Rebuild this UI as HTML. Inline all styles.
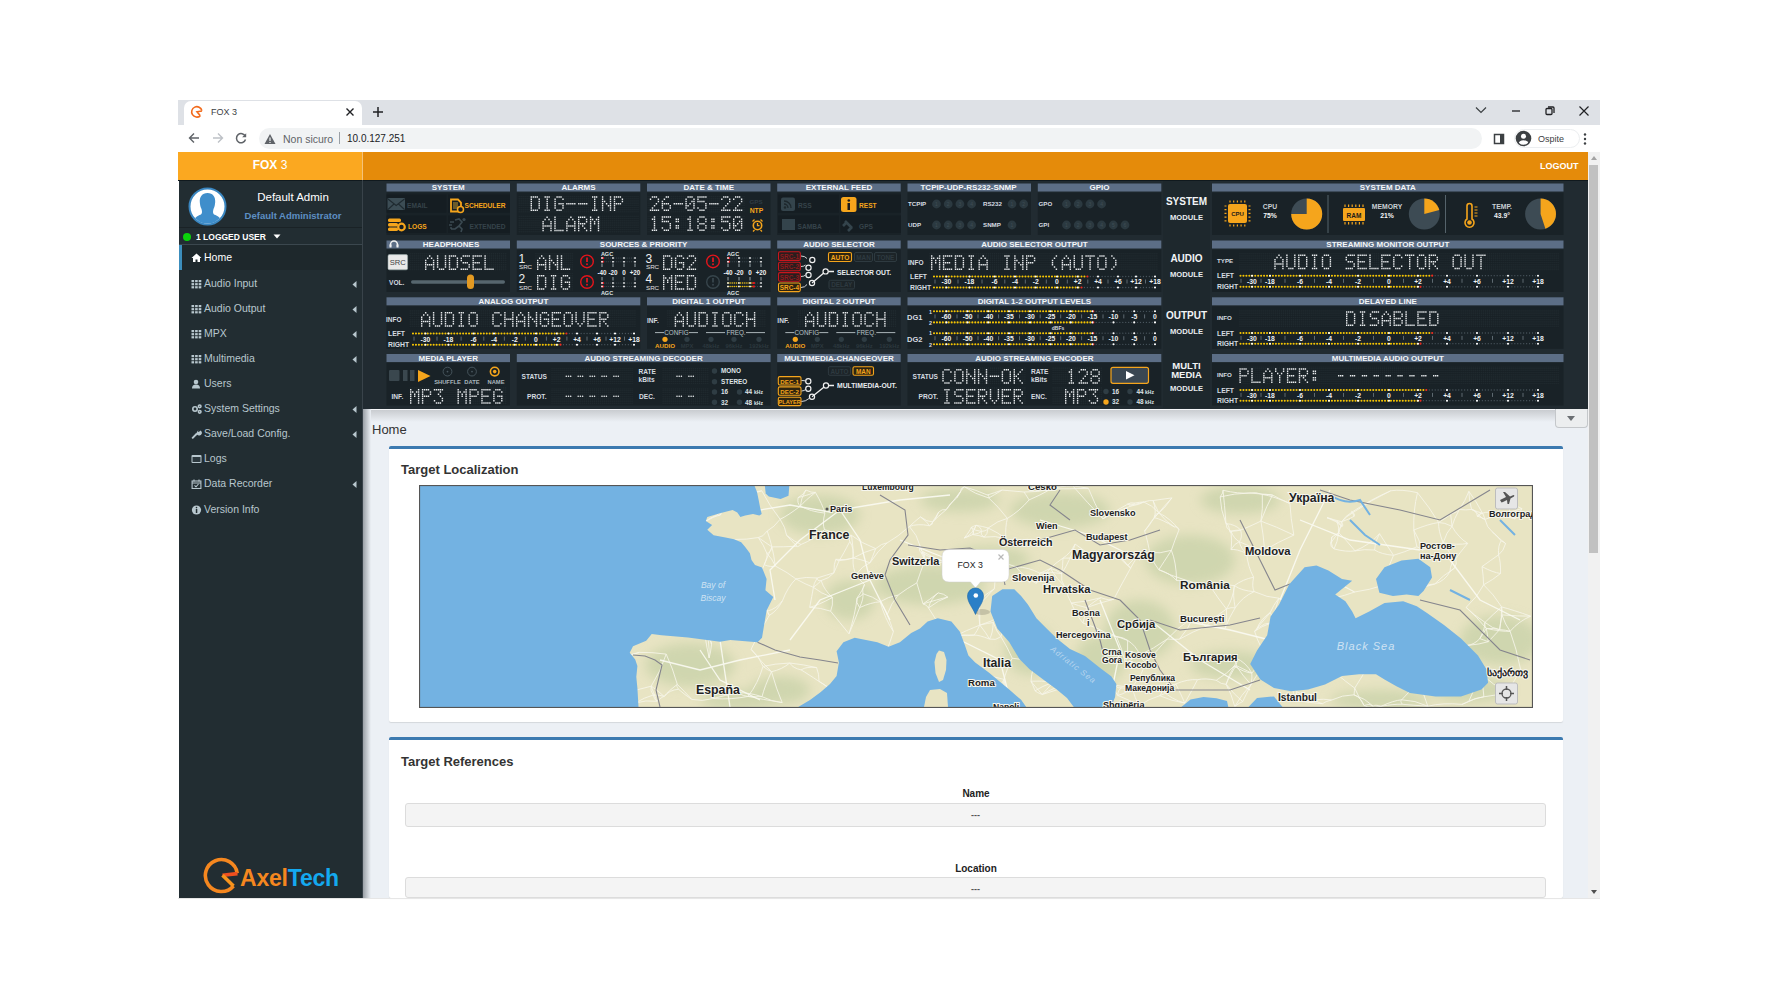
<!DOCTYPE html>
<html><head><meta charset="utf-8">
<style>
*{box-sizing:border-box;margin:0;padding:0}
html,body{width:1777px;height:1000px;overflow:hidden;background:#fff;font-family:"Liberation Sans",sans-serif}
.a{position:absolute}
#tabstrip{left:178px;top:100px;width:1422px;height:25px;background:#dee1e6}
#tab{left:184px;top:101px;width:178px;height:24px;background:#fff;border-radius:7px 7px 0 0}
#toolbar{left:178px;top:125px;width:1422px;height:27px;background:#fff}
#omni{left:259px;top:128px;width:1223px;height:21px;background:#f1f3f4;border-radius:11px}
.chrome-t{font-size:10.5px;color:#5f6368;white-space:nowrap}
#hdrL{left:178px;top:152px;width:184px;height:28px;background:#fba820}
#hdrR{left:362px;top:152px;width:1226px;height:28px;background:#e58b0a}
#side{left:179px;top:180px;width:184px;height:718px;background:#222d32}
#dash{left:363px;top:181px;width:1225px;height:228px;background:#212b31}
#content{left:363px;top:409px;width:1225px;height:489px;background:#ecf0f5}
#scroll{left:1588px;top:152px;width:12px;height:746px;background:#f1f1f1}
.card{background:#fff;border-top:3px solid #3c7ab0;border-radius:2px;box-shadow:0 1px 1px rgba(0,0,0,0.1)}
</style></head><body>
<div id="tabstrip" class="a"></div>
<div id="tab" class="a"></div>
<div id="toolbar" class="a"></div>
<div id="omni" class="a"></div>

<!-- tab strip details -->
<svg class="a" style="left:178px;top:100px" width="1422" height="26">
 <path d="M0,0 H6 V25 H0Z" fill="#dee1e6"/>
</svg>
<svg class="a" style="left:190px;top:105px" width="14" height="14" viewBox="0 0 14 14">
 <path d="M11.9,5.6 A5.2,5.2 0 1 0 10.3,10.8" fill="none" stroke="#f26a1b" stroke-width="1.6"/>
 <path d="M12,6 L7,6.8 L10.3,10.8" fill="none" stroke="#f26a1b" stroke-width="1.6"/>
</svg>
<div class="a chrome-t" style="left:211px;top:107px;font-size:9px;color:#3c4043">FOX 3</div>
<svg class="a" style="left:345px;top:107px" width="10" height="10" viewBox="0 0 10 10"><path d="M1.5,1.5 L8.5,8.5 M8.5,1.5 L1.5,8.5" stroke="#202124" stroke-width="1.4"/></svg>
<svg class="a" style="left:372px;top:106px" width="12" height="12" viewBox="0 0 12 12"><path d="M6,1 V11 M1,6 H11" stroke="#202124" stroke-width="1.5"/></svg>
<svg class="a" style="left:1475px;top:106px" width="12" height="8" viewBox="0 0 12 8"><path d="M1,1.5 L6,6.5 L11,1.5" fill="none" stroke="#3c4043" stroke-width="1.2"/></svg>
<svg class="a" style="left:1510px;top:106px" width="12" height="10" viewBox="0 0 12 10"><path d="M2,5 H10" stroke="#202124" stroke-width="1.3"/></svg>
<svg class="a" style="left:1544px;top:105px" width="12" height="12" viewBox="0 0 12 12"><rect x="2" y="3.5" width="6" height="6" rx="1" fill="none" stroke="#202124" stroke-width="1.3"/><path d="M4,2 H9 Q10,2 10,3 V8" fill="none" stroke="#202124" stroke-width="1.3"/></svg>
<svg class="a" style="left:1577px;top:104px" width="14" height="14" viewBox="0 0 14 14"><path d="M2.5,2.5 L11.5,11.5 M11.5,2.5 L2.5,11.5" stroke="#202124" stroke-width="1.2"/></svg>
<!-- toolbar -->
<svg class="a" style="left:187px;top:131px" width="14" height="14" viewBox="0 0 14 14"><path d="M12,7 H2.5 M7,2.5 L2.5,7 L7,11.5" fill="none" stroke="#5f6368" stroke-width="1.4"/></svg>
<svg class="a" style="left:211px;top:131px" width="14" height="14" viewBox="0 0 14 14"><path d="M2,7 H11.5 M7,2.5 L11.5,7 L7,11.5" fill="none" stroke="#bdc1c6" stroke-width="1.4"/></svg>
<svg class="a" style="left:234px;top:131px" width="14" height="14" viewBox="0 0 14 14"><path d="M11.3,5.3 A4.6,4.6 0 1 0 11.5,8.5" fill="none" stroke="#5f6368" stroke-width="1.5"/><path d="M12.2,2.2 V6.3 H8.1Z" fill="#5f6368"/></svg>
<svg class="a" style="left:264px;top:133px" width="12" height="12" viewBox="0 0 12 12"><path d="M6,1 L11.5,11 H0.5Z" fill="#5f6368"/><path d="M6,4.5 V8 M6,9 V10" stroke="#f1f3f4" stroke-width="1.2"/></svg>
<div class="a chrome-t" style="left:283px;top:133px;font-size:10.5px;color:#5f6368">Non sicuro</div>
<div class="a" style="left:339px;top:132px;width:1px;height:12px;background:#9aa0a6"></div>
<div class="a chrome-t" style="left:347px;top:133px;font-size:10px;color:#202124">10.0.127.251</div>
<svg class="a" style="left:1492px;top:132px" width="14" height="14" viewBox="0 0 14 14"><rect x="2.5" y="2.5" width="9" height="9" fill="none" stroke="#3c4043" stroke-width="1.5"/><rect x="8" y="2.5" width="3.5" height="9" fill="#3c4043"/></svg>
<div class="a" style="left:1514px;top:129px;width:66px;height:19px;border:1px solid #eceef0;border-radius:10px"></div>
<svg class="a" style="left:1515px;top:130px" width="17" height="17" viewBox="0 0 17 17"><defs><clipPath id="pc"><circle cx="8.5" cy="8.5" r="6.3"/></clipPath></defs><circle cx="8.5" cy="8.5" r="7.8" fill="#3c4043"/><g clip-path="url(#pc)" fill="#fff"><circle cx="8.5" cy="6.3" r="2.5"/><ellipse cx="8.5" cy="13.8" rx="5" ry="3.6"/></g></svg>
<div class="a chrome-t" style="left:1538px;top:133.5px;font-size:9px;color:#3c4043">Ospite</div>
<svg class="a" style="left:1581px;top:132px" width="8" height="14" viewBox="0 0 8 14"><circle cx="4" cy="2.5" r="1.2" fill="#3c4043"/><circle cx="4" cy="7" r="1.2" fill="#3c4043"/><circle cx="4" cy="11.5" r="1.2" fill="#3c4043"/></svg>
<div id="hdrL" class="a"></div>
<div id="hdrR" class="a"></div>
<div id="side" class="a"></div>

<div class="a" style="left:362px;top:152px;width:1px;height:28px;background:#f5c27a"></div>
<div class="a" style="left:178px;top:151px;width:184px;height:28px;line-height:28px;text-align:center;color:#fff;font-size:12px"><b>FOX</b> 3</div>
<div class="a" style="left:1540px;top:161px;font-size:9px;font-weight:bold;color:#fff">LOGOUT</div>
<div class="a" style="left:178px;top:180px;width:1410px;height:1px;background:#10191e"></div>
<!-- sidebar -->
<div class="a" style="left:362px;top:180px;width:1px;height:718px;background:#39434a"></div>
<svg class="a" style="left:188px;top:187px" width="39" height="39" viewBox="0 0 39 39">
 <defs><clipPath id="avc"><circle cx="19.5" cy="19.5" r="17"/></clipPath></defs>
 <circle cx="19.5" cy="19.5" r="18" fill="#fff" stroke="#3a86c0" stroke-width="2"/>
 <g clip-path="url(#avc)" fill="#3f8ecb">
  <path d="M19.5,6 C14,6 11.5,10 11.8,15 C12,18 12.5,20 13.5,22 C14,24 14.5,26 13,27.5 C9,29 6,31 4,36 L35,36 C33,31 30,29 26,27.5 C24.5,26 25,24 25.5,22 C26.5,20 27,18 27.2,15 C27.5,10 25,6 19.5,6Z"/>
  <rect x="0" y="34" width="39" height="6"/>
 </g>
</svg>
<div class="a" style="left:229px;top:191px;width:128px;text-align:center;color:#fff;font-size:11.5px">Default Admin</div>
<div class="a" style="left:229px;top:210px;width:128px;text-align:center;color:#5d8fc4;font-size:9.5px;font-weight:bold">Default Administrator</div>
<div class="a" style="left:179px;top:227px;width:183px;height:1px;background:#1a2226"></div>
<div class="a" style="left:179px;top:244px;width:183px;height:1px;background:#3b474e"></div>
<div class="a" style="left:183px;top:233px;width:8px;height:8px;border-radius:50%;background:#0bd30b"></div>
<div class="a" style="left:196px;top:231.5px;color:#fff;font-size:8.5px;font-weight:bold">1 LOGGED USER</div>
<svg class="a" style="left:273px;top:234px" width="8" height="5" viewBox="0 0 8 5"><path d="M0.5,0.5 H7.5 L4,4.5Z" fill="#fff"/></svg>
<div class="a" style="left:179px;top:245px;width:183px;height:25px;background:#1e282c"></div>
<div class="a" style="left:179px;top:245px;width:3px;height:25px;background:#3c8dbc"></div>
<svg class="a" style="left:191px;top:253px" width="11" height="10" viewBox="0 0 10 10"><path d="M5,0.5 L0,5 H1.5 V9 H4 V6.5 H6 V9 H8.5 V5 H10Z" fill="#fff"/></svg>
<div class="a" style="left:204px;top:251px;color:#fff;font-size:10.5px;white-space:nowrap">Home</div>
<svg class="a" style="left:191px;top:279px" width="11" height="10" viewBox="0 0 10 10"><g fill="#b8c7ce"><rect x="0" y="1" width="2.6" height="2.2"/><rect x="3.6" y="1" width="2.6" height="2.2"/><rect x="7.2" y="1" width="2.6" height="2.2"/><rect x="0" y="4.1" width="2.6" height="2.2"/><rect x="3.6" y="4.1" width="2.6" height="2.2"/><rect x="7.2" y="4.1" width="2.6" height="2.2"/><rect x="0" y="7.2" width="2.6" height="2.2"/><rect x="3.6" y="7.2" width="2.6" height="2.2"/><rect x="7.2" y="7.2" width="2.6" height="2.2"/></g></svg>
<div class="a" style="left:204px;top:277px;color:#b8c7ce;font-size:10.5px;white-space:nowrap">Audio Input</div>
<svg class="a" style="left:352px;top:281px" width="5" height="7" viewBox="0 0 5 7"><path d="M4.5,0 V7 L0.5,3.5Z" fill="#b8c7ce"/></svg>
<svg class="a" style="left:191px;top:304px" width="11" height="10" viewBox="0 0 10 10"><g fill="#b8c7ce"><rect x="0" y="1" width="2.6" height="2.2"/><rect x="3.6" y="1" width="2.6" height="2.2"/><rect x="7.2" y="1" width="2.6" height="2.2"/><rect x="0" y="4.1" width="2.6" height="2.2"/><rect x="3.6" y="4.1" width="2.6" height="2.2"/><rect x="7.2" y="4.1" width="2.6" height="2.2"/><rect x="0" y="7.2" width="2.6" height="2.2"/><rect x="3.6" y="7.2" width="2.6" height="2.2"/><rect x="7.2" y="7.2" width="2.6" height="2.2"/></g></svg>
<div class="a" style="left:204px;top:302px;color:#b8c7ce;font-size:10.5px;white-space:nowrap">Audio Output</div>
<svg class="a" style="left:352px;top:306px" width="5" height="7" viewBox="0 0 5 7"><path d="M4.5,0 V7 L0.5,3.5Z" fill="#b8c7ce"/></svg>
<svg class="a" style="left:191px;top:329px" width="11" height="10" viewBox="0 0 10 10"><g fill="#b8c7ce"><rect x="0" y="1" width="2.6" height="2.2"/><rect x="3.6" y="1" width="2.6" height="2.2"/><rect x="7.2" y="1" width="2.6" height="2.2"/><rect x="0" y="4.1" width="2.6" height="2.2"/><rect x="3.6" y="4.1" width="2.6" height="2.2"/><rect x="7.2" y="4.1" width="2.6" height="2.2"/><rect x="0" y="7.2" width="2.6" height="2.2"/><rect x="3.6" y="7.2" width="2.6" height="2.2"/><rect x="7.2" y="7.2" width="2.6" height="2.2"/></g></svg>
<div class="a" style="left:204px;top:327px;color:#b8c7ce;font-size:10.5px;white-space:nowrap">MPX</div>
<svg class="a" style="left:352px;top:331px" width="5" height="7" viewBox="0 0 5 7"><path d="M4.5,0 V7 L0.5,3.5Z" fill="#b8c7ce"/></svg>
<svg class="a" style="left:191px;top:354px" width="11" height="10" viewBox="0 0 10 10"><g fill="#b8c7ce"><rect x="0" y="1" width="2.6" height="2.2"/><rect x="3.6" y="1" width="2.6" height="2.2"/><rect x="7.2" y="1" width="2.6" height="2.2"/><rect x="0" y="4.1" width="2.6" height="2.2"/><rect x="3.6" y="4.1" width="2.6" height="2.2"/><rect x="7.2" y="4.1" width="2.6" height="2.2"/><rect x="0" y="7.2" width="2.6" height="2.2"/><rect x="3.6" y="7.2" width="2.6" height="2.2"/><rect x="7.2" y="7.2" width="2.6" height="2.2"/></g></svg>
<div class="a" style="left:204px;top:352px;color:#b8c7ce;font-size:10.5px;white-space:nowrap">Multimedia</div>
<svg class="a" style="left:352px;top:356px" width="5" height="7" viewBox="0 0 5 7"><path d="M4.5,0 V7 L0.5,3.5Z" fill="#b8c7ce"/></svg>
<svg class="a" style="left:191px;top:379px" width="11" height="10" viewBox="0 0 10 10"><g fill="#b8c7ce"><circle cx="4.5" cy="3" r="2.3"/><path d="M0.5,9.5 Q0.5,5.5 4.5,5.5 Q8.5,5.5 8.5,9.5Z"/></g></svg>
<div class="a" style="left:204px;top:377px;color:#b8c7ce;font-size:10.5px;white-space:nowrap">Users</div>
<svg class="a" style="left:191px;top:404px" width="11" height="10" viewBox="0 0 10 10"><g fill="none" stroke="#b8c7ce" stroke-width="1.6"><circle cx="3.5" cy="5" r="2.2"/><circle cx="8.2" cy="2.3" r="1.3"/><circle cx="8.2" cy="7.8" r="1.3"/></g></svg>
<div class="a" style="left:204px;top:402px;color:#b8c7ce;font-size:10.5px;white-space:nowrap">System Settings</div>
<svg class="a" style="left:352px;top:406px" width="5" height="7" viewBox="0 0 5 7"><path d="M4.5,0 V7 L0.5,3.5Z" fill="#b8c7ce"/></svg>
<svg class="a" style="left:191px;top:429px" width="11" height="10" viewBox="0 0 10 10"><path d="M1.2,8.8 L5,5" stroke="#b8c7ce" stroke-width="1.9" stroke-linecap="round"/><path d="M5.2,3.6 A2.6,2.6 0 1 0 8.9,1.6 L7.4,3 L6.4,2.6 L6.9,1.1Z" fill="#b8c7ce"/></svg>
<div class="a" style="left:204px;top:427px;color:#b8c7ce;font-size:10.5px;white-space:nowrap">Save/Load Config.</div>
<svg class="a" style="left:352px;top:431px" width="5" height="7" viewBox="0 0 5 7"><path d="M4.5,0 V7 L0.5,3.5Z" fill="#b8c7ce"/></svg>
<svg class="a" style="left:191px;top:454px" width="11" height="10" viewBox="0 0 10 10"><g><rect x="0" y="1" width="10" height="8" rx="1" fill="#b8c7ce"/><rect x="1" y="3" width="8" height="5" fill="#2c383e"/></g></svg>
<div class="a" style="left:204px;top:452px;color:#b8c7ce;font-size:10.5px;white-space:nowrap">Logs</div>
<svg class="a" style="left:191px;top:479px" width="11" height="10" viewBox="0 0 10 10"><g fill="none" stroke="#b8c7ce" stroke-width="1.1"><rect x="0.6" y="2" width="8.8" height="7.5"/><path d="M0.6,4 H9.4 M2.5,0.5 V2.5 M7.5,0.5 V2.5 M3,6.3 L4.5,7.8 L7,5"/></g></svg>
<div class="a" style="left:204px;top:477px;color:#b8c7ce;font-size:10.5px;white-space:nowrap">Data Recorder</div>
<svg class="a" style="left:352px;top:481px" width="5" height="7" viewBox="0 0 5 7"><path d="M4.5,0 V7 L0.5,3.5Z" fill="#b8c7ce"/></svg>
<svg class="a" style="left:191px;top:505px" width="11" height="10" viewBox="0 0 10 10"><g><circle cx="5" cy="5" r="4.6" fill="#b8c7ce"/><rect x="4.3" y="4" width="1.5" height="4" fill="#222d32"/><circle cx="5" cy="2.6" r="0.8" fill="#222d32"/></g></svg>
<div class="a" style="left:204px;top:503px;color:#b8c7ce;font-size:10.5px;white-space:nowrap">Version Info</div>

<svg class="a" style="left:200px;top:856px" width="42" height="40" viewBox="200 856 42 40">
 <path d="M237.2,873.2 A16,16 0 1 0 233.5,886" fill="none" stroke="#f5871f" stroke-width="3.6"/>
 <path d="M237.5,873.6 L222.5,875.3" stroke="#ef4f1f" stroke-width="3.6"/>
 <path d="M222.5,875.3 L233.5,886" stroke="#f7941d" stroke-width="3.6"/>
</svg>
<div class="a" style="left:240px;top:864.5px;font-size:23px;font-weight:bold;white-space:nowrap;letter-spacing:-0.2px"><span style="color:#f5871f">Axel</span><span style="color:#14a9ef">Tech</span></div>
<div id="dash" class="a"></div>
<svg class="a" style="left:0;top:0" width="1777" height="1000" font-family="Liberation Sans, sans-serif">
<defs><path id="g65" d="M4 0h1.4v1.5h-1.4zM2 2.2h1.4v1.5h-1.4zM5.9 2.2h1.4v1.5h-1.4zM0 4.4h1.4v1.5h-1.4zM7.9 4.4h1.4v1.5h-1.4zM0 6.6h1.4v1.5h-1.4zM7.9 6.6h1.4v1.5h-1.4zM0 8.8h1.4v1.5h-1.4zM2 8.8h1.4v1.5h-1.4zM4 8.8h1.4v1.5h-1.4zM5.9 8.8h1.4v1.5h-1.4zM7.9 8.8h1.4v1.5h-1.4zM0 11h1.4v1.5h-1.4zM7.9 11h1.4v1.5h-1.4zM0 13.2h1.4v1.5h-1.4zM7.9 13.2h1.4v1.5h-1.4z"/><path id="g66" d="M0 0h1.4v1.5h-1.4zM2 0h1.4v1.5h-1.4zM4 0h1.4v1.5h-1.4zM5.9 0h1.4v1.5h-1.4zM0 2.2h1.4v1.5h-1.4zM7.9 2.2h1.4v1.5h-1.4zM0 4.4h1.4v1.5h-1.4zM7.9 4.4h1.4v1.5h-1.4zM0 6.6h1.4v1.5h-1.4zM2 6.6h1.4v1.5h-1.4zM4 6.6h1.4v1.5h-1.4zM5.9 6.6h1.4v1.5h-1.4zM0 8.8h1.4v1.5h-1.4zM7.9 8.8h1.4v1.5h-1.4zM0 11h1.4v1.5h-1.4zM7.9 11h1.4v1.5h-1.4zM0 13.2h1.4v1.5h-1.4zM2 13.2h1.4v1.5h-1.4zM4 13.2h1.4v1.5h-1.4zM5.9 13.2h1.4v1.5h-1.4z"/><path id="g67" d="M2 0h1.4v1.5h-1.4zM4 0h1.4v1.5h-1.4zM5.9 0h1.4v1.5h-1.4zM0 2.2h1.4v1.5h-1.4zM7.9 2.2h1.4v1.5h-1.4zM0 4.4h1.4v1.5h-1.4zM0 6.6h1.4v1.5h-1.4zM0 8.8h1.4v1.5h-1.4zM0 11h1.4v1.5h-1.4zM7.9 11h1.4v1.5h-1.4zM2 13.2h1.4v1.5h-1.4zM4 13.2h1.4v1.5h-1.4zM5.9 13.2h1.4v1.5h-1.4z"/><path id="g68" d="M0 0h1.4v1.5h-1.4zM2 0h1.4v1.5h-1.4zM4 0h1.4v1.5h-1.4zM5.9 0h1.4v1.5h-1.4zM0 2.2h1.4v1.5h-1.4zM7.9 2.2h1.4v1.5h-1.4zM0 4.4h1.4v1.5h-1.4zM7.9 4.4h1.4v1.5h-1.4zM0 6.6h1.4v1.5h-1.4zM7.9 6.6h1.4v1.5h-1.4zM0 8.8h1.4v1.5h-1.4zM7.9 8.8h1.4v1.5h-1.4zM0 11h1.4v1.5h-1.4zM7.9 11h1.4v1.5h-1.4zM0 13.2h1.4v1.5h-1.4zM2 13.2h1.4v1.5h-1.4zM4 13.2h1.4v1.5h-1.4zM5.9 13.2h1.4v1.5h-1.4z"/><path id="g69" d="M0 0h1.4v1.5h-1.4zM2 0h1.4v1.5h-1.4zM4 0h1.4v1.5h-1.4zM5.9 0h1.4v1.5h-1.4zM7.9 0h1.4v1.5h-1.4zM0 2.2h1.4v1.5h-1.4zM0 4.4h1.4v1.5h-1.4zM0 6.6h1.4v1.5h-1.4zM2 6.6h1.4v1.5h-1.4zM4 6.6h1.4v1.5h-1.4zM5.9 6.6h1.4v1.5h-1.4zM0 8.8h1.4v1.5h-1.4zM0 11h1.4v1.5h-1.4zM0 13.2h1.4v1.5h-1.4zM2 13.2h1.4v1.5h-1.4zM4 13.2h1.4v1.5h-1.4zM5.9 13.2h1.4v1.5h-1.4zM7.9 13.2h1.4v1.5h-1.4z"/><path id="g70" d="M0 0h1.4v1.5h-1.4zM2 0h1.4v1.5h-1.4zM4 0h1.4v1.5h-1.4zM5.9 0h1.4v1.5h-1.4zM7.9 0h1.4v1.5h-1.4zM0 2.2h1.4v1.5h-1.4zM0 4.4h1.4v1.5h-1.4zM0 6.6h1.4v1.5h-1.4zM2 6.6h1.4v1.5h-1.4zM4 6.6h1.4v1.5h-1.4zM5.9 6.6h1.4v1.5h-1.4zM0 8.8h1.4v1.5h-1.4zM0 11h1.4v1.5h-1.4zM0 13.2h1.4v1.5h-1.4z"/><path id="g71" d="M2 0h1.4v1.5h-1.4zM4 0h1.4v1.5h-1.4zM5.9 0h1.4v1.5h-1.4zM0 2.2h1.4v1.5h-1.4zM7.9 2.2h1.4v1.5h-1.4zM0 4.4h1.4v1.5h-1.4zM0 6.6h1.4v1.5h-1.4zM4 6.6h1.4v1.5h-1.4zM5.9 6.6h1.4v1.5h-1.4zM7.9 6.6h1.4v1.5h-1.4zM0 8.8h1.4v1.5h-1.4zM7.9 8.8h1.4v1.5h-1.4zM0 11h1.4v1.5h-1.4zM7.9 11h1.4v1.5h-1.4zM2 13.2h1.4v1.5h-1.4zM4 13.2h1.4v1.5h-1.4zM5.9 13.2h1.4v1.5h-1.4z"/><path id="g72" d="M0 0h1.4v1.5h-1.4zM7.9 0h1.4v1.5h-1.4zM0 2.2h1.4v1.5h-1.4zM7.9 2.2h1.4v1.5h-1.4zM0 4.4h1.4v1.5h-1.4zM7.9 4.4h1.4v1.5h-1.4zM0 6.6h1.4v1.5h-1.4zM2 6.6h1.4v1.5h-1.4zM4 6.6h1.4v1.5h-1.4zM5.9 6.6h1.4v1.5h-1.4zM7.9 6.6h1.4v1.5h-1.4zM0 8.8h1.4v1.5h-1.4zM7.9 8.8h1.4v1.5h-1.4zM0 11h1.4v1.5h-1.4zM7.9 11h1.4v1.5h-1.4zM0 13.2h1.4v1.5h-1.4zM7.9 13.2h1.4v1.5h-1.4z"/><path id="g73" d="M2 0h1.4v1.5h-1.4zM4 0h1.4v1.5h-1.4zM5.9 0h1.4v1.5h-1.4zM4 2.2h1.4v1.5h-1.4zM4 4.4h1.4v1.5h-1.4zM4 6.6h1.4v1.5h-1.4zM4 8.8h1.4v1.5h-1.4zM4 11h1.4v1.5h-1.4zM2 13.2h1.4v1.5h-1.4zM4 13.2h1.4v1.5h-1.4zM5.9 13.2h1.4v1.5h-1.4z"/><path id="g75" d="M0 0h1.4v1.5h-1.4zM7.9 0h1.4v1.5h-1.4zM0 2.2h1.4v1.5h-1.4zM5.9 2.2h1.4v1.5h-1.4zM0 4.4h1.4v1.5h-1.4zM4 4.4h1.4v1.5h-1.4zM0 6.6h1.4v1.5h-1.4zM2 6.6h1.4v1.5h-1.4zM0 8.8h1.4v1.5h-1.4zM4 8.8h1.4v1.5h-1.4zM0 11h1.4v1.5h-1.4zM5.9 11h1.4v1.5h-1.4zM0 13.2h1.4v1.5h-1.4zM7.9 13.2h1.4v1.5h-1.4z"/><path id="g76" d="M0 0h1.4v1.5h-1.4zM0 2.2h1.4v1.5h-1.4zM0 4.4h1.4v1.5h-1.4zM0 6.6h1.4v1.5h-1.4zM0 8.8h1.4v1.5h-1.4zM0 11h1.4v1.5h-1.4zM0 13.2h1.4v1.5h-1.4zM2 13.2h1.4v1.5h-1.4zM4 13.2h1.4v1.5h-1.4zM5.9 13.2h1.4v1.5h-1.4zM7.9 13.2h1.4v1.5h-1.4z"/><path id="g77" d="M0 0h1.4v1.5h-1.4zM7.9 0h1.4v1.5h-1.4zM0 2.2h1.4v1.5h-1.4zM2 2.2h1.4v1.5h-1.4zM5.9 2.2h1.4v1.5h-1.4zM7.9 2.2h1.4v1.5h-1.4zM0 4.4h1.4v1.5h-1.4zM4 4.4h1.4v1.5h-1.4zM7.9 4.4h1.4v1.5h-1.4zM0 6.6h1.4v1.5h-1.4zM4 6.6h1.4v1.5h-1.4zM7.9 6.6h1.4v1.5h-1.4zM0 8.8h1.4v1.5h-1.4zM7.9 8.8h1.4v1.5h-1.4zM0 11h1.4v1.5h-1.4zM7.9 11h1.4v1.5h-1.4zM0 13.2h1.4v1.5h-1.4zM7.9 13.2h1.4v1.5h-1.4z"/><path id="g78" d="M0 0h1.4v1.5h-1.4zM7.9 0h1.4v1.5h-1.4zM0 2.2h1.4v1.5h-1.4zM7.9 2.2h1.4v1.5h-1.4zM0 4.4h1.4v1.5h-1.4zM2 4.4h1.4v1.5h-1.4zM7.9 4.4h1.4v1.5h-1.4zM0 6.6h1.4v1.5h-1.4zM4 6.6h1.4v1.5h-1.4zM7.9 6.6h1.4v1.5h-1.4zM0 8.8h1.4v1.5h-1.4zM5.9 8.8h1.4v1.5h-1.4zM7.9 8.8h1.4v1.5h-1.4zM0 11h1.4v1.5h-1.4zM7.9 11h1.4v1.5h-1.4zM0 13.2h1.4v1.5h-1.4zM7.9 13.2h1.4v1.5h-1.4z"/><path id="g79" d="M2 0h1.4v1.5h-1.4zM4 0h1.4v1.5h-1.4zM5.9 0h1.4v1.5h-1.4zM0 2.2h1.4v1.5h-1.4zM7.9 2.2h1.4v1.5h-1.4zM0 4.4h1.4v1.5h-1.4zM7.9 4.4h1.4v1.5h-1.4zM0 6.6h1.4v1.5h-1.4zM7.9 6.6h1.4v1.5h-1.4zM0 8.8h1.4v1.5h-1.4zM7.9 8.8h1.4v1.5h-1.4zM0 11h1.4v1.5h-1.4zM7.9 11h1.4v1.5h-1.4zM2 13.2h1.4v1.5h-1.4zM4 13.2h1.4v1.5h-1.4zM5.9 13.2h1.4v1.5h-1.4z"/><path id="g80" d="M0 0h1.4v1.5h-1.4zM2 0h1.4v1.5h-1.4zM4 0h1.4v1.5h-1.4zM5.9 0h1.4v1.5h-1.4zM0 2.2h1.4v1.5h-1.4zM7.9 2.2h1.4v1.5h-1.4zM0 4.4h1.4v1.5h-1.4zM7.9 4.4h1.4v1.5h-1.4zM0 6.6h1.4v1.5h-1.4zM2 6.6h1.4v1.5h-1.4zM4 6.6h1.4v1.5h-1.4zM5.9 6.6h1.4v1.5h-1.4zM0 8.8h1.4v1.5h-1.4zM0 11h1.4v1.5h-1.4zM0 13.2h1.4v1.5h-1.4z"/><path id="g82" d="M0 0h1.4v1.5h-1.4zM2 0h1.4v1.5h-1.4zM4 0h1.4v1.5h-1.4zM5.9 0h1.4v1.5h-1.4zM0 2.2h1.4v1.5h-1.4zM7.9 2.2h1.4v1.5h-1.4zM0 4.4h1.4v1.5h-1.4zM7.9 4.4h1.4v1.5h-1.4zM0 6.6h1.4v1.5h-1.4zM2 6.6h1.4v1.5h-1.4zM4 6.6h1.4v1.5h-1.4zM5.9 6.6h1.4v1.5h-1.4zM0 8.8h1.4v1.5h-1.4zM4 8.8h1.4v1.5h-1.4zM0 11h1.4v1.5h-1.4zM5.9 11h1.4v1.5h-1.4zM0 13.2h1.4v1.5h-1.4zM7.9 13.2h1.4v1.5h-1.4z"/><path id="g83" d="M2 0h1.4v1.5h-1.4zM4 0h1.4v1.5h-1.4zM5.9 0h1.4v1.5h-1.4zM7.9 0h1.4v1.5h-1.4zM0 2.2h1.4v1.5h-1.4zM0 4.4h1.4v1.5h-1.4zM2 6.6h1.4v1.5h-1.4zM4 6.6h1.4v1.5h-1.4zM5.9 6.6h1.4v1.5h-1.4zM7.9 8.8h1.4v1.5h-1.4zM7.9 11h1.4v1.5h-1.4zM0 13.2h1.4v1.5h-1.4zM2 13.2h1.4v1.5h-1.4zM4 13.2h1.4v1.5h-1.4zM5.9 13.2h1.4v1.5h-1.4z"/><path id="g84" d="M0 0h1.4v1.5h-1.4zM2 0h1.4v1.5h-1.4zM4 0h1.4v1.5h-1.4zM5.9 0h1.4v1.5h-1.4zM7.9 0h1.4v1.5h-1.4zM4 2.2h1.4v1.5h-1.4zM4 4.4h1.4v1.5h-1.4zM4 6.6h1.4v1.5h-1.4zM4 8.8h1.4v1.5h-1.4zM4 11h1.4v1.5h-1.4zM4 13.2h1.4v1.5h-1.4z"/><path id="g85" d="M0 0h1.4v1.5h-1.4zM7.9 0h1.4v1.5h-1.4zM0 2.2h1.4v1.5h-1.4zM7.9 2.2h1.4v1.5h-1.4zM0 4.4h1.4v1.5h-1.4zM7.9 4.4h1.4v1.5h-1.4zM0 6.6h1.4v1.5h-1.4zM7.9 6.6h1.4v1.5h-1.4zM0 8.8h1.4v1.5h-1.4zM7.9 8.8h1.4v1.5h-1.4zM0 11h1.4v1.5h-1.4zM7.9 11h1.4v1.5h-1.4zM2 13.2h1.4v1.5h-1.4zM4 13.2h1.4v1.5h-1.4zM5.9 13.2h1.4v1.5h-1.4z"/><path id="g86" d="M0 0h1.4v1.5h-1.4zM7.9 0h1.4v1.5h-1.4zM0 2.2h1.4v1.5h-1.4zM7.9 2.2h1.4v1.5h-1.4zM0 4.4h1.4v1.5h-1.4zM7.9 4.4h1.4v1.5h-1.4zM0 6.6h1.4v1.5h-1.4zM7.9 6.6h1.4v1.5h-1.4zM0 8.8h1.4v1.5h-1.4zM7.9 8.8h1.4v1.5h-1.4zM2 11h1.4v1.5h-1.4zM5.9 11h1.4v1.5h-1.4zM4 13.2h1.4v1.5h-1.4z"/><path id="g89" d="M0 0h1.4v1.5h-1.4zM7.9 0h1.4v1.5h-1.4zM0 2.2h1.4v1.5h-1.4zM7.9 2.2h1.4v1.5h-1.4zM2 4.4h1.4v1.5h-1.4zM5.9 4.4h1.4v1.5h-1.4zM4 6.6h1.4v1.5h-1.4zM4 8.8h1.4v1.5h-1.4zM4 11h1.4v1.5h-1.4zM4 13.2h1.4v1.5h-1.4z"/><path id="g48" d="M2 0h1.4v1.5h-1.4zM4 0h1.4v1.5h-1.4zM5.9 0h1.4v1.5h-1.4zM0 2.2h1.4v1.5h-1.4zM7.9 2.2h1.4v1.5h-1.4zM0 4.4h1.4v1.5h-1.4zM5.9 4.4h1.4v1.5h-1.4zM7.9 4.4h1.4v1.5h-1.4zM0 6.6h1.4v1.5h-1.4zM4 6.6h1.4v1.5h-1.4zM7.9 6.6h1.4v1.5h-1.4zM0 8.8h1.4v1.5h-1.4zM2 8.8h1.4v1.5h-1.4zM7.9 8.8h1.4v1.5h-1.4zM0 11h1.4v1.5h-1.4zM7.9 11h1.4v1.5h-1.4zM2 13.2h1.4v1.5h-1.4zM4 13.2h1.4v1.5h-1.4zM5.9 13.2h1.4v1.5h-1.4z"/><path id="g49" d="M4 0h1.4v1.5h-1.4zM2 2.2h1.4v1.5h-1.4zM4 2.2h1.4v1.5h-1.4zM4 4.4h1.4v1.5h-1.4zM4 6.6h1.4v1.5h-1.4zM4 8.8h1.4v1.5h-1.4zM4 11h1.4v1.5h-1.4zM2 13.2h1.4v1.5h-1.4zM4 13.2h1.4v1.5h-1.4zM5.9 13.2h1.4v1.5h-1.4z"/><path id="g50" d="M2 0h1.4v1.5h-1.4zM4 0h1.4v1.5h-1.4zM5.9 0h1.4v1.5h-1.4zM0 2.2h1.4v1.5h-1.4zM7.9 2.2h1.4v1.5h-1.4zM7.9 4.4h1.4v1.5h-1.4zM5.9 6.6h1.4v1.5h-1.4zM4 8.8h1.4v1.5h-1.4zM2 11h1.4v1.5h-1.4zM0 13.2h1.4v1.5h-1.4zM2 13.2h1.4v1.5h-1.4zM4 13.2h1.4v1.5h-1.4zM5.9 13.2h1.4v1.5h-1.4zM7.9 13.2h1.4v1.5h-1.4z"/><path id="g51" d="M0 0h1.4v1.5h-1.4zM2 0h1.4v1.5h-1.4zM4 0h1.4v1.5h-1.4zM5.9 0h1.4v1.5h-1.4zM7.9 0h1.4v1.5h-1.4zM5.9 2.2h1.4v1.5h-1.4zM4 4.4h1.4v1.5h-1.4zM5.9 6.6h1.4v1.5h-1.4zM7.9 8.8h1.4v1.5h-1.4zM0 11h1.4v1.5h-1.4zM7.9 11h1.4v1.5h-1.4zM2 13.2h1.4v1.5h-1.4zM4 13.2h1.4v1.5h-1.4zM5.9 13.2h1.4v1.5h-1.4z"/><path id="g53" d="M0 0h1.4v1.5h-1.4zM2 0h1.4v1.5h-1.4zM4 0h1.4v1.5h-1.4zM5.9 0h1.4v1.5h-1.4zM7.9 0h1.4v1.5h-1.4zM0 2.2h1.4v1.5h-1.4zM0 4.4h1.4v1.5h-1.4zM2 4.4h1.4v1.5h-1.4zM4 4.4h1.4v1.5h-1.4zM5.9 4.4h1.4v1.5h-1.4zM7.9 6.6h1.4v1.5h-1.4zM7.9 8.8h1.4v1.5h-1.4zM0 11h1.4v1.5h-1.4zM7.9 11h1.4v1.5h-1.4zM2 13.2h1.4v1.5h-1.4zM4 13.2h1.4v1.5h-1.4zM5.9 13.2h1.4v1.5h-1.4z"/><path id="g54" d="M4 0h1.4v1.5h-1.4zM5.9 0h1.4v1.5h-1.4zM2 2.2h1.4v1.5h-1.4zM0 4.4h1.4v1.5h-1.4zM0 6.6h1.4v1.5h-1.4zM2 6.6h1.4v1.5h-1.4zM4 6.6h1.4v1.5h-1.4zM5.9 6.6h1.4v1.5h-1.4zM0 8.8h1.4v1.5h-1.4zM7.9 8.8h1.4v1.5h-1.4zM0 11h1.4v1.5h-1.4zM7.9 11h1.4v1.5h-1.4zM2 13.2h1.4v1.5h-1.4zM4 13.2h1.4v1.5h-1.4zM5.9 13.2h1.4v1.5h-1.4z"/><path id="g56" d="M2 0h1.4v1.5h-1.4zM4 0h1.4v1.5h-1.4zM5.9 0h1.4v1.5h-1.4zM0 2.2h1.4v1.5h-1.4zM7.9 2.2h1.4v1.5h-1.4zM0 4.4h1.4v1.5h-1.4zM7.9 4.4h1.4v1.5h-1.4zM2 6.6h1.4v1.5h-1.4zM4 6.6h1.4v1.5h-1.4zM5.9 6.6h1.4v1.5h-1.4zM0 8.8h1.4v1.5h-1.4zM7.9 8.8h1.4v1.5h-1.4zM0 11h1.4v1.5h-1.4zM7.9 11h1.4v1.5h-1.4zM2 13.2h1.4v1.5h-1.4zM4 13.2h1.4v1.5h-1.4zM5.9 13.2h1.4v1.5h-1.4z"/><path id="g45" d="M0 6.6h1.4v1.5h-1.4zM2 6.6h1.4v1.5h-1.4zM4 6.6h1.4v1.5h-1.4zM5.9 6.6h1.4v1.5h-1.4zM7.9 6.6h1.4v1.5h-1.4z"/><path id="g95" d="M2 6.6h1.4v1.5h-1.4zM4 6.6h1.4v1.5h-1.4zM5.9 6.6h1.4v1.5h-1.4z"/><path id="g58" d="M2 2.2h1.4v1.5h-1.4zM4 2.2h1.4v1.5h-1.4zM2 4.4h1.4v1.5h-1.4zM4 4.4h1.4v1.5h-1.4zM2 8.8h1.4v1.5h-1.4zM4 8.8h1.4v1.5h-1.4zM2 11h1.4v1.5h-1.4zM4 11h1.4v1.5h-1.4z"/><path id="g40" d="M5.9 0h1.4v1.5h-1.4zM4 2.2h1.4v1.5h-1.4zM2 4.4h1.4v1.5h-1.4zM2 6.6h1.4v1.5h-1.4zM2 8.8h1.4v1.5h-1.4zM4 11h1.4v1.5h-1.4zM5.9 13.2h1.4v1.5h-1.4z"/><path id="g41" d="M2 0h1.4v1.5h-1.4zM4 2.2h1.4v1.5h-1.4zM5.9 4.4h1.4v1.5h-1.4zM5.9 6.6h1.4v1.5h-1.4zM5.9 8.8h1.4v1.5h-1.4zM4 11h1.4v1.5h-1.4zM2 13.2h1.4v1.5h-1.4z"/><path id="g32" d="M0 0"/><pattern id="ledgrid" width="1.98" height="2.2" patternUnits="userSpaceOnUse"><rect width="1.98" height="2.2" fill="#172025"/><rect width="1.3" height="1.5" fill="#1f292e"/></pattern></defs>
<rect x="386.5" y="192.5" width="123.5" height="42.5" fill="#192227"/>
<rect x="516.8" y="192.5" width="123.5" height="42.5" fill="#192227"/>
<rect x="647" y="192.5" width="123.5" height="42.5" fill="#192227"/>
<rect x="777.2" y="192.5" width="123.5" height="42.5" fill="#192227"/>
<rect x="907.5" y="192.5" width="123.5" height="42.5" fill="#192227"/>
<rect x="1037.8" y="192.5" width="123.5" height="42.5" fill="#192227"/>
<rect x="1212" y="192.5" width="351.5" height="42.5" fill="#192227"/>
<rect x="386.5" y="249.5" width="123.5" height="42.5" fill="#192227"/>
<rect x="516.8" y="249.5" width="253.8" height="42.5" fill="#192227"/>
<rect x="777.2" y="249.5" width="123.5" height="42.5" fill="#192227"/>
<rect x="907.5" y="249.5" width="253.8" height="42.5" fill="#192227"/>
<rect x="1212" y="249.5" width="351.5" height="42.5" fill="#192227"/>
<rect x="386.5" y="306.3" width="253.8" height="42.5" fill="#192227"/>
<rect x="647" y="306.3" width="123.5" height="42.5" fill="#192227"/>
<rect x="777.2" y="306.3" width="123.5" height="42.5" fill="#192227"/>
<rect x="907.5" y="306.3" width="253.8" height="42.5" fill="#192227"/>
<rect x="1212" y="306.3" width="351.5" height="42.5" fill="#192227"/>
<rect x="386.5" y="363" width="123.5" height="42.5" fill="#192227"/>
<rect x="516.8" y="363" width="253.8" height="42.5" fill="#192227"/>
<rect x="777.2" y="363" width="123.5" height="42.5" fill="#192227"/>
<rect x="907.5" y="363" width="253.8" height="42.5" fill="#192227"/>
<rect x="1212" y="363" width="351.5" height="42.5" fill="#192227"/>
<rect x="1163" y="181" width="47" height="227" fill="#1e282d"/>
<rect x="386.5" y="183.5" width="123.5" height="8" fill="#5c6e86"/>
<text x="448.2" y="190.4" font-size="8" fill="#f4f6f8" text-anchor="middle" font-weight="bold">SYSTEM</text>
<rect x="516.8" y="183.5" width="123.5" height="8" fill="#5c6e86"/>
<text x="578.5" y="190.4" font-size="8" fill="#f4f6f8" text-anchor="middle" font-weight="bold">ALARMS</text>
<rect x="647" y="183.5" width="123.5" height="8" fill="#5c6e86"/>
<text x="708.8" y="190.4" font-size="8" fill="#f4f6f8" text-anchor="middle" font-weight="bold">DATE &amp; TIME</text>
<rect x="777.2" y="183.5" width="123.5" height="8" fill="#5c6e86"/>
<text x="839" y="190.4" font-size="8" fill="#f4f6f8" text-anchor="middle" font-weight="bold">EXTERNAL FEED</text>
<rect x="907.5" y="183.5" width="123.5" height="8" fill="#5c6e86"/>
<text x="968.5" y="190.4" font-size="8" fill="#f4f6f8" text-anchor="middle" font-weight="bold">TCPIP-UDP-RS232-SNMP</text>
<rect x="1037.8" y="183.5" width="123.5" height="8" fill="#5c6e86"/>
<text x="1099.5" y="190.4" font-size="8" fill="#f4f6f8" text-anchor="middle" font-weight="bold">GPIO</text>
<rect x="1212" y="183.5" width="351.5" height="8" fill="#5c6e86"/>
<text x="1387.8" y="190.4" font-size="8" fill="#f4f6f8" text-anchor="middle" font-weight="bold">SYSTEM DATA</text>
<rect x="386.5" y="240.5" width="123.5" height="8" fill="#5c6e86"/>
<text x="451" y="247.4" font-size="8" fill="#f4f6f8" text-anchor="middle" font-weight="bold">HEADPHONES</text>
<rect x="516.8" y="240.5" width="253.8" height="8" fill="#5c6e86"/>
<text x="643.6" y="247.4" font-size="8" fill="#f4f6f8" text-anchor="middle" font-weight="bold">SOURCES &amp; PRIORITY</text>
<rect x="777.2" y="240.5" width="123.5" height="8" fill="#5c6e86"/>
<text x="839" y="247.4" font-size="8" fill="#f4f6f8" text-anchor="middle" font-weight="bold">AUDIO SELECTOR</text>
<rect x="907.5" y="240.5" width="253.8" height="8" fill="#5c6e86"/>
<text x="1034.4" y="247.4" font-size="8" fill="#f4f6f8" text-anchor="middle" font-weight="bold">AUDIO SELECTOR OUTPUT</text>
<rect x="1212" y="240.5" width="351.5" height="8" fill="#5c6e86"/>
<text x="1387.8" y="247.4" font-size="8" fill="#f4f6f8" text-anchor="middle" font-weight="bold">STREAMING MONITOR OUTPUT</text>
<rect x="386.5" y="297.3" width="253.8" height="8" fill="#5c6e86"/>
<text x="513.4" y="304.2" font-size="8" fill="#f4f6f8" text-anchor="middle" font-weight="bold">ANALOG OUTPUT</text>
<rect x="647" y="297.3" width="123.5" height="8" fill="#5c6e86"/>
<text x="708.8" y="304.2" font-size="8" fill="#f4f6f8" text-anchor="middle" font-weight="bold">DIGITAL 1 OUTPUT</text>
<rect x="777.2" y="297.3" width="123.5" height="8" fill="#5c6e86"/>
<text x="839" y="304.2" font-size="8" fill="#f4f6f8" text-anchor="middle" font-weight="bold">DIGITAL 2 OUTPUT</text>
<rect x="907.5" y="297.3" width="253.8" height="8" fill="#5c6e86"/>
<text x="1034.4" y="304.2" font-size="8" fill="#f4f6f8" text-anchor="middle" font-weight="bold">DIGITAL 1-2 OUTPUT LEVELS</text>
<rect x="1212" y="297.3" width="351.5" height="8" fill="#5c6e86"/>
<text x="1387.8" y="304.2" font-size="8" fill="#f4f6f8" text-anchor="middle" font-weight="bold">DELAYED LINE</text>
<rect x="386.5" y="354" width="123.5" height="8" fill="#5c6e86"/>
<text x="448.2" y="360.9" font-size="8" fill="#f4f6f8" text-anchor="middle" font-weight="bold">MEDIA PLAYER</text>
<rect x="516.8" y="354" width="253.8" height="8" fill="#5c6e86"/>
<text x="643.6" y="360.9" font-size="8" fill="#f4f6f8" text-anchor="middle" font-weight="bold">AUDIO STREAMING DECODER</text>
<rect x="777.2" y="354" width="123.5" height="8" fill="#5c6e86"/>
<text x="839" y="360.9" font-size="8" fill="#f4f6f8" text-anchor="middle" font-weight="bold">MULTIMEDIA-CHANGEOVER</text>
<rect x="907.5" y="354" width="253.8" height="8" fill="#5c6e86"/>
<text x="1034.4" y="360.9" font-size="8" fill="#f4f6f8" text-anchor="middle" font-weight="bold">AUDIO STREAMING ENCODER</text>
<rect x="1212" y="354" width="351.5" height="8" fill="#5c6e86"/>
<text x="1387.8" y="360.9" font-size="8" fill="#f4f6f8" text-anchor="middle" font-weight="bold">MULTIMEDIA AUDIO OUTPUT</text>
<text x="1186.5" y="204.5" font-size="10" fill="#f2f4f6" text-anchor="middle" font-weight="bold">SYSTEM</text>
<text x="1186.5" y="220" font-size="7.6" fill="#e8ecef" text-anchor="middle" font-weight="bold">MODULE</text>
<text x="1186.5" y="261.5" font-size="10" fill="#f2f4f6" text-anchor="middle" font-weight="bold">AUDIO</text>
<text x="1186.5" y="277" font-size="7.6" fill="#e8ecef" text-anchor="middle" font-weight="bold">MODULE</text>
<text x="1186.5" y="318.5" font-size="10" fill="#f2f4f6" text-anchor="middle" font-weight="bold">OUTPUT</text>
<text x="1186.5" y="334" font-size="7.6" fill="#e8ecef" text-anchor="middle" font-weight="bold">MODULE</text>
<text x="1186.5" y="369" font-size="9.5" fill="#f2f4f6" text-anchor="middle" font-weight="bold">MULTI</text>
<text x="1186.5" y="378" font-size="9.5" fill="#f2f4f6" text-anchor="middle" font-weight="bold">MEDIA</text>
<text x="1186.5" y="391" font-size="7.6" fill="#e8ecef" text-anchor="middle" font-weight="bold">MODULE</text>
<rect x="518" y="195" width="121" height="17.5" fill="url(#ledgrid)"/>
<g fill="#e9ecee"><use href="#g68" x="530.6" y="196.3"/><use href="#g73" x="542.5" y="196.3"/><use href="#g71" x="554.4" y="196.3"/><use href="#g45" x="566.2" y="196.3"/><use href="#g45" x="578.1" y="196.3"/><use href="#g73" x="590" y="196.3"/><use href="#g78" x="601.9" y="196.3"/><use href="#g80" x="613.8" y="196.3"/></g>
<rect x="518" y="215" width="121" height="18" fill="url(#ledgrid)"/>
<g fill="#e9ecee"><use href="#g65" x="542.4" y="216.5"/><use href="#g76" x="554.3" y="216.5"/><use href="#g65" x="566.2" y="216.5"/><use href="#g82" x="578" y="216.5"/><use href="#g77" x="589.9" y="216.5"/></g>
<rect x="647.5" y="195" width="97.5" height="17.5" fill="url(#ledgrid)"/>
<g fill="#e9ecee"><use href="#g50" x="649.8" y="196.3"/><use href="#g54" x="661.7" y="196.3"/><use href="#g45" x="673.6" y="196.3"/><use href="#g48" x="685.4" y="196.3"/><use href="#g53" x="697.3" y="196.3"/><use href="#g45" x="709.2" y="196.3"/><use href="#g50" x="721.1" y="196.3"/><use href="#g50" x="733" y="196.3"/></g>
<rect x="647.5" y="215" width="97.5" height="18" fill="url(#ledgrid)"/>
<g fill="#e9ecee"><use href="#g49" x="649.8" y="216.3"/><use href="#g53" x="661.7" y="216.3"/><use href="#g58" x="673.6" y="216.3"/><use href="#g49" x="685.4" y="216.3"/><use href="#g56" x="697.3" y="216.3"/><use href="#g58" x="709.2" y="216.3"/><use href="#g53" x="721.1" y="216.3"/><use href="#g48" x="733" y="216.3"/></g>
<rect x="410" y="253" width="97" height="18" fill="url(#ledgrid)"/>
<g fill="#e9ecee"><use href="#g65" x="425" y="255.3"/><use href="#g85" x="436.9" y="255.3"/><use href="#g68" x="448.8" y="255.3"/><use href="#g83" x="460.6" y="255.3"/><use href="#g69" x="472.5" y="255.3"/><use href="#g76" x="484.4" y="255.3"/></g>
<rect x="535" y="253" width="38" height="18" fill="url(#ledgrid)"/>
<g fill="#e9ecee"><use href="#g65" x="537" y="255.3"/><use href="#g78" x="548.9" y="255.3"/><use href="#g76" x="560.8" y="255.3"/></g>
<rect x="535" y="273" width="38" height="18" fill="url(#ledgrid)"/>
<g fill="#e9ecee"><use href="#g68" x="537" y="275"/><use href="#g73" x="548.9" y="275"/><use href="#g71" x="560.8" y="275"/></g>
<rect x="661" y="253" width="38" height="18" fill="url(#ledgrid)"/>
<g fill="#e9ecee"><use href="#g68" x="663" y="255.3"/><use href="#g71" x="674.9" y="255.3"/><use href="#g50" x="686.8" y="255.3"/></g>
<rect x="661" y="273" width="38" height="18" fill="url(#ledgrid)"/>
<g fill="#e9ecee"><use href="#g77" x="663" y="275"/><use href="#g69" x="674.9" y="275"/><use href="#g68" x="686.8" y="275"/></g>
<rect x="929" y="253" width="229" height="18" fill="url(#ledgrid)"/>
<g fill="#e9ecee"><use href="#g77" x="931" y="255.3"/><use href="#g69" x="942.9" y="255.3"/><use href="#g68" x="954.8" y="255.3"/><use href="#g73" x="966.6" y="255.3"/><use href="#g65" x="978.5" y="255.3"/><use href="#g73" x="1002.3" y="255.3"/><use href="#g78" x="1014.2" y="255.3"/><use href="#g80" x="1026" y="255.3"/><use href="#g40" x="1049.8" y="255.3"/><use href="#g65" x="1061.7" y="255.3"/><use href="#g85" x="1073.6" y="255.3"/><use href="#g84" x="1085.4" y="255.3"/><use href="#g79" x="1097.3" y="255.3"/><use href="#g41" x="1109.2" y="255.3"/></g>
<rect x="1239" y="252.5" width="320" height="18.5" fill="url(#ledgrid)"/>
<g fill="#e9ecee"><use href="#g65" x="1274.3" y="254.5"/><use href="#g85" x="1286.2" y="254.5"/><use href="#g68" x="1298.1" y="254.5"/><use href="#g73" x="1309.9" y="254.5"/><use href="#g79" x="1321.8" y="254.5"/><use href="#g83" x="1345.6" y="254.5"/><use href="#g69" x="1357.5" y="254.5"/><use href="#g76" x="1369.3" y="254.5"/><use href="#g69" x="1381.2" y="254.5"/><use href="#g67" x="1393.1" y="254.5"/><use href="#g84" x="1405" y="254.5"/><use href="#g79" x="1416.9" y="254.5"/><use href="#g82" x="1428.7" y="254.5"/><use href="#g79" x="1452.5" y="254.5"/><use href="#g85" x="1464.4" y="254.5"/><use href="#g84" x="1476.3" y="254.5"/></g>
<rect x="409" y="310" width="227" height="18" fill="url(#ledgrid)"/>
<g fill="#e9ecee"><use href="#g65" x="421" y="312"/><use href="#g85" x="432.9" y="312"/><use href="#g68" x="444.8" y="312"/><use href="#g73" x="456.6" y="312"/><use href="#g79" x="468.5" y="312"/><use href="#g67" x="492.3" y="312"/><use href="#g72" x="504.2" y="312"/><use href="#g65" x="516" y="312"/><use href="#g78" x="527.9" y="312"/><use href="#g71" x="539.8" y="312"/><use href="#g69" x="551.7" y="312"/><use href="#g79" x="563.6" y="312"/><use href="#g86" x="575.4" y="312"/><use href="#g69" x="587.3" y="312"/><use href="#g82" x="599.2" y="312"/></g>
<rect x="667" y="310" width="99" height="18" fill="url(#ledgrid)"/>
<g fill="#e9ecee"><use href="#g65" x="674.7" y="312"/><use href="#g85" x="686.6" y="312"/><use href="#g68" x="698.5" y="312"/><use href="#g73" x="710.3" y="312"/><use href="#g79" x="722.2" y="312"/><use href="#g67" x="734.1" y="312"/><use href="#g72" x="746" y="312"/></g>
<rect x="797" y="310" width="99" height="18" fill="url(#ledgrid)"/>
<g fill="#e9ecee"><use href="#g65" x="805" y="312"/><use href="#g85" x="816.9" y="312"/><use href="#g68" x="828.8" y="312"/><use href="#g73" x="840.6" y="312"/><use href="#g79" x="852.5" y="312"/><use href="#g67" x="864.4" y="312"/><use href="#g72" x="876.3" y="312"/></g>
<rect x="1239" y="309.5" width="320" height="18.5" fill="url(#ledgrid)"/>
<g fill="#e9ecee"><use href="#g68" x="1346" y="311.2"/><use href="#g73" x="1357.9" y="311.2"/><use href="#g83" x="1369.8" y="311.2"/><use href="#g65" x="1381.6" y="311.2"/><use href="#g66" x="1393.5" y="311.2"/><use href="#g76" x="1405.4" y="311.2"/><use href="#g69" x="1417.3" y="311.2"/><use href="#g68" x="1429.2" y="311.2"/></g>
<rect x="409" y="387" width="98" height="18" fill="url(#ledgrid)"/>
<g fill="#e9ecee"><use href="#g77" x="410" y="389"/><use href="#g80" x="421.9" y="389"/><use href="#g51" x="433.8" y="389"/><use href="#g77" x="457.5" y="389"/><use href="#g80" x="469.4" y="389"/><use href="#g69" x="481.3" y="389"/><use href="#g71" x="493.2" y="389"/></g>
<rect x="551" y="368" width="82" height="16" fill="url(#ledgrid)"/>
<rect x="551" y="388" width="82" height="16" fill="url(#ledgrid)"/>
<rect x="662" y="368" width="47" height="16" fill="url(#ledgrid)"/>
<rect x="662" y="388" width="47" height="17" fill="url(#ledgrid)"/>
<path d="M566.3 376.2h4.41" stroke="#e9ecee" stroke-width="1.6" stroke-linecap="round" stroke-dasharray="0 2.2"/>
<path d="M578.2 376.2h4.41" stroke="#e9ecee" stroke-width="1.6" stroke-linecap="round" stroke-dasharray="0 2.2"/>
<path d="M590.1 376.2h4.41" stroke="#e9ecee" stroke-width="1.6" stroke-linecap="round" stroke-dasharray="0 2.2"/>
<path d="M602 376.2h4.41" stroke="#e9ecee" stroke-width="1.6" stroke-linecap="round" stroke-dasharray="0 2.2"/>
<path d="M613.9 376.2h4.41" stroke="#e9ecee" stroke-width="1.6" stroke-linecap="round" stroke-dasharray="0 2.2"/>
<path d="M677 376.2h4.41" stroke="#e9ecee" stroke-width="1.6" stroke-linecap="round" stroke-dasharray="0 2.2"/>
<path d="M688.9 376.2h4.41" stroke="#e9ecee" stroke-width="1.6" stroke-linecap="round" stroke-dasharray="0 2.2"/>
<path d="M566.3 396.2h4.41" stroke="#e9ecee" stroke-width="1.6" stroke-linecap="round" stroke-dasharray="0 2.2"/>
<path d="M578.2 396.2h4.41" stroke="#e9ecee" stroke-width="1.6" stroke-linecap="round" stroke-dasharray="0 2.2"/>
<path d="M590.1 396.2h4.41" stroke="#e9ecee" stroke-width="1.6" stroke-linecap="round" stroke-dasharray="0 2.2"/>
<path d="M602 396.2h4.41" stroke="#e9ecee" stroke-width="1.6" stroke-linecap="round" stroke-dasharray="0 2.2"/>
<path d="M613.9 396.2h4.41" stroke="#e9ecee" stroke-width="1.6" stroke-linecap="round" stroke-dasharray="0 2.2"/>
<path d="M677 396.2h4.41" stroke="#e9ecee" stroke-width="1.6" stroke-linecap="round" stroke-dasharray="0 2.2"/>
<path d="M688.9 396.2h4.41" stroke="#e9ecee" stroke-width="1.6" stroke-linecap="round" stroke-dasharray="0 2.2"/>
<rect x="940" y="367" width="86" height="18" fill="url(#ledgrid)"/>
<g fill="#e9ecee"><use href="#g67" x="942.3" y="369"/><use href="#g79" x="954.2" y="369"/><use href="#g78" x="966.1" y="369"/><use href="#g78" x="977.9" y="369"/><use href="#g45" x="989.8" y="369"/><use href="#g79" x="1001.7" y="369"/><use href="#g75" x="1013.6" y="369"/></g>
<rect x="940" y="387" width="86" height="18" fill="url(#ledgrid)"/>
<g fill="#e9ecee"><use href="#g73" x="942.3" y="389"/><use href="#g83" x="954.2" y="389"/><use href="#g69" x="966.1" y="389"/><use href="#g82" x="977.9" y="389"/><use href="#g86" x="989.8" y="389"/><use href="#g69" x="1001.7" y="389"/><use href="#g82" x="1013.6" y="389"/></g>
<rect x="1052" y="367" width="50" height="18" fill="url(#ledgrid)"/>
<g fill="#e9ecee"><use href="#g49" x="1066.7" y="369"/><use href="#g50" x="1078.6" y="369"/><use href="#g56" x="1090.5" y="369"/></g>
<rect x="1052" y="387" width="50" height="18" fill="url(#ledgrid)"/>
<g fill="#e9ecee"><use href="#g77" x="1065" y="389"/><use href="#g80" x="1076.9" y="389"/><use href="#g51" x="1088.8" y="389"/></g>
<rect x="1239" y="366.5" width="320" height="18.5" fill="url(#ledgrid)"/>
<g fill="#e9ecee"><use href="#g80" x="1239.4" y="368.3"/><use href="#g76" x="1251.3" y="368.3"/><use href="#g65" x="1263.2" y="368.3"/><use href="#g89" x="1275" y="368.3"/><use href="#g69" x="1286.9" y="368.3"/><use href="#g82" x="1298.8" y="368.3"/><use href="#g58" x="1310.7" y="368.3"/></g>
<g fill="#e9ecee"><use href="#g95" x="1336" y="368.3"/><use href="#g95" x="1347.9" y="368.3"/><use href="#g95" x="1359.8" y="368.3"/><use href="#g95" x="1371.6" y="368.3"/><use href="#g95" x="1383.5" y="368.3"/><use href="#g95" x="1395.4" y="368.3"/><use href="#g95" x="1407.3" y="368.3"/><use href="#g95" x="1419.2" y="368.3"/><use href="#g95" x="1431" y="368.3"/></g>
<text x="908" y="265" font-size="6.5" fill="#d5dbe0" text-anchor="start" font-weight="bold">INFO</text>
<text x="910" y="279" font-size="6.8" fill="#d5dbe0" text-anchor="start" font-weight="bold">LEFT</text>
<text x="910" y="290" font-size="6.8" fill="#d5dbe0" text-anchor="start" font-weight="bold">RIGHT</text>
<path d="M934 276.5h221.26" stroke="#4a565e" stroke-width="1.3" stroke-linecap="round" stroke-dasharray="0 2.95"/>
<path d="M934 276.5h150.46" stroke="#f5c400" stroke-width="2.1" stroke-linecap="round" stroke-dasharray="0 2.95"/>
<circle cx="1087.4" cy="276.5" r="1.1" fill="#ee2b1f"/>
<path d="M946.5 276.5h0.01M969.5 276.5h0.01M994.6 276.5h0.01M1015 276.5h0.01M1035.7 276.5h0.01M1057 276.5h0.01M1077.7 276.5h0.01M1098 276.5h0.01M1118 276.5h0.01M1136 276.5h0.01M1155 276.5h0.01" stroke="#ffffff" stroke-width="2.1" stroke-linecap="round"/>
<path d="M934 287.5h221.26" stroke="#4a565e" stroke-width="1.3" stroke-linecap="round" stroke-dasharray="0 2.95"/>
<path d="M934 287.5h144.56" stroke="#f5c400" stroke-width="2.1" stroke-linecap="round" stroke-dasharray="0 2.95"/>
<circle cx="1081.5" cy="287.5" r="1.1" fill="#ee2b1f"/>
<path d="M946.5 287.5h0.01M969.5 287.5h0.01M994.6 287.5h0.01M1015 287.5h0.01M1035.7 287.5h0.01M1057 287.5h0.01M1077.7 287.5h0.01M1098 287.5h0.01M1118 287.5h0.01M1136 287.5h0.01M1155 287.5h0.01" stroke="#ffffff" stroke-width="2.1" stroke-linecap="round"/>
<text x="946.5" y="284.4" font-size="6.8" fill="#eef1f3" text-anchor="middle" font-weight="bold">-30</text>
<text x="969.5" y="284.4" font-size="6.8" fill="#eef1f3" text-anchor="middle" font-weight="bold">-18</text>
<text x="994.6" y="284.4" font-size="6.8" fill="#eef1f3" text-anchor="middle" font-weight="bold">-6</text>
<text x="1015" y="284.4" font-size="6.8" fill="#eef1f3" text-anchor="middle" font-weight="bold">-4</text>
<text x="1035.7" y="284.4" font-size="6.8" fill="#eef1f3" text-anchor="middle" font-weight="bold">-2</text>
<text x="1057" y="284.4" font-size="6.8" fill="#eef1f3" text-anchor="middle" font-weight="bold">0</text>
<text x="1077.7" y="284.4" font-size="6.8" fill="#eef1f3" text-anchor="middle" font-weight="bold">+2</text>
<text x="1098" y="284.4" font-size="6.8" fill="#eef1f3" text-anchor="middle" font-weight="bold">+4</text>
<text x="1118" y="284.4" font-size="6.8" fill="#eef1f3" text-anchor="middle" font-weight="bold">+6</text>
<text x="1136" y="284.4" font-size="6.8" fill="#eef1f3" text-anchor="middle" font-weight="bold">+12</text>
<text x="1155" y="284.4" font-size="6.8" fill="#eef1f3" text-anchor="middle" font-weight="bold">+18</text>
<path stroke="#6f7b83" stroke-width="0.8" d="M935 279.5v4M958 279.5v4M982 279.5v4M1004.8 279.5v4M1025.3 279.5v4M1046.3 279.5v4M1067.3 279.5v4M1087.8 279.5v4M1108 279.5v4M1127 279.5v4M1145.5 279.5v4"/>
<text x="386" y="322" font-size="6.5" fill="#d5dbe0" text-anchor="start" font-weight="bold">INFO</text>
<text x="388" y="336" font-size="6.8" fill="#d5dbe0" text-anchor="start" font-weight="bold">LEFT</text>
<text x="388" y="347.2" font-size="6.8" fill="#d5dbe0" text-anchor="start" font-weight="bold">RIGHT</text>
<path d="M413 333.5h221.26" stroke="#4a565e" stroke-width="1.3" stroke-linecap="round" stroke-dasharray="0 2.95"/>
<path d="M413 333.5h150.46" stroke="#f5c400" stroke-width="2.1" stroke-linecap="round" stroke-dasharray="0 2.95"/>
<circle cx="566.4" cy="333.5" r="1.1" fill="#ee2b1f"/>
<path d="M425.5 333.5h0.01M448.5 333.5h0.01M473.6 333.5h0.01M494 333.5h0.01M514.7 333.5h0.01M536 333.5h0.01M556.7 333.5h0.01M577 333.5h0.01M597 333.5h0.01M615 333.5h0.01M634 333.5h0.01" stroke="#ffffff" stroke-width="2.1" stroke-linecap="round"/>
<path d="M413 344.7h221.26" stroke="#4a565e" stroke-width="1.3" stroke-linecap="round" stroke-dasharray="0 2.95"/>
<path d="M413 344.7h144.56" stroke="#f5c400" stroke-width="2.1" stroke-linecap="round" stroke-dasharray="0 2.95"/>
<circle cx="560.5" cy="344.7" r="1.1" fill="#ee2b1f"/>
<path d="M425.5 344.7h0.01M448.5 344.7h0.01M473.6 344.7h0.01M494 344.7h0.01M514.7 344.7h0.01M536 344.7h0.01M556.7 344.7h0.01M577 344.7h0.01M597 344.7h0.01M615 344.7h0.01M634 344.7h0.01" stroke="#ffffff" stroke-width="2.1" stroke-linecap="round"/>
<text x="425.5" y="341.5" font-size="6.8" fill="#eef1f3" text-anchor="middle" font-weight="bold">-30</text>
<text x="448.5" y="341.5" font-size="6.8" fill="#eef1f3" text-anchor="middle" font-weight="bold">-18</text>
<text x="473.6" y="341.5" font-size="6.8" fill="#eef1f3" text-anchor="middle" font-weight="bold">-6</text>
<text x="494" y="341.5" font-size="6.8" fill="#eef1f3" text-anchor="middle" font-weight="bold">-4</text>
<text x="514.7" y="341.5" font-size="6.8" fill="#eef1f3" text-anchor="middle" font-weight="bold">-2</text>
<text x="536" y="341.5" font-size="6.8" fill="#eef1f3" text-anchor="middle" font-weight="bold">0</text>
<text x="556.7" y="341.5" font-size="6.8" fill="#eef1f3" text-anchor="middle" font-weight="bold">+2</text>
<text x="577" y="341.5" font-size="6.8" fill="#eef1f3" text-anchor="middle" font-weight="bold">+4</text>
<text x="597" y="341.5" font-size="6.8" fill="#eef1f3" text-anchor="middle" font-weight="bold">+6</text>
<text x="615" y="341.5" font-size="6.8" fill="#eef1f3" text-anchor="middle" font-weight="bold">+12</text>
<text x="634" y="341.5" font-size="6.8" fill="#eef1f3" text-anchor="middle" font-weight="bold">+18</text>
<path stroke="#6f7b83" stroke-width="0.8" d="M414 336.6v4M437 336.6v4M461.1 336.6v4M483.8 336.6v4M504.4 336.6v4M525.4 336.6v4M546.4 336.6v4M566.9 336.6v4M587 336.6v4M606 336.6v4M624.5 336.6v4"/>
<text x="1217" y="263" font-size="6.2" fill="#d5dbe0" text-anchor="start" font-weight="bold">TYPE</text>
<text x="1217" y="278.2" font-size="6.8" fill="#d5dbe0" text-anchor="start" font-weight="bold">LEFT</text>
<text x="1217" y="289.3" font-size="6.8" fill="#d5dbe0" text-anchor="start" font-weight="bold">RIGHT</text>
<path d="M1240.5 275.7h295.01" stroke="#4a565e" stroke-width="1.3" stroke-linecap="round" stroke-dasharray="0 2.95"/>
<path d="M1240.5 275.7h188.81" stroke="#f5c400" stroke-width="2.1" stroke-linecap="round" stroke-dasharray="0 2.95"/>
<circle cx="1432.2" cy="275.7" r="1.1" fill="#ee2b1f"/>
<path d="M1252 275.7h0.01M1270 275.7h0.01M1300 275.7h0.01M1329 275.7h0.01M1358 275.7h0.01M1389 275.7h0.01M1418 275.7h0.01M1447 275.7h0.01M1477 275.7h0.01M1508 275.7h0.01M1538 275.7h0.01" stroke="#ffffff" stroke-width="2.1" stroke-linecap="round"/>
<path d="M1240.5 286.8h295.01" stroke="#4a565e" stroke-width="1.3" stroke-linecap="round" stroke-dasharray="0 2.95"/>
<path d="M1240.5 286.8h177.01" stroke="#f5c400" stroke-width="2.1" stroke-linecap="round" stroke-dasharray="0 2.95"/>
<circle cx="1420.5" cy="286.8" r="1.1" fill="#ee2b1f"/>
<path d="M1252 286.8h0.01M1270 286.8h0.01M1300 286.8h0.01M1329 286.8h0.01M1358 286.8h0.01M1389 286.8h0.01M1418 286.8h0.01M1447 286.8h0.01M1477 286.8h0.01M1508 286.8h0.01M1538 286.8h0.01" stroke="#ffffff" stroke-width="2.1" stroke-linecap="round"/>
<text x="1252" y="283.6" font-size="6.8" fill="#eef1f3" text-anchor="middle" font-weight="bold">-30</text>
<text x="1270" y="283.6" font-size="6.8" fill="#eef1f3" text-anchor="middle" font-weight="bold">-18</text>
<text x="1300" y="283.6" font-size="6.8" fill="#eef1f3" text-anchor="middle" font-weight="bold">-6</text>
<text x="1329" y="283.6" font-size="6.8" fill="#eef1f3" text-anchor="middle" font-weight="bold">-4</text>
<text x="1358" y="283.6" font-size="6.8" fill="#eef1f3" text-anchor="middle" font-weight="bold">-2</text>
<text x="1389" y="283.6" font-size="6.8" fill="#eef1f3" text-anchor="middle" font-weight="bold">0</text>
<text x="1418" y="283.6" font-size="6.8" fill="#eef1f3" text-anchor="middle" font-weight="bold">+2</text>
<text x="1447" y="283.6" font-size="6.8" fill="#eef1f3" text-anchor="middle" font-weight="bold">+4</text>
<text x="1477" y="283.6" font-size="6.8" fill="#eef1f3" text-anchor="middle" font-weight="bold">+6</text>
<text x="1508" y="283.6" font-size="6.8" fill="#eef1f3" text-anchor="middle" font-weight="bold">+12</text>
<text x="1538" y="283.6" font-size="6.8" fill="#eef1f3" text-anchor="middle" font-weight="bold">+18</text>
<path stroke="#6f7b83" stroke-width="0.8" d="M1241 278.8v4M1261 278.8v4M1285 278.8v4M1314.5 278.8v4M1343.5 278.8v4M1373.5 278.8v4M1403.5 278.8v4M1432.5 278.8v4M1462 278.8v4M1492.5 278.8v4M1523 278.8v4"/>
<text x="1217" y="320" font-size="6.2" fill="#d5dbe0" text-anchor="start" font-weight="bold">INFO</text>
<text x="1217" y="335.5" font-size="6.8" fill="#d5dbe0" text-anchor="start" font-weight="bold">LEFT</text>
<text x="1217" y="346.2" font-size="6.8" fill="#d5dbe0" text-anchor="start" font-weight="bold">RIGHT</text>
<path d="M1240.5 333h295.01" stroke="#4a565e" stroke-width="1.3" stroke-linecap="round" stroke-dasharray="0 2.95"/>
<path d="M1240.5 333h188.81" stroke="#f5c400" stroke-width="2.1" stroke-linecap="round" stroke-dasharray="0 2.95"/>
<circle cx="1432.2" cy="333" r="1.1" fill="#ee2b1f"/>
<path d="M1252 333h0.01M1270 333h0.01M1300 333h0.01M1329 333h0.01M1358 333h0.01M1389 333h0.01M1418 333h0.01M1447 333h0.01M1477 333h0.01M1508 333h0.01M1538 333h0.01" stroke="#ffffff" stroke-width="2.1" stroke-linecap="round"/>
<path d="M1240.5 343.7h295.01" stroke="#4a565e" stroke-width="1.3" stroke-linecap="round" stroke-dasharray="0 2.95"/>
<path d="M1240.5 343.7h177.01" stroke="#f5c400" stroke-width="2.1" stroke-linecap="round" stroke-dasharray="0 2.95"/>
<circle cx="1420.5" cy="343.7" r="1.1" fill="#ee2b1f"/>
<path d="M1252 343.7h0.01M1270 343.7h0.01M1300 343.7h0.01M1329 343.7h0.01M1358 343.7h0.01M1389 343.7h0.01M1418 343.7h0.01M1447 343.7h0.01M1477 343.7h0.01M1508 343.7h0.01M1538 343.7h0.01" stroke="#ffffff" stroke-width="2.1" stroke-linecap="round"/>
<text x="1252" y="340.8" font-size="6.8" fill="#eef1f3" text-anchor="middle" font-weight="bold">-30</text>
<text x="1270" y="340.8" font-size="6.8" fill="#eef1f3" text-anchor="middle" font-weight="bold">-18</text>
<text x="1300" y="340.8" font-size="6.8" fill="#eef1f3" text-anchor="middle" font-weight="bold">-6</text>
<text x="1329" y="340.8" font-size="6.8" fill="#eef1f3" text-anchor="middle" font-weight="bold">-4</text>
<text x="1358" y="340.8" font-size="6.8" fill="#eef1f3" text-anchor="middle" font-weight="bold">-2</text>
<text x="1389" y="340.8" font-size="6.8" fill="#eef1f3" text-anchor="middle" font-weight="bold">0</text>
<text x="1418" y="340.8" font-size="6.8" fill="#eef1f3" text-anchor="middle" font-weight="bold">+2</text>
<text x="1447" y="340.8" font-size="6.8" fill="#eef1f3" text-anchor="middle" font-weight="bold">+4</text>
<text x="1477" y="340.8" font-size="6.8" fill="#eef1f3" text-anchor="middle" font-weight="bold">+6</text>
<text x="1508" y="340.8" font-size="6.8" fill="#eef1f3" text-anchor="middle" font-weight="bold">+12</text>
<text x="1538" y="340.8" font-size="6.8" fill="#eef1f3" text-anchor="middle" font-weight="bold">+18</text>
<path stroke="#6f7b83" stroke-width="0.8" d="M1241 335.9v4M1261 335.9v4M1285 335.9v4M1314.5 335.9v4M1343.5 335.9v4M1373.5 335.9v4M1403.5 335.9v4M1432.5 335.9v4M1462 335.9v4M1492.5 335.9v4M1523 335.9v4"/>
<text x="1217" y="377" font-size="6.2" fill="#d5dbe0" text-anchor="start" font-weight="bold">INFO</text>
<text x="1217" y="392.5" font-size="6.8" fill="#d5dbe0" text-anchor="start" font-weight="bold">LEFT</text>
<text x="1217" y="403.2" font-size="6.8" fill="#d5dbe0" text-anchor="start" font-weight="bold">RIGHT</text>
<path d="M1240.5 390h295.01" stroke="#4a565e" stroke-width="1.3" stroke-linecap="round" stroke-dasharray="0 2.95"/>
<path d="M1240.5 390h182.91" stroke="#f5c400" stroke-width="2.1" stroke-linecap="round" stroke-dasharray="0 2.95"/>
<circle cx="1426.3" cy="390" r="1.1" fill="#ee2b1f"/>
<path d="M1252 390h0.01M1270 390h0.01M1300 390h0.01M1329 390h0.01M1358 390h0.01M1389 390h0.01M1418 390h0.01M1447 390h0.01M1477 390h0.01M1508 390h0.01M1538 390h0.01" stroke="#ffffff" stroke-width="2.1" stroke-linecap="round"/>
<path d="M1240.5 400.7h295.01" stroke="#4a565e" stroke-width="1.3" stroke-linecap="round" stroke-dasharray="0 2.95"/>
<path d="M1240.5 400.7h177.01" stroke="#f5c400" stroke-width="2.1" stroke-linecap="round" stroke-dasharray="0 2.95"/>
<circle cx="1420.5" cy="400.7" r="1.1" fill="#ee2b1f"/>
<path d="M1252 400.7h0.01M1270 400.7h0.01M1300 400.7h0.01M1329 400.7h0.01M1358 400.7h0.01M1389 400.7h0.01M1418 400.7h0.01M1447 400.7h0.01M1477 400.7h0.01M1508 400.7h0.01M1538 400.7h0.01" stroke="#ffffff" stroke-width="2.1" stroke-linecap="round"/>
<text x="1252" y="397.8" font-size="6.8" fill="#eef1f3" text-anchor="middle" font-weight="bold">-30</text>
<text x="1270" y="397.8" font-size="6.8" fill="#eef1f3" text-anchor="middle" font-weight="bold">-18</text>
<text x="1300" y="397.8" font-size="6.8" fill="#eef1f3" text-anchor="middle" font-weight="bold">-6</text>
<text x="1329" y="397.8" font-size="6.8" fill="#eef1f3" text-anchor="middle" font-weight="bold">-4</text>
<text x="1358" y="397.8" font-size="6.8" fill="#eef1f3" text-anchor="middle" font-weight="bold">-2</text>
<text x="1389" y="397.8" font-size="6.8" fill="#eef1f3" text-anchor="middle" font-weight="bold">0</text>
<text x="1418" y="397.8" font-size="6.8" fill="#eef1f3" text-anchor="middle" font-weight="bold">+2</text>
<text x="1447" y="397.8" font-size="6.8" fill="#eef1f3" text-anchor="middle" font-weight="bold">+4</text>
<text x="1477" y="397.8" font-size="6.8" fill="#eef1f3" text-anchor="middle" font-weight="bold">+6</text>
<text x="1508" y="397.8" font-size="6.8" fill="#eef1f3" text-anchor="middle" font-weight="bold">+12</text>
<text x="1538" y="397.8" font-size="6.8" fill="#eef1f3" text-anchor="middle" font-weight="bold">+18</text>
<path stroke="#6f7b83" stroke-width="0.8" d="M1241 392.9v4M1261 392.9v4M1285 392.9v4M1314.5 392.9v4M1343.5 392.9v4M1373.5 392.9v4M1403.5 392.9v4M1432.5 392.9v4M1462 392.9v4M1492.5 392.9v4M1523 392.9v4"/>
<path d="M934 311.3h221.26" stroke="#4a565e" stroke-width="1.3" stroke-linecap="round" stroke-dasharray="0 2.95"/>
<path d="M934 311.3h156.36" stroke="#f5c400" stroke-width="2.1" stroke-linecap="round" stroke-dasharray="0 2.95"/>
<circle cx="1093.3" cy="311.3" r="1.1" fill="#ee2b1f"/>
<path d="M946.5 311.3h0.01M967.6 311.3h0.01M988.3 311.3h0.01M1009 311.3h0.01M1030 311.3h0.01M1050.5 311.3h0.01M1070.8 311.3h0.01M1092.4 311.3h0.01M1113.5 311.3h0.01M1134.2 311.3h0.01M1155 311.3h0.01" stroke="#ffffff" stroke-width="2.1" stroke-linecap="round"/>
<path d="M934 322.4h221.26" stroke="#4a565e" stroke-width="1.3" stroke-linecap="round" stroke-dasharray="0 2.95"/>
<path d="M934 322.4h156.36" stroke="#f5c400" stroke-width="2.1" stroke-linecap="round" stroke-dasharray="0 2.95"/>
<circle cx="1093.3" cy="322.4" r="1.1" fill="#ee2b1f"/>
<path d="M946.5 322.4h0.01M967.6 322.4h0.01M988.3 322.4h0.01M1009 322.4h0.01M1030 322.4h0.01M1050.5 322.4h0.01M1070.8 322.4h0.01M1092.4 322.4h0.01M1113.5 322.4h0.01M1134.2 322.4h0.01M1155 322.4h0.01" stroke="#ffffff" stroke-width="2.1" stroke-linecap="round"/>
<text x="946.5" y="319.2" font-size="6.8" fill="#eef1f3" text-anchor="middle" font-weight="bold">-60</text>
<text x="967.6" y="319.2" font-size="6.8" fill="#eef1f3" text-anchor="middle" font-weight="bold">-50</text>
<text x="988.3" y="319.2" font-size="6.8" fill="#eef1f3" text-anchor="middle" font-weight="bold">-40</text>
<text x="1009" y="319.2" font-size="6.8" fill="#eef1f3" text-anchor="middle" font-weight="bold">-35</text>
<text x="1030" y="319.2" font-size="6.8" fill="#eef1f3" text-anchor="middle" font-weight="bold">-30</text>
<text x="1050.5" y="319.2" font-size="6.8" fill="#eef1f3" text-anchor="middle" font-weight="bold">-25</text>
<text x="1070.8" y="319.2" font-size="6.8" fill="#eef1f3" text-anchor="middle" font-weight="bold">-20</text>
<text x="1092.4" y="319.2" font-size="6.8" fill="#eef1f3" text-anchor="middle" font-weight="bold">-15</text>
<text x="1113.5" y="319.2" font-size="6.8" fill="#eef1f3" text-anchor="middle" font-weight="bold">-10</text>
<text x="1134.2" y="319.2" font-size="6.8" fill="#eef1f3" text-anchor="middle" font-weight="bold">-5</text>
<text x="1155" y="319.2" font-size="6.8" fill="#eef1f3" text-anchor="middle" font-weight="bold">0</text>
<path stroke="#6f7b83" stroke-width="0.8" d="M935 314.4v4M957 314.4v4M978 314.4v4M998.6 314.4v4M1019.5 314.4v4M1040.2 314.4v4M1060.7 314.4v4M1081.6 314.4v4M1103 314.4v4M1123.8 314.4v4M1144.6 314.4v4"/>
<text x="907" y="319.7" font-size="7.5" fill="#d5dbe0" text-anchor="start" font-weight="bold">DG1</text>
<text x="929" y="313.5" font-size="5.5" fill="#d5dbe0" text-anchor="start" font-weight="bold">1</text>
<text x="929" y="324.6" font-size="5.5" fill="#d5dbe0" text-anchor="start" font-weight="bold">2</text>
<path d="M934 333.2h221.26" stroke="#4a565e" stroke-width="1.3" stroke-linecap="round" stroke-dasharray="0 2.95"/>
<path d="M934 333.2h156.36" stroke="#f5c400" stroke-width="2.1" stroke-linecap="round" stroke-dasharray="0 2.95"/>
<circle cx="1093.3" cy="333.2" r="1.1" fill="#ee2b1f"/>
<path d="M946.5 333.2h0.01M967.6 333.2h0.01M988.3 333.2h0.01M1009 333.2h0.01M1030 333.2h0.01M1050.5 333.2h0.01M1070.8 333.2h0.01M1092.4 333.2h0.01M1113.5 333.2h0.01M1134.2 333.2h0.01M1155 333.2h0.01" stroke="#ffffff" stroke-width="2.1" stroke-linecap="round"/>
<path d="M934 344.3h221.26" stroke="#4a565e" stroke-width="1.3" stroke-linecap="round" stroke-dasharray="0 2.95"/>
<path d="M934 344.3h156.36" stroke="#f5c400" stroke-width="2.1" stroke-linecap="round" stroke-dasharray="0 2.95"/>
<circle cx="1093.3" cy="344.3" r="1.1" fill="#ee2b1f"/>
<path d="M946.5 344.3h0.01M967.6 344.3h0.01M988.3 344.3h0.01M1009 344.3h0.01M1030 344.3h0.01M1050.5 344.3h0.01M1070.8 344.3h0.01M1092.4 344.3h0.01M1113.5 344.3h0.01M1134.2 344.3h0.01M1155 344.3h0.01" stroke="#ffffff" stroke-width="2.1" stroke-linecap="round"/>
<text x="946.5" y="341.1" font-size="6.8" fill="#eef1f3" text-anchor="middle" font-weight="bold">-60</text>
<text x="967.6" y="341.1" font-size="6.8" fill="#eef1f3" text-anchor="middle" font-weight="bold">-50</text>
<text x="988.3" y="341.1" font-size="6.8" fill="#eef1f3" text-anchor="middle" font-weight="bold">-40</text>
<text x="1009" y="341.1" font-size="6.8" fill="#eef1f3" text-anchor="middle" font-weight="bold">-35</text>
<text x="1030" y="341.1" font-size="6.8" fill="#eef1f3" text-anchor="middle" font-weight="bold">-30</text>
<text x="1050.5" y="341.1" font-size="6.8" fill="#eef1f3" text-anchor="middle" font-weight="bold">-25</text>
<text x="1070.8" y="341.1" font-size="6.8" fill="#eef1f3" text-anchor="middle" font-weight="bold">-20</text>
<text x="1092.4" y="341.1" font-size="6.8" fill="#eef1f3" text-anchor="middle" font-weight="bold">-15</text>
<text x="1113.5" y="341.1" font-size="6.8" fill="#eef1f3" text-anchor="middle" font-weight="bold">-10</text>
<text x="1134.2" y="341.1" font-size="6.8" fill="#eef1f3" text-anchor="middle" font-weight="bold">-5</text>
<text x="1155" y="341.1" font-size="6.8" fill="#eef1f3" text-anchor="middle" font-weight="bold">0</text>
<path stroke="#6f7b83" stroke-width="0.8" d="M935 336.2v4M957 336.2v4M978 336.2v4M998.6 336.2v4M1019.5 336.2v4M1040.2 336.2v4M1060.7 336.2v4M1081.6 336.2v4M1103 336.2v4M1123.8 336.2v4M1144.6 336.2v4"/>
<text x="907" y="341.6" font-size="7.5" fill="#d5dbe0" text-anchor="start" font-weight="bold">DG2</text>
<text x="929" y="335.4" font-size="5.5" fill="#d5dbe0" text-anchor="start" font-weight="bold">1</text>
<text x="929" y="346.5" font-size="5.5" fill="#d5dbe0" text-anchor="start" font-weight="bold">2</text>
<text x="1058" y="330" font-size="5" fill="#d5dbe0" text-anchor="middle" font-weight="bold">dBFs</text>
<rect x="386.5" y="194.6" width="59.9" height="18" rx="0" fill="#151d22"/>
<rect x="386.5" y="215.5" width="59.9" height="17.5" rx="0" fill="#151d22"/>
<rect x="448" y="194.6" width="62" height="18" rx="0" fill="#151d22"/>
<rect x="448" y="215.5" width="62" height="17.5" rx="0" fill="#151d22"/>
<rect x="387.5" y="198" width="17.5" height="12" rx="1" fill="#3c4d55"/>
<path d="M388,199 L396.2,205.5 L404.5,199 M388,209.5 L394,204 M404.5,209.5 L398.5,204" stroke="#1f2a30" stroke-width="1.1" fill="none"/>
<text x="407" y="207.5" font-size="6.6" fill="#36434a" text-anchor="start" font-weight="bold">EMAIL</text>
<path d="M451,199.5 h7 l3,3 v9 h-10z" fill="none" stroke="#f5a51c" stroke-width="1.8"/>
<rect x="453" y="202" width="5" height="7" rx="0" fill="#6b5a2a"/>
<circle cx="460.5" cy="209.5" r="3" fill="#151d22" stroke="#f5a51c" stroke-width="1.5"/>
<text x="464.5" y="207.8" font-size="6.6" fill="#f5a51c" text-anchor="start" font-weight="bold">SCHEDULER</text>
<rect x="388" y="218.5" width="13" height="3.5" rx="1.5" fill="#f5a51c"/>
<rect x="388" y="223" width="10" height="3.5" rx="1.5" fill="#f5a51c"/>
<rect x="388" y="227.5" width="10" height="3.5" rx="1.5" fill="#f5a51c"/>
<circle cx="401.5" cy="227" r="3.3" fill="#151d22" stroke="#f5a51c" stroke-width="2.2"/>
<text x="408" y="228.5" font-size="6.6" fill="#f5a51c" text-anchor="start" font-weight="bold">LOGS</text>
<path d="M455,220 l4,-1 l3,3 l-3,4 l3,3 l-1,3 M459,226 l-4,3 l-4,0 M450,222 h4 M449,225 h3 M450,228 h2" stroke="#3b4a52" stroke-width="1.6" fill="none"/>
<circle cx="464" cy="219.5" r="1.6" fill="#3b4a52"/>
<text x="469.5" y="228.5" font-size="6.6" fill="#36434a" text-anchor="start" font-weight="bold">EXTENDED</text>
<text x="756" y="203.5" font-size="6.2" fill="#2f3c43" text-anchor="middle" font-weight="bold">GPS</text>
<text x="756.5" y="213" font-size="6.8" fill="#f5a51c" text-anchor="middle" font-weight="bold">NTP</text>
<circle cx="757.5" cy="225.5" r="4.2" fill="none" stroke="#f5a51c" stroke-width="1.6"/>
<path d="M757.5,223 v2.7 h2 M752.5,221.5 l2,-2 M762.5,221.5 l-2,-2 M754.5,230 l-1.5,1.5 M760.5,230 l1.5,1.5" stroke="#f5a51c" stroke-width="1.3" fill="none"/>
<rect x="778" y="194.6" width="61" height="18" rx="0" fill="#151d22"/>
<rect x="778" y="215.5" width="61" height="17.5" rx="0" fill="#151d22"/>
<rect x="840.5" y="194.6" width="60.5" height="18" rx="0" fill="#151d22"/>
<rect x="840.5" y="215.5" width="60.5" height="17.5" rx="0" fill="#151d22"/>
<rect x="781" y="197.5" width="14" height="13.5" rx="2" fill="#34444c"/>
<path d="M784,201 a7,7 0 0 1 7,7 M784,204 a4,4 0 0 1 4,4" stroke="#1d272c" stroke-width="1.3" fill="none"/>
<circle cx="785" cy="207.5" r="1.2" fill="#1d272c"/>
<text x="798" y="207.5" font-size="6.6" fill="#36434a" text-anchor="start" font-weight="bold">RSS</text>
<rect x="841" y="197" width="15.5" height="15" rx="2.5" fill="#f5a51c"/>
<rect x="847.5" y="203" width="2.5" height="7" rx="0" fill="#1b1b1b"/>
<circle cx="848.8" cy="200.5" r="1.3" fill="#1b1b1b"/>
<text x="859" y="207.8" font-size="6.6" fill="#f5a51c" text-anchor="start" font-weight="bold">REST</text>
<rect x="782" y="219" width="13" height="11" rx="0" fill="#34444c"/>
<text x="797.5" y="228.5" font-size="6.6" fill="#36434a" text-anchor="start" font-weight="bold">SAMBA</text>
<path d="M845,221 l7,7 M843,226 l4,-4 M848,231 l4,-4" stroke="#34444c" stroke-width="2.6" fill="none"/>
<text x="859" y="228.5" font-size="6.6" fill="#36434a" text-anchor="start" font-weight="bold">GPS</text>
<text x="908" y="206.3" font-size="6.2" fill="#d5dbe0" text-anchor="start" font-weight="bold">TCPIP</text>
<text x="908" y="227.3" font-size="6.2" fill="#d5dbe0" text-anchor="start" font-weight="bold">UDP</text>
<text x="983" y="206.3" font-size="6.2" fill="#d5dbe0" text-anchor="start" font-weight="bold">RS232</text>
<text x="983" y="227.3" font-size="6.2" fill="#d5dbe0" text-anchor="start" font-weight="bold">SNMP</text>
<text x="1038.5" y="206.3" font-size="6.2" fill="#d5dbe0" text-anchor="start" font-weight="bold">GPO</text>
<text x="1038.5" y="227.3" font-size="6.2" fill="#d5dbe0" text-anchor="start" font-weight="bold">GPI</text>
<circle cx="936.5" cy="204" r="4.4" fill="#2b3940"/>
<text x="936.5" y="206" font-size="5" fill="#3e4d55" text-anchor="middle" font-weight="normal">1</text>
<circle cx="948.2" cy="204" r="4.4" fill="#2b3940"/>
<text x="948.2" y="206" font-size="5" fill="#3e4d55" text-anchor="middle" font-weight="normal">2</text>
<circle cx="959.9" cy="204" r="4.4" fill="#2b3940"/>
<text x="959.9" y="206" font-size="5" fill="#3e4d55" text-anchor="middle" font-weight="normal">3</text>
<circle cx="971.6" cy="204" r="4.4" fill="#2b3940"/>
<text x="971.6" y="206" font-size="5" fill="#3e4d55" text-anchor="middle" font-weight="normal">4</text>
<circle cx="936.5" cy="225" r="4.4" fill="#2b3940"/>
<text x="936.5" y="227" font-size="5" fill="#3e4d55" text-anchor="middle" font-weight="normal">1</text>
<circle cx="948.2" cy="225" r="4.4" fill="#2b3940"/>
<text x="948.2" y="227" font-size="5" fill="#3e4d55" text-anchor="middle" font-weight="normal">2</text>
<circle cx="959.9" cy="225" r="4.4" fill="#2b3940"/>
<text x="959.9" y="227" font-size="5" fill="#3e4d55" text-anchor="middle" font-weight="normal">3</text>
<circle cx="971.6" cy="225" r="4.4" fill="#2b3940"/>
<text x="971.6" y="227" font-size="5" fill="#3e4d55" text-anchor="middle" font-weight="normal">4</text>
<circle cx="1012" cy="204" r="4.4" fill="#2b3940"/>
<text x="1012" y="206" font-size="5" fill="#3e4d55" text-anchor="middle" font-weight="normal">1</text>
<circle cx="1023.7" cy="204" r="4.4" fill="#2b3940"/>
<text x="1023.7" y="206" font-size="5" fill="#3e4d55" text-anchor="middle" font-weight="normal">2</text>
<circle cx="1012" cy="225" r="4.4" fill="#2b3940"/>
<text x="1012" y="227" font-size="5" fill="#3e4d55" text-anchor="middle" font-weight="normal">1</text>
<circle cx="1066.5" cy="204" r="4.4" fill="#2b3940"/>
<text x="1066.5" y="206" font-size="5" fill="#3e4d55" text-anchor="middle" font-weight="normal">1</text>
<circle cx="1078.2" cy="204" r="4.4" fill="#2b3940"/>
<text x="1078.2" y="206" font-size="5" fill="#3e4d55" text-anchor="middle" font-weight="normal">2</text>
<circle cx="1089.9" cy="204" r="4.4" fill="#2b3940"/>
<text x="1089.9" y="206" font-size="5" fill="#3e4d55" text-anchor="middle" font-weight="normal">3</text>
<circle cx="1101.6" cy="204" r="4.4" fill="#2b3940"/>
<text x="1101.6" y="206" font-size="5" fill="#3e4d55" text-anchor="middle" font-weight="normal">4</text>
<circle cx="1066.5" cy="225" r="4.4" fill="#2b3940"/>
<text x="1066.5" y="227" font-size="5" fill="#3e4d55" text-anchor="middle" font-weight="normal">1</text>
<circle cx="1078.2" cy="225" r="4.4" fill="#2b3940"/>
<text x="1078.2" y="227" font-size="5" fill="#3e4d55" text-anchor="middle" font-weight="normal">2</text>
<circle cx="1089.9" cy="225" r="4.4" fill="#2b3940"/>
<text x="1089.9" y="227" font-size="5" fill="#3e4d55" text-anchor="middle" font-weight="normal">3</text>
<circle cx="1101.6" cy="225" r="4.4" fill="#2b3940"/>
<text x="1101.6" y="227" font-size="5" fill="#3e4d55" text-anchor="middle" font-weight="normal">4</text>
<circle cx="1113.3" cy="225" r="4.4" fill="#2b3940"/>
<text x="1113.3" y="227" font-size="5" fill="#3e4d55" text-anchor="middle" font-weight="normal">5</text>
<circle cx="1125" cy="225" r="4.4" fill="#2b3940"/>
<text x="1125" y="227" font-size="5" fill="#3e4d55" text-anchor="middle" font-weight="normal">6</text>
<path d="M1328,195 V233 M1445.5,195 V233" stroke="#55636b" stroke-width="1"/>
<rect x="1228" y="204" width="19" height="19" rx="2" fill="#f5a51c"/>
<path d="M1230,200.5 v2 M1230,224.5 v2 M1224.5,206 h2 M1248.5,206 h2" stroke="#f5a51c" stroke-width="1.2"/>
<path d="M1233.7,200.5 v2 M1233.7,224.5 v2 M1224.5,209.7 h2 M1248.5,209.7 h2" stroke="#f5a51c" stroke-width="1.2"/>
<path d="M1237.4,200.5 v2 M1237.4,224.5 v2 M1224.5,213.4 h2 M1248.5,213.4 h2" stroke="#f5a51c" stroke-width="1.2"/>
<path d="M1241.1,200.5 v2 M1241.1,224.5 v2 M1224.5,217.1 h2 M1248.5,217.1 h2" stroke="#f5a51c" stroke-width="1.2"/>
<path d="M1244.8,200.5 v2 M1244.8,224.5 v2 M1224.5,220.8 h2 M1248.5,220.8 h2" stroke="#f5a51c" stroke-width="1.2"/>
<text x="1237.5" y="215.5" font-size="6" fill="#1a1a1a" text-anchor="middle" font-weight="bold">CPU</text>
<text x="1270" y="208.5" font-size="6.8" fill="#c9d0d4" text-anchor="middle" font-weight="bold">CPU</text>
<text x="1270" y="218" font-size="6.8" fill="#f4f6f8" text-anchor="middle" font-weight="bold">75%</text>
<circle cx="1306.7" cy="214" r="15.5" fill="#3d4b54"/>
<path d="M1306.7,214 L1306.7,198.5 A15.5,15.5 0 1 1 1291.2,214 Z" fill="#f5a51c"/>
<rect x="1343" y="208" width="22" height="13" rx="1" fill="#f5a51c"/>
<path d="M1345,204.5 v2.5 M1345,222 v2.5" stroke="#f5a51c" stroke-width="1.2"/>
<path d="M1348.6,204.5 v2.5 M1348.6,222 v2.5" stroke="#f5a51c" stroke-width="1.2"/>
<path d="M1352.2,204.5 v2.5 M1352.2,222 v2.5" stroke="#f5a51c" stroke-width="1.2"/>
<path d="M1355.8,204.5 v2.5 M1355.8,222 v2.5" stroke="#f5a51c" stroke-width="1.2"/>
<path d="M1359.4,204.5 v2.5 M1359.4,222 v2.5" stroke="#f5a51c" stroke-width="1.2"/>
<path d="M1363,204.5 v2.5 M1363,222 v2.5" stroke="#f5a51c" stroke-width="1.2"/>
<text x="1354" y="217.5" font-size="6.5" fill="#1a1a1a" text-anchor="middle" font-weight="bold">RAM</text>
<text x="1387" y="208.5" font-size="6.8" fill="#c9d0d4" text-anchor="middle" font-weight="bold">MEMORY</text>
<text x="1387" y="218" font-size="6.8" fill="#f4f6f8" text-anchor="middle" font-weight="bold">21%</text>
<circle cx="1424.3" cy="214" r="15.5" fill="#3d4b54"/>
<path d="M1424.3,214 L1424.3,198.5 A15.5,15.5 0 0 1 1439.3,210.1 Z" fill="#f5a51c"/>
<path d="M1467,206 a2.5,2.5 0 0 1 5,0 v13 a4.5,4.5 0 1 1 -5,0z" fill="none" stroke="#f5a51c" stroke-width="1.6"/>
<circle cx="1469.5" cy="222.5" r="2.3" fill="#f5a51c"/>
<path d="M1474.5,207 h3 M1474.5,210 h3 M1474.5,213 h3 M1474.5,216 h3" stroke="#f5a51c" stroke-width="1.1"/>
<text x="1502" y="208.5" font-size="6.8" fill="#c9d0d4" text-anchor="middle" font-weight="bold">TEMP.</text>
<text x="1502" y="217.5" font-size="6.8" fill="#eef0f2" text-anchor="middle" font-weight="bold">43.9°</text>
<circle cx="1540.6" cy="214" r="15.5" fill="#3d4b54"/>
<path d="M1540.6,214 L1540.6,198.5 A15.5,15.5 0 0 1 1545.4,228.7 Z" fill="#f5a51c"/>
<path d="M390.5,246.5 v-2 a3.5,3.5 0 0 1 7,0 v2" stroke="#f0f0f0" stroke-width="1.5" fill="none"/>
<rect x="389.5" y="244.5" width="2" height="3" rx="0" fill="#f0f0f0"/>
<rect x="396.5" y="244.5" width="2" height="3" rx="0" fill="#f0f0f0"/>
<rect x="388" y="254.6" width="19.6" height="15.2" rx="1.5" fill="#e9e9e9" stroke="#9aa" stroke-width="0.6"/>
<text x="397.8" y="265" font-size="7.6" fill="#444" text-anchor="middle" font-weight="normal">SRC</text>
<text x="389" y="284.5" font-size="6.6" fill="#d5dbe0" text-anchor="start" font-weight="bold">VOL.</text>
<rect x="411" y="280.3" width="94" height="3.4" rx="1.7" fill="#56666e"/>
<rect x="467" y="274.5" width="7" height="14.5" rx="3.5" fill="#e39a22"/>
<text x="518.5" y="262.5" font-size="12" fill="#f0f0f0" text-anchor="start" font-weight="normal">1</text>
<text x="519" y="269" font-size="6.2" fill="#e0e0e0" text-anchor="start" font-weight="normal">SRC</text>
<text x="518.5" y="283" font-size="12" fill="#f0f0f0" text-anchor="start" font-weight="normal">2</text>
<text x="519" y="289.5" font-size="6.2" fill="#e0e0e0" text-anchor="start" font-weight="normal">SRC</text>
<text x="645.5" y="262.5" font-size="12" fill="#f0f0f0" text-anchor="start" font-weight="normal">3</text>
<text x="646" y="269" font-size="6.2" fill="#e0e0e0" text-anchor="start" font-weight="normal">SRC</text>
<text x="645.5" y="283" font-size="12" fill="#f0f0f0" text-anchor="start" font-weight="normal">4</text>
<text x="646" y="289.5" font-size="6.2" fill="#e0e0e0" text-anchor="start" font-weight="normal">SRC</text>
<circle cx="587" cy="261.4" r="6.3" fill="none" stroke="#e4151c" stroke-width="1.4"/>
<path d="M587,257.4 v4.5" stroke="#e4151c" stroke-width="1.8"/>
<circle cx="587" cy="264.2" r="1" fill="#e4151c"/>
<circle cx="587" cy="282" r="6.3" fill="none" stroke="#e4151c" stroke-width="1.4"/>
<path d="M587,278 v4.5" stroke="#e4151c" stroke-width="1.8"/>
<circle cx="587" cy="284.8" r="1" fill="#e4151c"/>
<circle cx="713" cy="261.4" r="6.3" fill="none" stroke="#e4151c" stroke-width="1.4"/>
<path d="M713,257.4 v4.5" stroke="#e4151c" stroke-width="1.8"/>
<circle cx="713" cy="264.2" r="1" fill="#e4151c"/>
<circle cx="713" cy="282" r="6.3" fill="none" stroke="#37454c" stroke-width="1.4"/>
<path d="M713,278 v4.5" stroke="#37454c" stroke-width="1.8"/>
<circle cx="713" cy="284.8" r="1" fill="#37454c"/>
<text x="607" y="256" font-size="5.5" fill="#dfe3e6" text-anchor="middle" font-weight="bold">AGC</text>
<text x="607" y="295" font-size="5.5" fill="#dfe3e6" text-anchor="middle" font-weight="bold">AGC</text>
<path d="M602 258h33.61" stroke="#46525a" stroke-width="1.1" stroke-linecap="round" stroke-dasharray="0 2.1"/>
<rect x="601.5" y="257.1" width="2.5" height="1.8" rx="0" fill="#e4151c"/>
<path d="M602 261.7h33.61" stroke="#46525a" stroke-width="1.1" stroke-linecap="round" stroke-dasharray="0 2.1"/>
<rect x="601.5" y="260.8" width="2.5" height="1.8" rx="0" fill="#e4151c"/>
<path d="M602 283h33.61" stroke="#46525a" stroke-width="1.1" stroke-linecap="round" stroke-dasharray="0 2.1"/>
<rect x="601.5" y="282.1" width="2.5" height="1.8" rx="0" fill="#e4151c"/>
<path d="M602 286.5h33.61" stroke="#46525a" stroke-width="1.1" stroke-linecap="round" stroke-dasharray="0 2.1"/>
<rect x="601.5" y="285.6" width="2.5" height="1.8" rx="0" fill="#e4151c"/>
<path d="M602,263.5 v3.5 M602,277 v3.5M613,263.5 v3.5 M613,277 v3.5M624,263.5 v3.5 M624,277 v3.5M635,263.5 v3.5 M635,277 v3.5" stroke="#9aa5ab" stroke-width="1"/>
<path d="M601.2,257.2 h1.6v1.6h-1.6zM601.2,260.9 h1.6v1.6h-1.6zM601.2,282.2 h1.6v1.6h-1.6zM601.2,285.7 h1.6v1.6h-1.6zM612.2,257.2 h1.6v1.6h-1.6zM612.2,260.9 h1.6v1.6h-1.6zM612.2,282.2 h1.6v1.6h-1.6zM612.2,285.7 h1.6v1.6h-1.6zM623.2,257.2 h1.6v1.6h-1.6zM623.2,260.9 h1.6v1.6h-1.6zM623.2,282.2 h1.6v1.6h-1.6zM623.2,285.7 h1.6v1.6h-1.6zM634.2,257.2 h1.6v1.6h-1.6zM634.2,260.9 h1.6v1.6h-1.6zM634.2,282.2 h1.6v1.6h-1.6zM634.2,285.7 h1.6v1.6h-1.6z" fill="#fff"/>
<text x="602" y="274.5" font-size="6.3" fill="#f0f2f4" text-anchor="middle" font-weight="bold">-40</text>
<text x="613" y="274.5" font-size="6.3" fill="#f0f2f4" text-anchor="middle" font-weight="bold">-20</text>
<text x="624" y="274.5" font-size="6.3" fill="#f0f2f4" text-anchor="middle" font-weight="bold">0</text>
<text x="635" y="274.5" font-size="6.3" fill="#f0f2f4" text-anchor="middle" font-weight="bold">+20</text>
<text x="733" y="256" font-size="5.5" fill="#dfe3e6" text-anchor="middle" font-weight="bold">AGC</text>
<text x="733" y="295" font-size="5.5" fill="#dfe3e6" text-anchor="middle" font-weight="bold">AGC</text>
<path d="M728 258h33.61" stroke="#46525a" stroke-width="1.1" stroke-linecap="round" stroke-dasharray="0 2.1"/>
<rect x="727.5" y="257.1" width="2.5" height="1.8" rx="0" fill="#e4151c"/>
<path d="M728 261.7h33.61" stroke="#46525a" stroke-width="1.1" stroke-linecap="round" stroke-dasharray="0 2.1"/>
<rect x="727.5" y="260.8" width="2.5" height="1.8" rx="0" fill="#e4151c"/>
<path d="M728 283h33.61" stroke="#46525a" stroke-width="1.1" stroke-linecap="round" stroke-dasharray="0 2.1"/>
<path d="M728 283h25.21" stroke="#f2c10c" stroke-width="1.5" stroke-linecap="round" stroke-dasharray="0 2.1"/>
<rect x="752.5" y="282.1" width="2.5" height="1.8" rx="0" fill="#e4151c"/>
<path d="M728 286.5h33.61" stroke="#46525a" stroke-width="1.1" stroke-linecap="round" stroke-dasharray="0 2.1"/>
<path d="M728 286.5h25.21" stroke="#f2c10c" stroke-width="1.5" stroke-linecap="round" stroke-dasharray="0 2.1"/>
<rect x="752.5" y="285.6" width="2.5" height="1.8" rx="0" fill="#e4151c"/>
<path d="M728,263.5 v3.5 M728,277 v3.5M739,263.5 v3.5 M739,277 v3.5M750,263.5 v3.5 M750,277 v3.5M761,263.5 v3.5 M761,277 v3.5" stroke="#9aa5ab" stroke-width="1"/>
<path d="M727.2,257.2 h1.6v1.6h-1.6zM727.2,260.9 h1.6v1.6h-1.6zM727.2,282.2 h1.6v1.6h-1.6zM727.2,285.7 h1.6v1.6h-1.6zM738.2,257.2 h1.6v1.6h-1.6zM738.2,260.9 h1.6v1.6h-1.6zM738.2,282.2 h1.6v1.6h-1.6zM738.2,285.7 h1.6v1.6h-1.6zM749.2,257.2 h1.6v1.6h-1.6zM749.2,260.9 h1.6v1.6h-1.6zM749.2,282.2 h1.6v1.6h-1.6zM749.2,285.7 h1.6v1.6h-1.6zM760.2,257.2 h1.6v1.6h-1.6zM760.2,260.9 h1.6v1.6h-1.6zM760.2,282.2 h1.6v1.6h-1.6zM760.2,285.7 h1.6v1.6h-1.6z" fill="#fff"/>
<text x="728" y="274.5" font-size="6.3" fill="#f0f2f4" text-anchor="middle" font-weight="bold">-40</text>
<text x="739" y="274.5" font-size="6.3" fill="#f0f2f4" text-anchor="middle" font-weight="bold">-20</text>
<text x="750" y="274.5" font-size="6.3" fill="#f0f2f4" text-anchor="middle" font-weight="bold">0</text>
<text x="761" y="274.5" font-size="6.3" fill="#f0f2f4" text-anchor="middle" font-weight="bold">+20</text>
<rect x="778.5" y="251.8" width="21.8" height="8.6" rx="1.5" fill="#2a1d1d" stroke="#c8161d" stroke-width="1.1"/>
<text x="789.4" y="258.8" font-size="6.4" fill="#8e1a1d" text-anchor="middle" font-weight="bold">SRC-1</text>
<rect x="778.5" y="262.2" width="21.8" height="8.6" rx="1.5" fill="#2a1d1d" stroke="#c8161d" stroke-width="1.1"/>
<text x="789.4" y="269.2" font-size="6.4" fill="#8e1a1d" text-anchor="middle" font-weight="bold">SRC-2</text>
<rect x="778.5" y="272.6" width="21.8" height="8.6" rx="1.5" fill="#2a1d1d" stroke="#c8161d" stroke-width="1.1"/>
<text x="789.4" y="279.6" font-size="6.4" fill="#8e1a1d" text-anchor="middle" font-weight="bold">SRC-3</text>
<rect x="778.5" y="283" width="21.8" height="8.6" rx="1.5" fill="#2d2410" stroke="#f5a51c" stroke-width="1.1"/>
<text x="789.4" y="290" font-size="6.4" fill="#f5a51c" text-anchor="middle" font-weight="bold">SRC-4</text>
<path d="M801,256 q4,0 6,2.5 M801,266.5 q3,0 4.5,-1.5 M801,276.5 q3,0 4.5,-1.5 M801,287.5 q4,0 6,-3" stroke="#e8e8e8" stroke-width="0.9" fill="none"/>
<circle cx="812.3" cy="260" r="2.6" fill="#151d22" stroke="#f0f0f0" stroke-width="1.2"/>
<circle cx="808.5" cy="267.7" r="2.6" fill="#151d22" stroke="#f0f0f0" stroke-width="1.2"/>
<circle cx="808.5" cy="275" r="2.6" fill="#151d22" stroke="#f0f0f0" stroke-width="1.2"/>
<circle cx="812" cy="283" r="2.6" fill="#151d22" stroke="#f0f0f0" stroke-width="1.2"/>
<path d="M812,283 L825.5,271.5 M828,271.5 H834" stroke="#f0f0f0" stroke-width="1.3"/>
<circle cx="825.6" cy="271.4" r="2.6" fill="#151d22" stroke="#f0f0f0" stroke-width="1.2"/>
<text x="837" y="274.6" font-size="6.8" fill="#e8ecef" text-anchor="start" font-weight="bold">SELECTOR OUT.</text>
<rect x="828.5" y="252.5" width="23" height="9" rx="1.5" fill="#2d2410" stroke="#f5a51c" stroke-width="1.1"/>
<text x="840" y="259.8" font-size="6.6" fill="#f5a51c" text-anchor="middle" font-weight="bold">AUTO</text>
<rect x="854.5" y="252.5" width="18" height="9" rx="1.5" fill="#1c2428" stroke="#2e3a40" stroke-width="1"/>
<text x="863.5" y="259.8" font-size="6.4" fill="#2e3a40" text-anchor="middle" font-weight="bold">MAN</text>
<rect x="874.5" y="252.5" width="22" height="9" rx="1.5" fill="#1c2428" stroke="#2e3a40" stroke-width="1"/>
<text x="885.5" y="259.8" font-size="6.4" fill="#2e3a40" text-anchor="middle" font-weight="bold">TONE</text>
<rect x="829" y="280.3" width="25.5" height="8.7" rx="1.5" fill="#1c2428" stroke="#2e3a40" stroke-width="1"/>
<text x="841.7" y="287.3" font-size="6.4" fill="#2e3a40" text-anchor="middle" font-weight="bold">DELAY</text>
<text x="647" y="322.8" font-size="6.6" fill="#d5dbe0" text-anchor="start" font-weight="bold">INF.</text>
<path d="M655,332.6 h9 M689,332.6 h9 M706,332.6 h19 M746,332.6 h19" stroke="#a9b3b8" stroke-width="1"/>
<text x="676.5" y="335" font-size="6.3" fill="#b9c3c8" text-anchor="middle" font-weight="normal">CONFIG</text>
<text x="736" y="335" font-size="6.3" fill="#b9c3c8" text-anchor="middle" font-weight="normal">FREQ.</text>
<circle cx="665" cy="339.3" r="2.6" fill="#f5a51c"/>
<circle cx="687" cy="339.3" r="2.6" fill="#2f3d44"/>
<circle cx="711" cy="339.3" r="2.6" fill="#2f3d44"/>
<circle cx="734" cy="339.3" r="2.6" fill="#2f3d44"/>
<circle cx="759" cy="339.3" r="2.6" fill="#2f3d44"/>
<text x="665" y="347.5" font-size="6.2" fill="#f5a51c" text-anchor="middle" font-weight="bold">AUDIO</text>
<text x="687" y="347.5" font-size="5.8" fill="#2c383e" text-anchor="middle" font-weight="bold">MPX</text>
<text x="711" y="347.5" font-size="5.8" fill="#2c383e" text-anchor="middle" font-weight="bold">48kHz</text>
<text x="734" y="347.5" font-size="5.8" fill="#2c383e" text-anchor="middle" font-weight="bold">96kHz</text>
<text x="759" y="347.5" font-size="5.8" fill="#2c383e" text-anchor="middle" font-weight="bold">192kHz</text>
<text x="777.3" y="322.8" font-size="6.6" fill="#d5dbe0" text-anchor="start" font-weight="bold">INF.</text>
<path d="M785.3,332.6 h9 M819.3,332.6 h9 M836.3,332.6 h19 M876.3,332.6 h19" stroke="#a9b3b8" stroke-width="1"/>
<text x="806.8" y="335" font-size="6.3" fill="#b9c3c8" text-anchor="middle" font-weight="normal">CONFIG</text>
<text x="866.3" y="335" font-size="6.3" fill="#b9c3c8" text-anchor="middle" font-weight="normal">FREQ.</text>
<circle cx="795.3" cy="339.3" r="2.6" fill="#f5a51c"/>
<circle cx="817.3" cy="339.3" r="2.6" fill="#2f3d44"/>
<circle cx="841.3" cy="339.3" r="2.6" fill="#2f3d44"/>
<circle cx="864.3" cy="339.3" r="2.6" fill="#2f3d44"/>
<circle cx="889.3" cy="339.3" r="2.6" fill="#2f3d44"/>
<text x="795.3" y="347.5" font-size="6.2" fill="#f5a51c" text-anchor="middle" font-weight="bold">AUDIO</text>
<text x="817.3" y="347.5" font-size="5.8" fill="#2c383e" text-anchor="middle" font-weight="bold">MPX</text>
<text x="841.3" y="347.5" font-size="5.8" fill="#2c383e" text-anchor="middle" font-weight="bold">48kHz</text>
<text x="864.3" y="347.5" font-size="5.8" fill="#2c383e" text-anchor="middle" font-weight="bold">96kHz</text>
<text x="889.3" y="347.5" font-size="5.8" fill="#2c383e" text-anchor="middle" font-weight="bold">192kHz</text>
<rect x="389" y="370" width="10.5" height="11" rx="1" fill="#3a474e"/>
<rect x="403" y="370" width="4.5" height="11" rx="0" fill="#3a474e"/>
<rect x="410" y="370" width="4.5" height="11" rx="0" fill="#3a474e"/>
<path d="M418,370 L430.5,376 L418,382z" fill="#f5a51c"/>
<circle cx="447.5" cy="371.6" r="4.4" fill="none" stroke="#4a5860" stroke-width="0.9"/>
<circle cx="447.5" cy="371.6" r="0.9" fill="#4a5860"/>
<circle cx="472" cy="371.6" r="4.4" fill="none" stroke="#4a5860" stroke-width="0.9"/>
<circle cx="472" cy="371.6" r="0.9" fill="#4a5860"/>
<circle cx="494.7" cy="371.6" r="4.3" fill="none" stroke="#f5a51c" stroke-width="1.6"/>
<circle cx="494.7" cy="371.6" r="1.8" fill="#f5a51c"/>
<text x="447.5" y="383.5" font-size="5.8" fill="#a9b6bd" text-anchor="middle" font-weight="bold">SHUFFLE</text>
<text x="472" y="383.5" font-size="5.8" fill="#a9b6bd" text-anchor="middle" font-weight="bold">DATE</text>
<text x="496" y="383.5" font-size="5.8" fill="#a9b6bd" text-anchor="middle" font-weight="bold">NAME</text>
<text x="391.5" y="398.5" font-size="6.6" fill="#d5dbe0" text-anchor="start" font-weight="bold">INF.</text>
<text x="547" y="379" font-size="6.6" fill="#d5dbe0" text-anchor="end" font-weight="bold">STATUS</text>
<text x="546.5" y="399" font-size="6.6" fill="#d5dbe0" text-anchor="end" font-weight="bold">PROT.</text>
<text x="638.5" y="373.5" font-size="6.6" fill="#d5dbe0" text-anchor="start" font-weight="bold">RATE</text>
<text x="638.5" y="381.5" font-size="6.6" fill="#d5dbe0" text-anchor="start" font-weight="bold">kBits</text>
<text x="639" y="399" font-size="6.6" fill="#d5dbe0" text-anchor="start" font-weight="bold">DEC.</text>
<circle cx="714.5" cy="371" r="2.7" fill="#2f3d44"/>
<text x="721" y="373.4" font-size="6.4" fill="#dfe4e7" text-anchor="start" font-weight="bold">MONO</text>
<circle cx="714.5" cy="381.7" r="2.7" fill="#2f3d44"/>
<text x="721" y="384.1" font-size="6.4" fill="#dfe4e7" text-anchor="start" font-weight="bold">STEREO</text>
<circle cx="714.5" cy="392" r="2.7" fill="#2f3d44"/>
<text x="721" y="394.4" font-size="6.4" fill="#dfe4e7" text-anchor="start" font-weight="bold">16</text>
<circle cx="714.5" cy="402.3" r="2.7" fill="#2f3d44"/>
<text x="721" y="404.7" font-size="6.4" fill="#dfe4e7" text-anchor="start" font-weight="bold">32</text>
<circle cx="739.5" cy="392" r="2.7" fill="#2f3d44"/>
<text x="745" y="394.4" font-size="6.4" fill="#dfe4e7" text-anchor="start" font-weight="bold">44</text>
<text x="754" y="394.4" font-size="5" fill="#dfe4e7" text-anchor="start" font-weight="bold">kHz</text>
<circle cx="739.5" cy="402.3" r="2.7" fill="#2f3d44"/>
<text x="745" y="404.7" font-size="6.4" fill="#dfe4e7" text-anchor="start" font-weight="bold">48</text>
<text x="754" y="404.7" font-size="5" fill="#dfe4e7" text-anchor="start" font-weight="bold">kHz</text>
<rect x="828.4" y="366.7" width="22.1" height="8.6" rx="1.5" fill="#1c2428" stroke="#2e3a40" stroke-width="1"/>
<text x="839.5" y="373.6" font-size="6.4" fill="#2e3a40" text-anchor="middle" font-weight="bold">AUTO</text>
<rect x="853" y="366.7" width="20.5" height="8.6" rx="1.5" fill="#2d2410" stroke="#f5a51c" stroke-width="1.1"/>
<text x="863.3" y="373.6" font-size="6.4" fill="#f5a51c" text-anchor="middle" font-weight="bold">MAN</text>
<rect x="778.3" y="376.6" width="22.7" height="8.4" rx="1.5" fill="#2d2410" stroke="#f5a51c" stroke-width="1.1"/>
<text x="789.6" y="383.5" font-size="6.2" fill="#f5a51c" text-anchor="middle" font-weight="bold">DEC-1</text>
<rect x="778.3" y="386.9" width="22.7" height="8.4" rx="1.5" fill="#2d2410" stroke="#f5a51c" stroke-width="1.1"/>
<text x="789.6" y="393.8" font-size="6.2" fill="#f5a51c" text-anchor="middle" font-weight="bold">DEC-2</text>
<rect x="778.3" y="397.2" width="22.7" height="8.4" rx="1.5" fill="#2d2410" stroke="#f5a51c" stroke-width="1.1"/>
<text x="789.6" y="404.1" font-size="5.6" fill="#f5a51c" text-anchor="middle" font-weight="bold">PLAYER</text>
<path d="M801.5,380.5 q3,0 4,0.5 M801.5,391 q3,0 4.5,-2 M801.5,401.5 q4,0 7.5,-3" stroke="#e8e8e8" stroke-width="0.9" fill="none"/>
<circle cx="808.3" cy="381.3" r="2.6" fill="#151d22" stroke="#f0f0f0" stroke-width="1.2"/>
<circle cx="808.3" cy="388.7" r="2.6" fill="#151d22" stroke="#f0f0f0" stroke-width="1.2"/>
<circle cx="812" cy="396.8" r="2.6" fill="#151d22" stroke="#f0f0f0" stroke-width="1.2"/>
<path d="M812,396.8 L826,385.5 M828.5,385.5 H834" stroke="#f0f0f0" stroke-width="1.3"/>
<circle cx="826" cy="385.5" r="2.6" fill="#151d22" stroke="#f0f0f0" stroke-width="1.2"/>
<text x="837" y="388.3" font-size="6.8" fill="#e8ecef" text-anchor="start" font-weight="bold">MULTIMEDIA-OUT.</text>
<text x="938" y="379" font-size="6.6" fill="#d5dbe0" text-anchor="end" font-weight="bold">STATUS</text>
<text x="938" y="399" font-size="6.6" fill="#d5dbe0" text-anchor="end" font-weight="bold">PROT.</text>
<text x="1031" y="373.5" font-size="6.6" fill="#d5dbe0" text-anchor="start" font-weight="bold">RATE</text>
<text x="1031" y="381.5" font-size="6.6" fill="#d5dbe0" text-anchor="start" font-weight="bold">kBits</text>
<text x="1031" y="399" font-size="6.6" fill="#d5dbe0" text-anchor="start" font-weight="bold">ENC.</text>
<rect x="1111" y="367.3" width="37.5" height="16" rx="2" fill="#3a4752" stroke="#f5a51c" stroke-width="1.2"/>
<path d="M1126,371 L1134.5,375.3 L1126,379.6z" fill="#fff"/>
<circle cx="1106" cy="391.5" r="2.7" fill="#2f3d44"/>
<text x="1112" y="393.9" font-size="6.4" fill="#dfe4e7" text-anchor="start" font-weight="bold">16</text>
<circle cx="1106" cy="402" r="2.7" fill="#f5a51c"/>
<text x="1112" y="404.4" font-size="6.4" fill="#dfe4e7" text-anchor="start" font-weight="bold">32</text>
<circle cx="1130" cy="391.5" r="2.7" fill="#2f3d44"/>
<text x="1136.5" y="393.9" font-size="6.4" fill="#dfe4e7" text-anchor="start" font-weight="bold">44</text>
<text x="1145" y="393.9" font-size="5" fill="#dfe4e7" text-anchor="start" font-weight="bold">kHz</text>
<circle cx="1130" cy="402" r="2.7" fill="#2f3d44"/>
<text x="1136.5" y="404.4" font-size="6.4" fill="#dfe4e7" text-anchor="start" font-weight="bold">48</text>
<text x="1145" y="404.4" font-size="5" fill="#dfe4e7" text-anchor="start" font-weight="bold">kHz</text>
<!--DASH2-->
</svg>
<div id="content" class="a"></div>
<div id="scroll" class="a"></div>
<div class="a card" style="left:389px;top:446px;width:1174px;height:276px"></div>
<svg class="a" style="left:419px;top:485px" width="1114" height="223" viewBox="419 485 1114 223" font-family="Liberation Sans, sans-serif">
<defs><clipPath id="mclip"><rect x="420" y="486" width="1112" height="221"/></clipPath><filter id="blur4"><feGaussianBlur stdDeviation="6"/></filter></defs>
<g clip-path="url(#mclip)">
<rect x="419" y="485" width="1114" height="223" fill="#e8e4c3"/>
<g filter="url(#blur4)" fill="#bccb9f" opacity="0.55"><ellipse cx="690" cy="665" rx="45" ry="22"/><ellipse cx="780" cy="690" rx="30" ry="14"/><ellipse cx="930" cy="585" rx="55" ry="20"/><ellipse cx="990" cy="560" rx="40" ry="14"/><ellipse cx="1190" cy="560" rx="45" ry="25"/><ellipse cx="1140" cy="630" rx="35" ry="30"/><ellipse cx="1230" cy="665" rx="40" ry="14"/><ellipse cx="1500" cy="640" rx="40" ry="25"/><ellipse cx="1030" cy="650" rx="25" ry="25"/><ellipse cx="850" cy="600" rx="25" ry="20"/><ellipse cx="1380" cy="700" rx="50" ry="10"/><ellipse cx="820" cy="515" rx="40" ry="20"/><ellipse cx="1060" cy="510" rx="50" ry="18"/><ellipse cx="1240" cy="500" rx="40" ry="14"/><ellipse cx="1100" cy="660" rx="25" ry="25"/><ellipse cx="960" cy="500" rx="40" ry="12"/><ellipse cx="1470" cy="690" rx="40" ry="12"/><ellipse cx="740" cy="700" rx="40" ry="10"/></g>
<g fill="none" stroke="#f7f6ea" stroke-width="1" opacity="0.85"><path d="M780.1,519.3 Q785.6,527.6 786.6,535.3 M780.1,519.3 Q774.1,527.4 767.2,531.0 M780.1,519.3 Q787.8,515.7 800.3,506.1 M1143.8,502.0 Q1140.1,501.9 1134.8,503.1 M1143.8,502.0 Q1150.3,499.9 1153.1,500.6 M1143.8,502.0 Q1140.2,504.5 1130.8,506.1 M1015.9,566.8 Q1005.1,570.4 995.9,570.8 M1015.9,566.8 Q1004.3,561.9 993.4,560.9 M1015.9,566.8 Q1029.3,567.3 1039.7,573.2 M484.5,598.1 Q481.6,592.9 474.8,590.6 M484.5,598.1 Q475.9,607.1 465.7,610.3 M484.5,598.1 Q486.2,586.5 486.9,572.9 M461.7,581.8 Q467.1,583.2 474.8,590.6 M461.7,581.8 Q450.6,582.8 445.1,588.0 M461.7,581.8 Q451.3,584.2 439.5,587.4 M497.7,506.0 Q494.1,509.6 490.4,508.4 M497.7,506.0 Q491.2,501.8 489.2,500.9 M497.7,506.0 Q507.5,504.4 515.5,508.6 M892.1,668.7 Q888.7,667.1 891.2,667.3 M892.1,668.7 Q894.9,672.8 902.4,678.7 M892.1,668.7 Q882.8,667.6 876.8,665.4 M557.7,535.3 Q557.8,536.2 556.8,540.6 M557.7,535.3 Q560.7,538.3 562.3,541.6 M557.7,535.3 Q558.6,540.6 563.8,540.7 M1117.7,695.4 Q1118.1,689.6 1121.6,687.9 M1117.7,695.4 Q1113.4,691.0 1114.0,685.0 M1117.7,695.4 Q1127.3,692.9 1132.4,687.1 M1061.7,573.7 Q1055.5,569.6 1050.4,568.4 M1061.7,573.7 Q1060.4,581.1 1064.8,586.8 M1061.7,573.7 Q1062.8,565.0 1063.0,558.1 M1505.6,496.3 Q1508.6,503.9 1510.0,512.1 M1505.6,496.3 Q1503.5,506.5 1496.1,513.8 M1505.6,496.3 Q1512.3,504.9 1521.9,508.6 M1374.6,550.0 Q1374.3,542.1 1379.5,533.7 M1374.6,550.0 Q1364.3,548.9 1355.0,550.9 M1374.6,550.0 Q1381.4,554.3 1393.5,555.3 M580.4,512.0 Q576.2,505.0 577.8,497.5 M580.4,512.0 Q581.5,519.4 577.2,531.1 M580.4,512.0 Q569.0,516.4 561.3,519.4 M763.0,666.4 Q767.3,669.9 771.5,671.7 M763.0,666.4 Q759.0,655.9 751.1,649.3 M763.0,666.4 Q775.3,663.5 789.8,663.0 M621.0,614.5 Q623.1,605.1 630.7,590.9 M621.0,614.5 Q618.0,603.9 611.6,590.6 M621.0,614.5 Q629.3,608.1 643.5,597.5 M1130.5,568.3 Q1130.5,566.7 1127.6,565.5 M1130.5,568.3 Q1135.6,560.4 1137.8,553.1 M1130.5,568.3 Q1122.2,558.6 1117.3,553.7 M1029.1,499.9 Q1024.9,493.2 1024.0,492.0 M1029.1,499.9 Q1039.2,495.8 1051.4,488.8 M1029.1,499.9 Q1019.4,511.2 1007.4,518.4 M486.3,531.5 Q482.4,529.6 476.0,530.6 M486.3,531.5 Q487.2,538.1 487.5,545.4 M486.3,531.5 Q489.4,539.6 489.0,547.3 M1176.6,580.5 Q1179.5,581.1 1185.3,580.0 M1176.6,580.5 Q1170.5,573.4 1158.8,569.7 M1176.6,580.5 Q1176.3,562.5 1171.4,550.3 M769.3,615.4 Q766.9,611.7 767.3,611.2 M769.3,615.4 Q777.4,610.7 782.5,600.6 M769.3,615.4 Q763.8,600.6 755.3,587.8 M923.9,552.2 Q924.9,551.5 921.2,552.7 M923.9,552.2 Q920.3,551.3 919.8,545.4 M923.9,552.2 Q925.1,557.8 924.6,561.0 M1303.3,640.5 Q1305.8,647.8 1306.3,649.3 M1303.3,640.5 Q1305.0,648.0 1307.0,651.4 M1303.3,640.5 Q1309.1,647.0 1312.5,649.2 M691.4,612.9 Q689.1,615.6 687.5,615.6 M691.4,612.9 Q697.9,614.6 703.5,618.5 M691.4,612.9 Q680.1,607.4 672.1,600.4 M1004.0,679.4 Q999.2,687.4 999.5,690.5 M1004.0,679.4 Q1002.7,683.0 1005.6,692.3 M1004.0,679.4 Q1005.8,671.4 1012.2,658.2 M1231.1,549.6 Q1234.3,543.5 1239.3,541.7 M1231.1,549.6 Q1236.0,548.7 1246.5,553.3 M1231.1,549.6 Q1232.2,541.3 1231.0,531.4 M1510.0,512.1 Q1513.7,517.0 1515.0,519.0 M1510.0,512.1 Q1513.3,510.9 1521.9,508.6 M1510.0,512.1 Q1502.2,514.9 1496.1,513.8 M885.0,653.3 Q882.8,661.7 876.8,665.4 M885.0,653.3 Q885.5,662.5 891.2,667.3 M885.0,653.3 Q891.0,663.7 892.1,668.7 M589.0,594.1 Q589.7,587.5 595.2,584.5 M589.0,594.1 Q581.0,595.1 577.6,601.8 M589.0,594.1 Q584.0,599.8 574.9,601.8 M463.6,633.7 Q460.5,640.2 455.9,642.8 M463.6,633.7 Q455.6,626.9 446.0,622.8 M463.6,633.7 Q462.2,619.6 465.7,610.3 M1270.2,612.6 Q1273.1,615.7 1272.9,622.4 M1270.2,612.6 Q1273.4,605.0 1278.8,598.2 M1270.2,612.6 Q1260.7,619.1 1257.0,628.4 M1393.5,555.3 Q1403.9,552.4 1416.9,546.8 M1393.5,555.3 Q1385.7,543.5 1379.5,533.7 M1193.2,617.4 Q1202.3,622.0 1205.9,626.6 M1193.2,617.4 Q1188.4,629.0 1179.4,639.2 M1193.2,617.4 Q1177.4,627.6 1167.3,639.0 M1064.8,586.8 Q1067.6,596.5 1071.2,603.0 M1064.8,586.8 Q1056.7,578.9 1050.4,568.4 M1354.0,694.8 Q1354.6,689.7 1354.7,688.1 M1354.0,694.8 Q1361.2,697.7 1364.0,705.5 M1354.0,694.8 Q1365.5,698.5 1373.1,706.1 M947.2,632.8 Q946.9,633.1 952.7,637.1 M947.2,632.8 Q962.2,636.8 974.1,635.1 M947.2,632.8 Q934.9,620.3 928.5,607.9 M487.5,641.0 Q493.0,647.2 498.6,649.7 M487.5,641.0 Q484.6,648.4 485.6,655.8 M487.5,641.0 Q493.5,639.5 501.3,634.0 M1139.6,705.5 Q1134.6,698.9 1132.4,687.1 M1139.6,705.5 Q1148.4,698.9 1159.8,695.7 M1139.6,705.5 Q1129.9,700.4 1117.7,695.4 M1334.0,548.9 Q1330.0,546.8 1330.7,543.2 M1334.0,548.9 Q1330.4,544.7 1331.8,537.0 M1334.0,548.9 Q1337.5,542.5 1338.7,532.6 M849.0,633.8 Q855.1,619.8 859.6,607.6 M849.0,633.8 Q839.2,621.8 830.6,611.2 M849.0,633.8 Q855.4,613.4 857.1,598.0 M445.1,588.0 Q444.6,584.9 439.5,587.4 M445.1,588.0 Q439.0,596.5 436.5,607.9 M606.9,511.9 Q608.9,516.8 606.1,521.7 M606.9,511.9 Q606.8,501.6 608.2,486.6 M606.9,511.9 Q592.0,511.7 580.4,512.0 M485.6,655.8 Q492.3,654.3 498.6,649.7 M485.6,655.8 Q476.3,657.8 464.0,658.2 M563.8,540.7 Q562.2,540.1 562.3,541.6 M563.8,540.7 Q558.3,542.7 556.8,540.6 M854.7,678.6 Q856.0,686.2 855.4,690.8 M854.7,678.6 Q860.3,675.4 869.8,673.0 M854.7,678.6 Q864.9,680.3 871.7,681.1 M509.6,585.3 Q513.6,584.2 522.0,583.7 M509.6,585.3 Q517.0,578.2 519.8,574.3 M509.6,585.3 Q516.6,589.5 527.2,596.2 M1031.0,681.2 Q1034.2,688.1 1035.0,690.8 M1031.0,681.2 Q1034.5,685.8 1042.2,694.5 M1031.0,681.2 Q1040.7,680.6 1053.4,682.1 M1331.0,676.9 Q1334.7,674.0 1338.1,675.1 M1331.0,676.9 Q1321.9,670.9 1314.8,668.6 M1331.0,676.9 Q1335.8,668.2 1334.9,656.8 M729.6,577.8 Q728.0,573.5 731.1,563.7 M729.6,577.8 Q735.4,582.0 745.9,587.5 M729.6,577.8 Q721.9,580.0 708.4,578.6 M819.0,681.4 Q819.2,674.1 816.6,667.6 M819.0,681.4 Q824.9,686.1 834.5,689.2 M819.0,681.4 Q807.7,673.9 801.1,669.9 M1485.0,519.4 Q1483.1,513.6 1482.5,513.3 M1485.0,519.4 Q1481.6,519.1 1479.4,515.3 M1485.0,519.4 Q1482.3,517.7 1477.4,516.1 M616.0,537.3 Q611.8,529.3 606.1,521.7 M616.0,537.3 Q625.2,534.8 638.7,531.2 M616.0,537.3 Q610.8,526.0 606.9,511.9 M679.5,593.2 Q682.2,591.7 680.1,591.0 M679.5,593.2 Q676.2,598.3 672.1,600.4 M679.5,593.2 Q679.5,584.0 680.4,578.1 M1075.1,544.1 Q1070.4,553.4 1063.0,558.1 M1075.1,544.1 Q1086.8,552.5 1095.3,558.4 M1075.1,544.1 Q1070.5,559.9 1061.7,573.7 M424.6,578.6 Q423.7,574.2 421.2,570.3 M424.6,578.6 Q423.2,587.4 424.0,594.7 M424.6,578.6 Q429.6,582.5 439.5,587.4 M830.6,611.2 Q833.2,605.6 832.4,597.5 M830.6,611.2 Q820.9,607.7 809.7,607.3 M1479.8,638.6 Q1483.6,639.9 1488.2,641.7 M1479.8,638.6 Q1483.8,633.0 1486.3,628.5 M1479.8,638.6 Q1474.4,644.6 1466.9,645.5 M993.2,622.5 Q996.3,619.6 1003.2,614.8 M993.2,622.5 Q988.2,623.2 979.8,625.1 M993.2,622.5 Q997.0,632.5 1000.9,636.7 M1171.9,497.9 Q1159.8,499.5 1153.1,500.6 M1171.9,497.9 Q1163.4,507.0 1158.8,512.8 M1171.9,497.9 Q1165.7,507.9 1154.2,517.6 M1420.3,658.4 Q1420.8,661.8 1426.2,664.2 M1420.3,658.4 Q1426.2,659.9 1431.7,658.9 M1420.3,658.4 Q1411.9,662.7 1403.3,665.4 M1392.5,662.3 Q1399.9,664.0 1403.3,665.4 M1392.5,662.3 Q1379.8,665.9 1368.1,664.1 M1392.5,662.3 Q1397.6,653.0 1406.2,641.4 M856.3,574.2 Q859.8,580.9 864.5,584.5 M856.3,574.2 Q852.5,569.0 853.1,558.1 M856.3,574.2 Q862.3,565.8 870.0,562.8 M535.1,626.2 Q525.7,624.2 519.0,623.5 M535.1,626.2 Q533.6,617.5 538.0,609.8 M535.1,626.2 Q524.2,630.3 514.3,632.0 M489.2,500.9 Q488.9,503.2 490.4,508.4 M489.2,500.9 Q483.2,509.2 480.5,514.7 M652.1,521.9 Q648.4,518.1 639.4,514.0 M652.1,521.9 Q643.8,528.3 638.7,531.2 M652.1,521.9 Q658.0,527.3 665.2,536.1 M798.1,497.6 Q797.0,503.5 800.3,506.1 M798.1,497.6 Q803.9,494.6 805.9,490.0 M798.1,497.6 Q806.6,495.4 815.4,492.4 M420.3,519.4 Q421.2,534.7 425.5,544.4 M420.3,519.4 Q425.6,539.7 432.7,558.3 M420.3,519.4 Q442.5,524.7 461.0,526.2 M532.8,566.4 Q526.1,569.1 519.8,574.3 M532.8,566.4 Q527.7,572.8 522.0,583.7 M532.8,566.4 Q536.7,554.7 536.5,544.7 M448.4,679.2 Q449.1,686.3 445.7,696.2 M448.4,679.2 Q457.8,673.4 468.7,670.6 M448.4,679.2 Q437.0,680.4 426.5,685.3 M1102.8,518.8 Q1112.3,512.8 1127.7,504.2 M1102.8,518.8 Q1115.5,511.0 1130.8,506.1 M1102.8,518.8 Q1094.4,503.4 1088.4,488.3 M700.5,562.8 Q705.0,565.7 710.4,567.0 M700.5,562.8 Q701.2,555.9 700.0,550.7 M700.5,562.8 Q701.0,557.1 696.3,547.2 M824.9,513.1 Q822.1,523.3 824.5,529.6 M824.9,513.1 Q822.6,504.5 815.4,492.4 M824.9,513.1 Q810.4,511.6 800.3,506.1 M1364.0,705.5 Q1369.3,702.9 1373.1,706.1 M1364.0,705.5 Q1369.6,708.6 1381.0,706.3 M938.2,592.9 Q943.9,593.5 947.8,597.1 M938.2,592.9 Q931.0,598.3 928.5,607.9 M938.2,592.9 Q929.0,600.0 923.0,603.9 M515.5,508.6 Q516.6,501.6 519.5,498.7 M515.5,508.6 Q505.4,510.2 490.4,508.4 M801.0,544.5 Q797.0,547.7 797.0,546.2 M801.0,544.5 Q794.4,541.6 786.6,535.3 M801.0,544.5 Q813.8,539.4 824.5,529.6 M1341.7,521.7 Q1343.6,526.1 1342.1,526.4 M1341.7,521.7 Q1337.5,522.7 1336.9,521.4 M1341.7,521.7 Q1340.4,528.6 1338.7,532.6 M445.7,696.2 Q435.7,693.0 426.5,685.3 M445.7,696.2 Q457.5,682.0 468.7,670.6 M1007.4,518.4 Q1005.1,526.4 1005.9,538.7 M1007.4,518.4 Q997.8,520.5 988.2,528.0 M1007.4,518.4 Q997.9,506.1 988.8,498.0 M1024.0,492.0 Q1013.0,491.0 1002.1,490.1 M1024.0,492.0 Q1037.9,492.5 1051.4,488.8 M1007.3,702.2 Q1003.4,699.3 1005.6,692.3 M1007.3,702.2 Q1003.2,696.8 999.5,690.5 M1007.3,702.2 Q1006.6,692.9 1004.0,679.4 M1380.0,639.9 Q1383.3,636.5 1388.0,634.2 M1380.0,639.9 Q1389.0,648.5 1392.5,662.3 M1380.0,639.9 Q1393.9,641.5 1406.2,641.4 M710.4,567.0 Q706.6,573.5 708.4,578.6 M710.4,567.0 Q706.3,561.5 700.0,550.7 M605.8,656.6 Q605.7,660.9 607.6,659.5 M605.8,656.6 Q612.2,658.4 618.5,660.4 M605.8,656.6 Q606.3,645.3 602.0,639.7 M1012.2,658.2 Q1007.9,648.2 1000.9,636.7 M1012.2,658.2 Q1024.0,660.9 1037.7,659.3 M786.6,535.3 Q791.0,540.6 797.0,546.2 M1322.4,703.7 Q1318.8,703.3 1315.0,699.7 M1322.4,703.7 Q1325.3,701.4 1331.7,700.0 M1322.4,703.7 Q1309.1,702.5 1296.7,700.7 M1368.1,664.1 Q1376.0,650.8 1380.0,639.9 M1368.1,664.1 Q1363.4,675.5 1354.7,688.1 M1330.0,649.5 Q1332.5,651.8 1334.9,656.8 M1330.0,649.5 Q1321.3,652.2 1312.5,649.2 M1330.0,649.5 Q1325.4,641.7 1319.0,630.4 M672.1,600.4 Q675.1,594.6 680.1,591.0 M672.1,600.4 Q678.6,608.5 687.5,615.6 M815.4,492.4 Q811.4,492.9 805.9,490.0 M815.4,492.4 Q805.1,500.6 800.3,506.1 M451.1,547.8 Q460.3,549.6 464.9,550.9 M451.1,547.8 Q442.9,552.3 440.1,559.3 M451.1,547.8 Q438.9,551.2 432.7,558.3 M708.2,639.0 Q712.4,642.4 711.5,644.4 M708.2,639.0 Q709.6,650.2 709.1,657.9 M708.2,639.0 Q708.3,629.4 703.5,618.5 M1483.6,584.8 Q1483.5,576.5 1482.0,566.6 M1483.6,584.8 Q1493.2,579.7 1500.5,573.5 M1483.6,584.8 Q1493.7,594.1 1501.6,606.9 M1462.0,704.4 Q1466.3,702.7 1468.7,701.6 M1462.0,704.4 Q1474.5,698.2 1483.9,696.8 M1462.0,704.4 Q1443.0,702.5 1427.8,706.2 M1482.0,566.6 Q1492.9,572.5 1500.5,573.5 M1482.0,566.6 Q1491.2,560.0 1498.5,554.9 M665.2,536.1 Q660.3,541.8 651.7,544.1 M665.2,536.1 Q673.5,536.9 681.1,540.6 M638.7,531.2 Q637.9,522.1 639.4,514.0 M638.7,531.2 Q644.1,537.2 651.7,544.1 M1114.0,685.0 Q1118.6,689.0 1121.6,687.9 M1114.0,685.0 Q1120.5,686.4 1132.4,687.1 M1354.6,592.0 Q1341.6,584.5 1334.1,581.6 M1354.6,592.0 Q1345.2,595.6 1332.1,598.4 M1354.6,592.0 Q1345.1,586.4 1330.6,581.5 M1146.1,662.7 Q1140.1,658.2 1139.9,655.0 M1146.1,662.7 Q1136.4,665.6 1125.5,663.2 M1146.1,662.7 Q1142.2,674.7 1132.4,687.1 M514.3,632.0 Q516.1,625.4 519.0,623.5 M514.3,632.0 Q508.7,631.2 501.3,634.0 M1431.7,658.9 Q1426.8,658.7 1426.2,664.2 M1431.7,658.9 Q1437.9,652.3 1450.2,643.6 M1254.2,591.6 Q1251.6,587.2 1253.6,577.2 M1254.2,591.6 Q1241.8,590.9 1234.4,585.6 M1254.2,591.6 Q1242.4,596.8 1235.2,607.8 M618.5,660.4 Q614.4,658.4 607.6,659.5 M618.5,660.4 Q630.4,654.5 639.4,652.4 M789.8,663.0 Q792.7,668.1 801.1,669.9 M789.8,663.0 Q781.9,669.5 771.5,671.7 M1500.5,573.5 Q1500.9,561.7 1498.5,554.9 M866.3,695.2 Q864.2,701.5 860.4,705.3 M866.3,695.2 Q860.6,695.6 855.4,690.8 M866.3,695.2 Q867.6,691.0 871.7,681.1 M1226.0,523.6 Q1229.1,524.4 1229.6,531.0 M1226.0,523.6 Q1225.6,528.4 1231.0,531.4 M1226.0,523.6 Q1235.3,524.3 1240.7,530.0 M561.3,519.4 Q555.8,525.0 552.6,527.9 M561.3,519.4 Q557.5,529.5 557.7,535.3 M561.3,519.4 Q551.4,517.9 541.7,521.7 M1426.2,664.2 Q1421.7,673.2 1418.8,681.3 M582.5,668.7 Q586.2,676.1 590.5,681.4 M582.5,668.7 Q582.2,680.7 586.1,689.1 M582.5,668.7 Q573.3,678.8 565.8,687.1 M1510.1,631.3 Q1505.6,629.9 1499.6,629.6 M1510.1,631.3 Q1505.3,624.8 1501.9,614.9 M1510.1,631.3 Q1500.9,631.6 1486.3,628.5 M809.7,607.3 Q811.9,596.0 813.4,587.3 M809.7,607.3 Q818.4,605.2 832.4,597.5 M565.7,489.1 Q572.9,495.3 577.8,497.5 M565.7,489.1 Q554.2,496.0 544.7,501.5 M565.7,489.1 Q575.9,502.6 580.4,512.0 M1499.6,629.6 Q1493.6,627.9 1486.3,628.5 M1499.6,629.6 Q1500.4,624.6 1501.9,614.9 M1005.6,692.3 Q1001.8,692.5 999.5,690.5 M902.4,678.7 Q896.6,685.4 889.5,687.4 M902.4,678.7 Q898.7,671.7 891.2,667.3 M1338.7,532.6 Q1337.4,528.1 1342.1,526.4 M1338.7,532.6 Q1334.8,535.3 1331.8,537.0 M1338.7,532.6 Q1339.7,529.4 1336.9,521.4 M700.0,550.7 Q695.4,551.0 696.3,547.2 M700.0,550.7 Q700.5,549.9 697.2,544.7 M700.0,550.7 Q698.0,544.1 695.1,540.2 M687.5,615.6 Q697.6,618.9 703.5,618.5 M708.4,578.6 Q705.6,573.2 700.5,562.8 M565.8,687.1 Q575.0,685.6 586.1,689.1 M565.8,687.1 Q578.4,686.0 590.5,681.4 M813.4,587.3 Q813.5,584.1 817.2,578.0 M813.4,587.3 Q819.8,582.3 821.1,580.6 M813.4,587.3 Q805.3,584.2 795.9,578.9 M1068.7,685.8 Q1068.9,682.8 1069.5,683.3 M1068.7,685.8 Q1059.6,685.5 1053.4,682.1 M1068.7,685.8 Q1057.2,689.9 1042.2,694.5 M887.7,688.8 Q886.2,690.0 889.5,687.4 M887.7,688.8 Q881.4,683.4 871.7,681.1 M887.7,688.8 Q895.5,686.1 902.4,678.7 M977.8,603.5 Q980.9,604.0 979.3,604.3 M977.8,603.5 Q978.7,614.9 979.8,625.1 M977.8,603.5 Q984.2,594.3 994.4,588.7 M1002.1,490.1 Q993.5,495.3 988.8,498.0 M1002.1,490.1 Q993.9,493.0 987.3,495.0 M909.4,526.5 Q914.3,521.8 920.4,516.9 M909.4,526.5 Q917.4,523.3 929.6,525.7 M909.4,526.5 Q917.6,535.2 919.8,545.4 M424.4,662.6 Q421.9,658.6 424.2,653.0 M424.4,662.6 Q424.9,655.2 421.9,651.9 M424.4,662.6 Q426.0,673.0 426.5,685.3 M611.6,590.6 Q605.7,583.1 599.6,581.4 M611.6,590.6 Q600.6,590.5 595.2,584.5 M611.6,590.6 Q623.4,590.7 630.7,590.9 M1226.4,609.0 Q1231.2,607.0 1235.2,607.8 M1226.4,609.0 Q1227.5,618.1 1225.3,628.2 M1226.4,609.0 Q1233.1,598.9 1234.4,585.6 M782.5,600.6 Q776.8,608.7 767.3,611.2 M782.5,600.6 Q787.7,587.0 795.9,578.9 M1037.7,659.3 Q1039.4,654.7 1044.6,654.0 M1037.7,659.3 Q1031.8,667.6 1031.0,681.2 M1037.7,659.3 Q1046.4,652.3 1054.5,640.8 M538.0,609.8 Q542.7,609.2 548.0,603.3 M538.0,609.8 Q541.9,599.5 541.0,594.4 M696.3,547.2 Q697.4,545.3 697.2,544.7 M696.3,547.2 Q693.5,546.5 695.1,540.2 M1278.8,598.2 Q1274.4,610.7 1272.9,622.4 M1278.8,598.2 Q1267.3,597.7 1254.2,591.6 M1044.6,654.0 Q1050.6,646.7 1054.5,640.8 M1044.6,654.0 Q1042.6,637.3 1041.1,624.7 M1434.7,584.0 Q1445.1,580.8 1449.9,571.7 M1434.7,584.0 Q1423.7,584.5 1416.0,590.6 M1434.7,584.0 Q1443.1,575.2 1454.4,568.3 M1101.1,597.7 Q1109.9,600.9 1113.8,599.2 M1101.1,597.7 Q1095.9,599.9 1086.7,607.6 M1101.1,597.7 Q1087.9,601.6 1071.2,603.0 M989.5,639.1 Q996.1,640.8 1000.9,636.7 M989.5,639.1 Q979.2,634.9 974.1,635.1 M989.5,639.1 Q992.9,633.4 993.2,622.5 M923.0,603.9 Q926.8,604.7 928.5,607.9 M923.0,603.9 Q920.5,594.9 916.8,582.9 M951.6,694.1 Q956.9,694.7 967.0,697.4 M951.6,694.1 Q948.3,678.3 947.9,667.0 M951.6,694.1 Q964.9,689.7 978.5,689.3 M1197.5,679.7 Q1205.3,677.9 1216.2,680.3 M1197.5,679.7 Q1187.7,678.9 1175.8,683.9 M1197.5,679.7 Q1192.5,689.6 1184.8,703.1 M1467.7,543.4 Q1459.0,553.6 1455.9,558.8 M1467.7,543.4 Q1458.2,537.5 1452.0,526.4 M1467.7,543.4 Q1457.6,545.4 1443.1,542.8 M1042.2,694.5 Q1036.4,692.3 1035.0,690.8 M1042.2,694.5 Q1045.4,690.8 1053.4,682.1 M1354.1,516.3 Q1355.6,515.2 1353.1,512.5 M1354.1,516.3 Q1352.8,513.2 1352.1,512.0 M1354.1,516.3 Q1349.8,518.9 1341.7,521.7 M555.2,583.7 Q559.8,580.3 562.8,581.2 M555.2,583.7 Q546.4,586.4 541.0,594.4 M555.2,583.7 Q552.9,593.8 548.0,603.3 M500.7,539.2 Q499.6,544.2 502.8,544.7 M500.7,539.2 Q493.4,542.7 489.0,547.3 M500.7,539.2 Q492.0,540.9 487.5,545.4 M501.3,634.0 Q502.0,640.9 498.6,649.7 M1291.7,684.2 Q1292.2,687.9 1296.7,691.7 M1291.7,684.2 Q1293.1,694.9 1296.7,700.7 M1291.7,684.2 Q1301.0,679.3 1314.8,668.6 M591.7,644.3 Q594.2,644.3 602.0,639.7 M591.7,644.3 Q599.8,648.7 605.8,656.6 M591.7,644.3 Q599.6,650.6 607.6,659.5 M1154.2,517.6 Q1155.1,513.4 1158.8,512.8 M1154.2,517.6 Q1148.6,527.2 1144.6,531.0 M1154.2,517.6 Q1156.7,511.6 1153.1,500.6 M1401.7,699.8 Q1399.7,700.8 1402.4,704.3 M1401.7,699.8 Q1393.8,700.4 1381.0,706.3 M1401.7,699.8 Q1411.6,689.3 1418.8,681.3 M664.2,696.5 Q663.4,696.0 656.8,701.3 M664.2,696.5 Q660.6,694.8 653.3,695.0 M664.2,696.5 Q669.2,689.9 678.6,689.3 M862.9,593.7 Q862.0,596.0 857.1,598.0 M862.9,593.7 Q861.8,588.7 864.5,584.5 M862.9,593.7 Q863.7,598.9 859.6,607.6 M1520.7,670.0 Q1514.6,679.3 1507.7,692.9 M1520.7,670.0 Q1498.8,673.4 1480.8,673.6 M1520.7,670.0 Q1516.7,648.8 1510.1,631.3 M599.6,581.4 Q594.8,580.5 595.2,584.5 M599.6,581.4 Q594.9,587.7 589.0,594.1 M993.4,560.9 Q993.3,564.1 995.9,570.8 M993.4,560.9 Q988.7,560.0 982.7,556.5 M993.4,560.9 Q988.7,565.7 980.4,569.5 M637.7,556.4 Q634.4,558.8 634.6,566.5 M637.7,556.4 Q646.1,549.7 651.7,544.1 M637.7,556.4 Q639.5,541.1 638.7,531.2 M1223.0,490.3 Q1223.5,492.6 1220.2,496.9 M1223.0,490.3 Q1238.5,493.9 1249.9,493.0 M1223.0,490.3 Q1224.5,504.0 1226.0,523.6 M1036.1,583.3 Q1040.4,578.1 1039.7,573.2 M1036.1,583.3 Q1045.5,574.5 1050.4,568.4 M1036.1,583.3 Q1024.1,577.1 1015.9,566.8 M440.1,559.3 Q435.6,556.8 432.7,558.3 M440.1,559.3 Q432.0,552.4 425.5,544.4 M1113.8,599.2 Q1097.3,603.5 1086.7,607.6 M1113.8,599.2 Q1121.8,583.8 1130.5,568.3 M491.5,703.7 Q493.7,699.8 500.5,693.4 M491.5,703.7 Q494.7,692.4 494.1,676.7 M491.5,703.7 Q501.2,690.7 513.1,675.2 M1296.7,700.7 Q1296.0,697.7 1296.7,691.7 M1296.7,700.7 Q1303.2,702.4 1315.0,699.7 M536.5,544.7 Q549.4,542.6 556.8,540.6 M536.5,544.7 Q547.2,540.2 557.7,535.3 M464.0,658.2 Q464.2,655.6 464.0,658.9 M464.0,658.2 Q469.2,662.7 468.7,670.6 M464.0,658.2 Q458.0,648.1 455.9,642.8 M720.7,514.6 Q717.8,516.5 717.9,514.6 M720.7,514.6 Q714.8,507.2 714.6,504.6 M720.7,514.6 Q713.7,516.5 704.2,522.1 M889.5,687.4 Q887.9,678.7 892.1,668.7 M1330.7,543.2 Q1331.7,540.2 1331.8,537.0 M1330.7,543.2 Q1335.9,535.5 1338.7,532.6 M586.1,689.1 Q590.5,686.6 590.5,681.4 M586.1,689.1 Q590.0,688.8 599.3,692.9 M1054.5,640.8 Q1047.8,632.8 1041.1,624.7 M519.5,498.7 Q507.3,500.1 497.7,506.0 M519.5,498.7 Q531.5,498.0 544.7,501.5 M1185.3,580.0 Q1197.8,584.6 1209.3,584.8 M1185.3,580.0 Q1169.9,575.3 1158.8,569.7 M500.5,693.4 Q498.8,683.0 494.1,676.7 M500.5,693.4 Q508.8,686.9 513.1,675.2 M1125.5,663.2 Q1132.0,658.6 1139.9,655.0 M1125.5,663.2 Q1128.6,651.9 1127.6,640.4 M513.1,675.2 Q512.9,676.2 513.9,671.9 M513.1,675.2 Q505.3,675.0 494.1,676.7 M513.1,675.2 Q521.6,671.9 533.1,670.5 M494.1,676.7 Q503.6,677.2 513.9,671.9 M924.6,561.0 Q924.7,559.3 921.2,552.7 M924.6,561.0 Q924.1,555.2 919.8,545.4 M1035.0,690.8 Q1041.5,686.5 1053.4,682.1 M717.9,514.6 Q719.0,512.2 714.6,504.6 M717.9,514.6 Q709.5,517.9 704.2,522.1 M1005.9,538.7 Q997.9,532.5 988.2,528.0 M1005.9,538.7 Q995.2,535.3 984.1,537.1 M541.7,521.7 Q541.1,520.9 541.3,520.1 M541.7,521.7 Q544.3,522.6 552.6,527.9 M476.0,530.6 Q471.3,530.1 461.0,526.2 M476.0,530.6 Q480.9,523.4 480.5,514.7 M766.9,553.4 Q771.3,552.5 771.9,546.9 M766.9,553.4 Q767.9,556.3 764.2,564.8 M766.9,553.4 Q772.0,558.3 775.3,566.0 M1264.6,550.1 Q1256.6,550.3 1246.5,553.3 M1264.6,550.1 Q1252.2,548.5 1239.3,541.7 M1264.6,550.1 Q1263.4,534.1 1260.9,521.1 M976.1,525.3 Q973.8,526.0 971.3,527.4 M976.1,525.3 Q981.5,527.1 981.4,531.4 M976.1,525.3 Q973.3,530.9 972.7,534.6 M805.9,490.0 Q800.8,498.6 800.3,506.1 M698.5,489.4 Q699.5,494.9 695.0,500.3 M698.5,489.4 Q705.1,496.8 714.6,504.6 M698.5,489.4 Q687.3,489.0 675.7,492.9 M1235.2,607.8 Q1232.5,594.5 1234.4,585.6 M1235.2,607.8 Q1229.0,617.4 1225.3,628.2 M630.7,590.9 Q635.8,592.7 643.5,597.5 M630.7,590.9 Q630.2,579.0 634.6,566.5 M1459.3,509.5 Q1457.0,512.5 1450.6,514.1 M1459.3,509.5 Q1465.9,510.3 1471.6,509.4 M1459.3,509.5 Q1453.9,519.2 1452.0,526.4 M1330.6,581.5 Q1332.1,581.8 1334.1,581.6 M1330.6,581.5 Q1332.0,589.8 1332.1,598.4 M970.4,670.4 Q974.5,668.9 980.9,670.5 M970.4,670.4 Q972.8,679.9 978.5,689.3 M970.4,670.4 Q958.5,669.2 947.9,667.0 M857.1,598.0 Q855.4,601.9 859.6,607.6 M857.1,598.0 Q863.0,589.7 864.5,584.5 M1184.8,703.1 Q1180.6,693.5 1175.8,683.9 M1184.8,703.1 Q1172.1,699.7 1162.1,690.5 M1184.8,703.1 Q1171.1,701.0 1159.8,695.7 M801.1,669.9 Q806.8,666.2 816.6,667.6 M1205.9,626.6 Q1217.8,627.0 1225.3,628.2 M1205.9,626.6 Q1213.5,617.1 1226.4,609.0 M870.0,562.8 Q872.5,557.1 875.7,548.6 M870.0,562.8 Q859.2,558.8 853.1,558.1 M480.5,514.7 Q488.2,513.0 490.4,508.4 M704.2,522.1 Q697.6,530.2 695.1,540.2 M513.9,671.9 Q522.6,672.2 533.1,670.5 M1388.0,634.2 Q1397.8,639.9 1406.2,641.4 M1388.0,634.2 Q1401.9,629.5 1411.8,624.6 M733.5,539.5 Q728.9,541.7 721.4,540.9 M733.5,539.5 Q733.9,551.5 731.1,563.7 M733.5,539.5 Q747.6,539.7 758.3,537.5 M745.9,587.5 Q753.1,585.4 755.3,587.8 M745.9,587.5 Q740.7,572.6 731.1,563.7 M595.2,584.5 Q590.6,579.3 582.8,573.0 M712.7,698.6 Q702.3,701.8 691.8,699.4 M712.7,698.6 Q725.6,695.2 737.6,692.8 M712.7,698.6 Q732.0,699.7 748.0,696.4 M1501.6,606.9 Q1502.4,610.2 1501.9,614.9 M1501.6,606.9 Q1493.0,614.4 1485.0,622.4 M1501.6,606.9 Q1501.9,617.0 1499.6,629.6 M691.8,699.4 Q684.6,694.7 678.6,689.3 M691.8,699.4 Q683.9,690.8 677.3,684.4 M764.2,564.8 Q771.5,567.5 775.3,566.0 M764.2,564.8 Q768.1,555.5 771.9,546.9 M421.2,570.3 Q425.0,563.2 432.7,558.3 M421.2,570.3 Q428.5,565.3 440.1,559.3 M947.8,597.1 Q938.7,600.0 928.5,607.9 M947.8,597.1 Q937.9,599.4 923.0,603.9 M643.5,597.5 Q651.0,608.1 654.3,614.5 M425.5,544.4 Q431.8,549.6 432.7,558.3 M519.8,574.3 Q520.5,581.4 522.0,583.7 M466.3,491.0 Q459.6,492.7 458.8,499.8 M466.3,491.0 Q478.2,495.9 489.2,500.9 M466.3,491.0 Q475.9,504.5 480.5,514.7 M758.3,537.5 Q763.0,537.2 767.2,531.0 M758.3,537.5 Q765.2,542.3 771.9,546.9 M758.3,537.5 Q763.7,544.8 766.9,553.4 M1071.2,603.0 Q1078.1,605.8 1086.7,607.6 M1071.2,603.0 Q1076.1,615.7 1082.9,623.0 M1254.6,631.3 Q1256.8,630.0 1257.0,628.4 M1254.6,631.3 Q1261.3,626.1 1272.9,622.4 M1254.6,631.3 Q1261.8,622.3 1270.2,612.6 M1216.2,680.3 Q1221.6,684.6 1226.1,684.3 M1216.2,680.3 Q1227.9,673.1 1234.1,666.1 M853.1,558.1 Q845.7,560.2 839.1,560.7 M853.1,558.1 Q854.5,548.8 849.8,541.5 M1515.0,519.0 Q1518.7,515.7 1521.9,508.6 M1515.0,519.0 Q1503.6,515.3 1496.1,513.8 M468.7,670.6 Q469.2,666.7 464.0,658.9 M1411.8,624.6 Q1418.7,621.5 1425.5,623.1 M1411.8,624.6 Q1411.4,634.2 1406.2,641.4 M1236.0,665.5 Q1237.0,668.7 1234.1,666.1 M1236.0,665.5 Q1238.2,661.2 1235.6,657.9 M1236.0,665.5 Q1241.8,668.1 1251.8,673.2 M574.9,601.8 Q576.3,601.8 577.6,601.8 M574.9,601.8 Q567.0,589.6 562.8,581.2 M980.9,670.5 Q980.4,680.5 978.5,689.3 M980.9,670.5 Q991.6,677.9 1004.0,679.4 M1314.8,668.6 Q1311.7,657.3 1307.0,651.4 M1314.8,668.6 Q1313.1,660.6 1312.5,649.2 M1069.5,683.3 Q1060.3,683.8 1053.4,682.1 M1069.5,683.3 Q1052.9,687.7 1042.2,694.5 M1179.4,639.2 Q1175.4,639.6 1167.3,639.0 M1179.4,639.2 Q1193.6,631.1 1205.9,626.6 M675.7,492.9 Q673.9,493.5 672.2,493.5 M675.7,492.9 Q683.9,497.5 695.0,500.3 M568.0,565.7 Q572.4,566.8 576.5,562.0 M568.0,565.7 Q565.9,572.9 562.8,581.2 M568.0,565.7 Q573.1,567.3 582.8,573.0 M536.7,670.7 Q536.4,668.2 533.1,670.5 M536.7,670.7 Q522.9,669.3 513.9,671.9 M536.7,670.7 Q525.0,674.9 513.1,675.2 M1041.1,624.7 Q1040.0,643.9 1037.7,659.3 M1116.4,636.4 Q1110.4,632.8 1109.8,635.0 M1116.4,636.4 Q1123.6,637.3 1127.6,640.4 M1116.4,636.4 Q1122.2,648.9 1125.5,663.2 M964.1,486.7 Q960.4,487.7 960.6,491.5 M964.1,486.7 Q958.0,494.7 956.8,497.8 M964.1,486.7 Q976.2,490.0 987.3,495.0 M1307.0,651.4 Q1306.4,649.7 1306.3,649.3 M1307.0,651.4 Q1307.1,652.6 1312.5,649.2 M979.3,604.3 Q980.0,617.5 979.8,625.1 M979.3,604.3 Q986.5,597.2 994.4,588.7 M1153.1,500.6 Q1154.5,504.0 1158.8,512.8 M1239.3,541.7 Q1242.6,538.0 1240.7,530.0 M1239.3,541.7 Q1234.1,538.9 1231.0,531.4 M502.8,544.7 Q497.8,544.8 489.0,547.3 M502.8,544.7 Q495.7,547.8 487.5,545.4 M1231.0,531.4 Q1230.3,533.9 1229.6,531.0 M1231.0,531.4 Q1234.3,530.0 1240.7,530.0 M1242.7,701.6 Q1240.0,702.4 1234.8,706.5 M1242.7,701.6 Q1245.7,695.4 1251.0,684.6 M1242.7,701.6 Q1234.3,694.7 1226.1,684.3 M969.3,570.5 Q973.3,568.1 980.4,569.5 M969.3,570.5 Q975.1,561.7 982.7,556.5 M969.3,570.5 Q960.0,565.0 945.1,561.9 M952.7,637.1 Q963.8,633.8 974.1,635.1 M952.7,637.1 Q966.4,630.4 979.8,625.1 M1272.9,622.4 Q1264.3,622.8 1257.0,628.4 M1134.8,503.1 Q1130.5,506.6 1130.8,506.1 M1134.8,503.1 Q1130.3,502.1 1127.7,504.2 M583.9,542.1 Q581.2,544.1 582.2,548.6 M583.9,542.1 Q579.0,533.8 577.2,531.1 M583.9,542.1 Q574.9,540.5 563.8,540.7 M1246.5,553.3 Q1240.8,548.7 1239.3,541.7 M1051.4,488.8 Q1059.7,486.0 1072.9,486.0 M487.5,545.4 Q490.2,544.1 489.0,547.3 M1167.3,639.0 Q1153.2,649.0 1139.9,655.0 M1167.3,639.0 Q1158.5,648.8 1146.1,662.7 M1171.4,550.3 Q1174.3,541.4 1179.0,529.8 M1171.4,550.3 Q1159.7,554.1 1149.5,552.5 M1171.4,550.3 Q1163.4,562.7 1158.8,569.7 M994.4,588.7 Q995.2,578.1 995.9,570.8 M938.6,512.2 Q942.1,508.7 946.2,509.7 M938.6,512.2 Q936.8,515.6 932.5,521.9 M938.6,512.2 Q936.5,519.5 929.6,525.7 M1413.8,530.0 Q1414.6,536.9 1416.9,546.8 M1413.8,530.0 Q1418.8,538.3 1422.5,550.1 M1413.8,530.0 Q1428.4,524.0 1438.6,522.5 M1507.7,692.9 Q1495.9,695.1 1483.9,696.8 M1507.7,692.9 Q1492.9,684.9 1480.8,673.6 M439.5,587.4 Q431.0,592.0 424.0,594.7 M1331.7,700.0 Q1323.7,698.7 1315.0,699.7 M1331.7,700.0 Q1342.2,694.9 1354.0,694.8 M919.8,545.4 Q918.6,551.2 921.2,552.7 M653.3,695.0 Q654.0,699.1 656.8,701.3 M653.3,695.0 Q649.9,691.0 651.2,686.2 M654.3,614.5 Q662.4,607.5 672.1,600.4 M654.3,614.5 Q665.7,601.2 679.5,593.2 M577.6,601.8 Q585.3,591.5 595.2,584.5 M1479.4,515.3 Q1476.2,517.0 1477.4,516.1 M1479.4,515.3 Q1479.7,513.7 1482.5,513.3 M1332.1,598.4 Q1335.5,591.7 1334.1,581.6 M1406.2,641.4 Q1415.5,652.1 1420.3,658.4 M677.3,684.4 Q675.8,685.5 678.6,689.3 M677.3,684.4 Q667.9,691.5 664.2,696.5 M960.6,491.5 Q959.7,493.8 956.8,497.8 M960.6,491.5 Q952.9,501.5 946.2,509.7 M424.0,594.7 Q431.4,599.8 436.5,607.9 M576.5,562.0 Q581.7,566.6 582.8,573.0 M576.5,562.0 Q580.1,553.4 582.2,548.6 M771.5,671.7 Q764.5,686.6 762.0,696.7 M421.9,651.9 Q424.5,653.7 424.2,653.0 M421.9,651.9 Q421.5,665.8 426.5,685.3 M1353.1,512.5 Q1350.6,510.5 1352.1,512.0 M1353.1,512.5 Q1346.2,516.4 1341.7,521.7 M1450.2,643.6 Q1455.8,643.4 1466.9,645.5 M1450.2,643.6 Q1445.5,632.9 1439.1,626.1 M1422.5,550.1 Q1421.8,548.8 1416.9,546.8 M1422.5,550.1 Q1434.1,545.0 1443.1,542.8 M833.9,572.8 Q836.1,567.9 839.1,560.7 M833.9,572.8 Q833.9,563.1 835.8,559.3 M833.9,572.8 Q829.5,578.4 821.1,580.6 M1530.7,616.2 Q1519.1,621.0 1510.1,631.3 M1530.7,616.2 Q1518.4,616.2 1501.9,614.9 M1530.7,616.2 Q1513.4,610.0 1501.6,606.9 M821.1,580.6 Q816.8,581.1 817.2,578.0 M726.0,496.7 Q730.4,499.2 738.3,496.8 M726.0,496.7 Q721.8,498.1 714.6,504.6 M726.0,496.7 Q724.5,505.0 720.7,514.6 M737.6,692.8 Q744.3,696.5 748.0,696.4 M737.6,692.8 Q748.5,692.2 762.0,696.7 M697.2,544.7 Q698.9,542.0 695.1,540.2 M988.2,528.0 Q987.4,530.8 981.4,531.4 M988.2,528.0 Q987.6,534.5 984.1,537.1 M988.2,528.0 Q982.9,526.4 976.1,525.3 M835.2,697.3 Q832.1,694.5 834.5,689.2 M835.2,697.3 Q844.8,694.1 855.4,690.8 M835.2,697.3 Q829.6,687.1 819.0,681.4 M1403.3,665.4 Q1412.6,670.6 1418.8,681.3 M1121.6,687.9 Q1128.2,689.3 1132.4,687.1 M1466.1,607.4 Q1474.1,615.1 1485.0,622.4 M1466.1,607.4 Q1477.7,596.9 1483.6,584.8 M1466.1,607.4 Q1476.5,616.4 1486.3,628.5 M1220.2,496.9 Q1220.4,509.4 1226.0,523.6 M1220.2,496.9 Q1234.5,493.2 1249.9,493.0 M1234.4,585.6 Q1242.9,579.3 1253.6,577.2 M738.3,496.8 Q751.3,494.8 761.8,490.8 M738.3,496.8 Q724.8,499.2 714.6,504.6 M1450.6,514.1 Q1451.4,520.0 1452.0,526.4 M1450.6,514.1 Q1447.2,517.4 1438.6,522.5 M945.1,561.9 Q933.6,563.8 924.6,561.0 M945.1,561.9 Q932.4,557.5 923.9,552.2 M945.1,561.9 Q932.2,559.2 921.2,552.7 M751.1,649.3 Q761.6,662.1 771.5,671.7 M751.1,649.3 Q758.2,633.4 769.3,615.4 M1505.6,543.5 Q1504.0,542.0 1501.1,540.9 M1505.6,543.5 Q1503.7,551.2 1498.5,554.9 M1505.6,543.5 Q1496.6,536.4 1492.3,531.8 M1149.5,552.5 Q1142.8,551.0 1137.8,553.1 M1149.5,552.5 Q1151.5,559.8 1158.8,569.7 M1039.7,573.2 Q1043.2,572.0 1050.4,568.4 M1039.7,573.2 Q1050.4,571.1 1061.7,573.7 M606.1,521.7 Q592.2,516.7 580.4,512.0 M651.2,686.2 Q653.2,691.8 656.8,701.3 M651.2,686.2 Q655.1,688.4 664.2,696.5 M972.7,534.6 Q975.0,532.5 971.3,527.4 M972.7,534.6 Q966.0,537.6 964.3,538.0 M972.7,534.6 Q980.0,533.4 981.4,531.4 M1427.8,706.2 Q1412.7,705.2 1402.4,704.3 M1427.8,706.2 Q1422.9,691.9 1418.8,681.3 M1427.8,706.2 Q1415.0,700.1 1401.7,699.8 M920.4,516.9 Q927.5,522.1 929.6,525.7 M920.4,516.9 Q927.2,522.0 932.5,521.9 M634.0,506.0 Q637.6,508.5 639.4,514.0 M634.0,506.0 Q641.5,511.8 652.1,521.9 M634.0,506.0 Q633.5,520.3 638.7,531.2 M685.9,543.1 Q685.5,540.6 681.1,540.6 M685.9,543.1 Q688.6,542.5 695.1,540.2 M685.9,543.1 Q693.2,547.7 696.3,547.2 M1253.6,577.2 Q1248.0,567.0 1246.5,553.3 M880.2,601.8 Q885.7,609.8 887.1,614.8 M880.2,601.8 Q888.1,596.6 898.1,595.1 M880.2,601.8 Q873.5,596.7 862.9,593.7 M839.1,560.7 Q836.6,560.3 835.8,559.3 M1496.1,513.8 Q1489.7,518.6 1485.0,519.4 M1496.1,513.8 Q1487.7,510.8 1482.5,513.3 M979.8,625.1 Q977.3,630.9 974.1,635.1 M979.8,625.1 Q986.6,633.4 989.5,639.1 M1379.5,533.7 Q1369.7,545.0 1355.0,550.9 M721.4,540.9 Q710.7,545.8 700.0,550.7 M721.4,540.9 Q707.3,541.6 697.2,544.7 M1480.8,673.6 Q1482.8,682.7 1483.9,696.8 M1480.8,673.6 Q1475.9,685.6 1468.7,701.6 M1480.8,673.6 Q1473.5,662.4 1466.9,645.5 M1390.7,490.8 Q1401.6,489.0 1417.5,492.7 M1390.7,490.8 Q1371.5,499.8 1353.1,512.5 M1390.7,490.8 Q1372.7,498.4 1352.1,512.0 M455.9,642.8 Q462.0,653.0 464.0,658.9 M1416.0,590.6 Q1411.1,590.4 1402.8,591.0 M1416.0,590.6 Q1398.3,588.9 1383.1,585.3 M1072.9,486.0 Q1080.7,486.7 1088.4,488.3 M1072.9,486.0 Q1086.9,502.1 1102.8,518.8 M855.4,690.8 Q858.9,700.0 860.4,705.3 M1338.1,675.1 Q1338.9,663.9 1334.9,656.8 M1338.1,675.1 Q1345.2,681.2 1354.7,688.1 M1501.1,540.9 Q1497.1,535.5 1492.3,531.8 M1501.1,540.9 Q1498.0,545.4 1498.5,554.9 M541.3,520.1 Q545.9,523.8 552.6,527.9 M541.3,520.1 Q545.8,513.3 544.7,501.5 M1000.9,636.7 Q1004.2,628.6 1003.2,614.8 M1466.9,645.5 Q1480.3,644.3 1488.2,641.7 M1139.9,655.0 Q1135.6,645.1 1127.6,640.4 M1137.8,553.1 Q1133.8,560.0 1127.6,565.5 M562.3,541.6 Q558.4,541.5 556.8,540.6 M1127.6,640.4 Q1121.4,637.6 1109.8,635.0 M544.7,501.5 Q544.1,510.4 541.7,521.7 M1003.2,614.8 Q990.5,622.3 979.8,625.1 M851.5,535.4 Q847.8,536.6 849.8,541.5 M851.5,535.4 Q853.4,546.4 853.1,558.1 M851.5,535.4 Q861.1,543.0 875.7,548.6 M1088.4,488.3 Q1069.1,489.0 1051.4,488.8 M755.3,587.8 Q759.3,576.5 764.2,564.8 M755.3,587.8 Q761.7,598.9 767.3,611.2 M1486.3,628.5 Q1483.3,623.5 1485.0,622.4 M1402.8,591.0 Q1395.3,588.4 1383.1,585.3 M1402.8,591.0 Q1416.4,589.7 1434.7,584.0 M681.1,540.6 Q686.6,538.0 695.1,540.2 M1488.2,641.7 Q1487.5,633.6 1486.3,628.5 M1488.2,641.7 Q1493.9,636.0 1499.6,629.6 M761.8,490.8 Q769.3,505.5 780.1,519.3 M761.8,490.8 Q741.6,493.8 726.0,496.7 M887.1,542.9 Q881.9,543.2 875.7,548.6 M887.1,542.9 Q878.0,550.3 870.0,562.8 M887.1,542.9 Q897.9,536.8 909.4,526.5 M1162.1,690.5 Q1161.3,694.4 1159.8,695.7 M1162.1,690.5 Q1170.5,684.9 1175.8,683.9 M672.2,493.5 Q686.5,498.3 695.0,500.3 M672.2,493.5 Q683.0,493.4 698.5,489.4 M795.9,578.9 Q805.9,576.5 817.2,578.0 M795.9,578.9 Q788.4,572.8 775.3,566.0 M1179.0,529.8 Q1178.3,526.2 1174.3,526.9 M1179.0,529.8 Q1170.6,518.6 1158.8,512.8 M1306.3,649.3 Q1307.8,648.5 1312.5,649.2 M981.4,531.4 Q979.9,534.8 984.1,537.1 M666.2,654.1 Q651.1,652.0 639.4,652.4 M666.2,654.1 Q673.0,668.8 677.3,684.4 M666.2,654.1 Q661.0,670.9 651.2,686.2 M748.0,696.4 Q757.2,696.9 762.0,696.7 M748.0,696.4 Q758.0,683.6 763.0,666.4 M971.3,527.4 Q974.4,530.8 981.4,531.4 M668.3,578.2 Q664.5,577.8 662.6,574.3 M668.3,578.2 Q675.5,580.1 680.4,578.1 M668.3,578.2 Q662.9,572.1 662.0,567.5 M1159.8,695.7 Q1169.2,692.5 1175.8,683.9 M577.8,497.5 Q570.9,505.7 561.3,519.4 M486.9,572.9 Q490.5,565.8 492.9,563.5 M486.9,572.9 Q481.1,583.6 474.8,590.6 M1418.8,681.3 Q1417.2,672.4 1420.3,658.4 M1234.8,706.5 Q1231.5,693.9 1226.1,684.3 M1234.8,706.5 Q1241.0,695.2 1251.0,684.6 M1455.9,558.8 Q1457.2,564.0 1454.4,568.3 M1455.9,558.8 Q1450.6,562.4 1449.9,571.7 M626.3,692.8 Q628.5,699.7 635.4,703.0 M626.3,692.8 Q636.8,689.8 651.2,686.2 M626.3,692.8 Q611.5,694.0 599.3,692.9 M1249.9,493.0 Q1255.4,491.6 1262.3,494.4 M1249.9,493.0 Q1263.5,494.2 1272.5,495.0 M835.8,559.3 Q845.6,560.5 853.1,558.1 M608.2,486.6 Q623.8,493.4 634.0,506.0 M608.2,486.6 Q592.1,490.0 577.8,497.5 M731.1,563.7 Q720.8,567.6 710.4,567.0 M1482.5,513.3 Q1481.8,511.9 1477.4,516.1 M1492.3,531.8 Q1486.7,527.5 1485.0,519.4 M816.6,667.6 Q804.2,664.6 789.8,663.0 M834.5,689.2 Q844.8,688.0 855.4,690.8 M634.6,566.5 Q650.4,566.4 662.0,567.5 M1417.5,492.7 Q1430.3,508.3 1438.6,522.5 M1417.5,492.7 Q1413.1,510.3 1413.8,530.0 M876.8,665.4 Q871.6,671.6 869.8,673.0 M876.8,665.4 Q884.5,663.6 891.2,667.3 M1272.5,495.0 Q1265.4,493.9 1262.3,494.4 M1272.5,495.0 Q1281.0,499.7 1289.9,503.5 M458.8,499.8 Q468.9,506.4 480.5,514.7 M458.8,499.8 Q456.9,513.5 461.0,526.2 M1443.1,542.8 Q1446.6,531.7 1452.0,526.4 M1443.1,542.8 Q1449.3,553.7 1455.9,558.8 M1443.1,542.8 Q1438.2,530.5 1438.6,522.5 M1251.0,684.6 Q1252.4,677.5 1251.8,673.2 M1251.0,684.6 Q1242.2,675.0 1236.0,665.5 M797.0,546.2 Q783.1,547.0 771.9,546.9 M1485.0,622.4 Q1492.5,628.7 1499.6,629.6 M1485.0,622.4 Q1485.4,627.7 1479.8,638.6 M711.5,644.4 Q710.7,652.8 709.1,657.9 M711.5,644.4 Q709.7,633.1 703.5,618.5 M771.9,546.9 Q770.3,539.7 767.2,531.0 M424.2,653.0 Q424.5,667.8 426.5,685.3 M1439.1,626.1 Q1434.1,626.8 1425.5,623.1 M1439.1,626.1 Q1428.1,626.5 1411.8,624.6 M1468.9,491.4 Q1469.1,501.9 1471.6,509.4 M1468.9,491.4 Q1465.5,500.5 1459.3,509.5 M1468.9,491.4 Q1476.5,501.5 1482.5,513.3 M680.1,591.0 Q680.5,584.0 680.4,578.1 M1483.9,696.8 Q1473.7,698.2 1468.7,701.6 M849.8,541.5 Q843.4,554.0 839.1,560.7 M898.1,595.1 Q907.3,588.2 916.8,582.9 M898.1,595.1 Q891.1,603.3 887.1,614.8 M1452.0,526.4 Q1444.4,522.3 1438.6,522.5 M1095.3,558.4 Q1103.3,558.3 1117.3,553.7 M1095.3,558.4 Q1078.9,558.0 1063.0,558.1 M775.3,566.0 Q774.0,555.3 771.9,546.9 M1289.9,503.5 Q1274.1,496.3 1262.3,494.4 M1289.9,503.5 Q1290.7,518.1 1293.8,535.1 M639.4,652.4 Q624.9,656.2 607.6,659.5 M695.0,500.3 Q707.4,501.5 714.6,504.6 M457.7,608.1 Q464.2,609.7 465.7,610.3 M457.7,608.1 Q449.3,613.5 446.0,622.8 M457.7,608.1 Q447.6,610.9 436.5,607.9 M782.2,702.6 Q771.3,701.3 762.0,696.7 M782.2,702.6 Q776.4,689.4 771.5,671.7 M782.2,702.6 Q762.5,699.4 748.0,696.4 M1402.4,704.3 Q1394.1,703.9 1381.0,706.3 M527.2,596.2 Q523.1,587.1 522.0,583.7 M527.2,596.2 Q532.1,593.9 541.0,594.4 M527.2,596.2 Q533.8,601.3 538.0,609.8 M1209.3,584.8 Q1221.2,583.4 1234.4,585.6 M1209.3,584.8 Q1218.5,599.1 1226.4,609.0 M1109.8,635.0 Q1097.2,627.2 1082.9,623.0 M1251.8,673.2 Q1244.3,672.4 1234.1,666.1 M1158.8,512.8 Q1151.9,504.9 1143.8,502.0 M1355.0,550.9 Q1346.4,552.2 1334.0,548.9 M1355.0,550.9 Q1345.9,539.6 1338.7,532.6 M1050.4,568.4 Q1054.8,563.5 1063.0,558.1 M1240.7,530.0 Q1237.4,531.4 1229.6,531.0 M590.5,681.4 Q597.4,685.4 599.3,692.9 M860.4,705.3 Q846.8,702.8 835.2,697.3 M984.1,537.1 Q979.3,535.3 972.7,534.6 M1319.0,630.4 Q1312.2,634.5 1303.3,640.5 M1319.0,630.4 Q1313.1,639.3 1312.5,649.2 M947.9,667.0 Q947.6,652.8 952.7,637.1 M1354.7,688.1 Q1358.4,696.7 1364.0,705.5 M464.9,550.9 Q471.0,539.3 476.0,530.6 M464.9,550.9 Q475.9,545.2 487.5,545.4 M552.6,527.9 Q557.7,532.0 557.7,535.3 M1454.4,568.3 Q1455.1,567.3 1449.9,571.7 M1383.1,585.3 Q1369.5,590.0 1354.6,592.0 M1383.1,585.3 Q1387.3,567.9 1393.5,555.3 M709.1,657.9 Q704.2,636.0 703.5,618.5 M1471.6,509.4 Q1476.1,510.3 1477.4,516.1 M1471.6,509.4 Q1477.4,511.9 1479.4,515.3 M1471.6,509.4 Q1477.3,511.9 1482.5,513.3 M1082.9,623.0 Q1085.1,616.2 1086.7,607.6 M662.0,567.5 Q662.9,569.9 662.6,574.3 M662.0,567.5 Q672.7,571.4 680.4,578.1 M577.2,531.1 Q571.8,537.5 563.8,540.7 M577.2,531.1 Q581.4,538.7 582.2,548.6 M1144.6,531.0 Q1148.7,544.6 1149.5,552.5 M1144.6,531.0 Q1151.5,520.5 1158.8,512.8 M1174.3,526.9 Q1166.7,522.5 1158.8,512.8 M1174.3,526.9 Q1162.0,519.3 1154.2,517.6 M1304.4,607.1 Q1291.4,603.6 1278.8,598.2 M1304.4,607.1 Q1313.3,617.9 1319.0,630.4 M1304.4,607.1 Q1321.2,601.1 1332.1,598.4 M859.6,607.6 Q871.4,602.3 880.2,601.8 M1130.8,506.1 Q1126.4,503.0 1127.7,504.2 M602.0,639.7 Q602.2,649.6 607.6,659.5 M875.7,548.6 Q864.7,551.4 853.1,558.1 M817.2,578.0 Q828.2,574.6 833.9,572.8 M1381.0,706.3 Q1374.9,704.3 1373.1,706.1 M824.5,529.6 Q839.5,535.0 851.5,535.4 M871.7,681.1 Q868.7,674.2 869.8,673.0 M871.7,681.1 Q875.9,671.7 876.8,665.4 M932.5,521.9 Q934.0,523.8 929.6,525.7 M436.5,607.9 Q442.1,614.4 446.0,622.8 M436.5,607.9 Q439.8,597.4 439.5,587.4 M519.0,623.5 Q509.1,631.2 501.3,634.0 M832.4,597.5 Q824.4,590.4 821.1,580.6 M832.4,597.5 Q820.3,593.2 813.4,587.3 M541.0,594.4 Q543.9,601.0 548.0,603.3 M956.8,497.8 Q948.9,504.1 946.2,509.7 M1425.5,623.1 Q1415.3,634.8 1406.2,641.4 M1336.9,521.4 Q1342.2,524.7 1342.1,526.4 M1336.9,521.4 Q1330.3,518.1 1327.0,517.7 M1293.8,535.1 Q1277.8,542.2 1264.6,550.1 M1293.8,535.1 Q1275.7,526.3 1260.9,521.1 M662.6,574.3 Q673.1,577.1 680.4,578.1 M995.9,570.8 Q986.9,573.1 980.4,569.5 M1226.1,684.3 Q1228.4,675.6 1234.1,666.1 M1226.1,684.3 Q1229.0,677.1 1236.0,665.5 M465.7,610.3 Q472.5,599.1 474.8,590.6 M1262.3,494.4 Q1263.1,509.7 1260.9,521.1 M1352.1,512.0 Q1345.6,515.8 1341.7,521.7 M1117.3,553.7 Q1122.3,561.9 1127.6,565.5 M1117.3,553.7 Q1125.5,554.5 1137.8,553.1 M887.1,614.8 Q890.9,622.9 893.4,631.6 M893.4,631.6 Q889.7,644.8 885.0,653.3 M893.4,631.6 Q885.1,619.0 880.2,601.8 M916.8,582.9 Q919.9,573.6 924.6,561.0 M964.3,538.0 Q970.0,530.8 971.3,527.4 M964.3,538.0 Q972.4,534.6 976.1,525.3 M1269.1,658.4 Q1259.2,662.9 1251.8,673.2 M1269.1,658.4 Q1259.5,647.7 1254.6,631.3 M1269.1,658.4 Q1257.1,673.9 1251.0,684.6 M946.2,509.7 Q937.3,517.2 932.5,521.9 M562.8,581.2 Q570.4,575.1 582.8,573.0 M987.3,495.0 Q989.1,494.0 988.8,498.0 M1127.7,504.2 Q1134.8,505.6 1143.8,502.0 M1235.6,657.9 Q1236.2,664.3 1234.1,666.1 M1235.6,657.9 Q1246.6,662.7 1251.8,673.2 M988.8,498.0 Q974.8,494.1 964.1,486.7 M980.4,569.5 Q982.7,560.2 982.7,556.5 M635.4,703.0 Q644.4,697.4 653.3,695.0 M635.4,703.0 Q645.7,699.8 656.8,701.3 M967.0,697.4 Q969.8,696.3 978.5,689.3 M967.0,697.4 Q967.6,686.2 970.4,670.4 M1296.7,691.7 Q1303.5,695.6 1315.0,699.7 M492.9,563.5 Q488.7,555.0 489.0,547.3 M492.9,563.5 Q488.2,555.6 487.5,545.4 M1260.9,521.1 Q1248.7,527.0 1240.7,530.0 M1260.9,521.1 Q1266.7,505.7 1272.5,495.0 M1327.0,517.7 Q1333.5,519.7 1341.7,521.7 M1327.0,517.7 Q1337.0,521.2 1342.1,526.4 M461.0,526.2 Q469.0,523.3 480.5,514.7 M461.0,526.2 Q458.3,538.4 451.1,547.8"/></g>
<g fill="none" stroke="#fbfbf3" stroke-width="1.3" opacity="0.9"><path d="M840,510 L800,540 L770,570 L775,600"/><path d="M840,510 L860,540 L870,580 L890,620"/><path d="M830,512 L790,505 L760,510"/><path d="M840,510 L900,500 L950,495"/><path d="M870,580 L820,600 L790,640"/><path d="M700,650 L720,680 L760,700"/><path d="M660,660 L700,670 L740,660 L790,650"/><path d="M720,640 L730,707"/><path d="M960,640 L1000,660 L1010,700"/><path d="M1040,520 L1090,535 L1140,560"/><path d="M1180,620 L1230,630 L1270,640"/><path d="M1150,620 L1200,660 L1250,690"/><path d="M1300,520 L1350,540 L1420,550"/><path d="M1450,560 L1480,600 L1520,620"/><path d="M900,540 L950,560 L1000,580"/><path d="M1100,600 L1120,650 L1110,700"/><path d="M1330,490 L1300,550 L1280,600"/></g>
<g fill="none" stroke="#85858d" stroke-width="1.1"><path d="M757.5,642.2 L775,650 L800,657 L820,660 L838,663"/><path d="M633,655 L645,656 L655,660 L662,665 L656,690 L660,707"/><path d="M880,495 L905,510 L908,535 L890,560 L885,575 L895,600 L910,625"/><path d="M908,545 L940,550 L970,548 L1000,560 L1005,585"/><path d="M1005,570 L1040,560 L1060,570 L1090,590 L1120,600"/><path d="M1040,540 L1075,530 L1100,545 L1130,540 L1160,530"/><path d="M1060,490 L1050,505 L1070,520"/><path d="M1120,600 L1140,620 L1150,650 L1160,670 L1175,690 L1230,690 L1260,680"/><path d="M1150,620 L1180,630 L1230,625 L1260,618"/><path d="M1240,520 L1260,560 L1275,590 L1290,584"/><path d="M1320,490 L1350,500 L1400,510 L1440,520 L1490,490"/><path d="M1420,600 L1460,610 L1500,650 L1530,660"/><path d="M1085,600 L1100,640 L1105,660"/></g>
<g fill="#73b2e2">
<path d="M420,486 L754.6,486 L757,491.9 L758.6,499.8 L760.1,507.6 L761.7,513.9 L759.3,515.5 L753,513.9 L745.2,515.5 L740.4,517.1 L737.3,512.4 L732.6,510 L719.9,513.2 L707.3,517.1 L705.8,521 L712.1,525 L707.3,529.7 L713.6,535.2 L725.5,537.6 L734.1,539.2 L741.2,542.3 L745.2,547 L749.9,553.3 L751.5,560 L755,565 L762,567.6 L766.6,578.9 L765.4,590.2 L773.3,597 L766.6,610.6 L764.3,624.1 L762,637.7 L757.5,642.2 L730.4,640 L720,641.8 L688,637.4 L661.6,635.2 L651.7,634.1 L646.2,640.7 L633,646.2 L629.7,652.8 L635.2,659.4 L637.4,666 L636.3,677 L637.4,688 L638.5,707 L420,707Z"/>
<path d="M764.9,486 L765.7,493.5 L768.8,496.6 L780.6,499 L788.5,495.8 L789.3,486Z"/>
<path d="M798.2,707 L810,700 L820.8,691.9 L830,684 L836.6,676.1 L838.9,662.5 L836.6,651.2 L843.4,642.2 L854.7,637.7 L866,640 L877.3,642.2 L888.6,646.7 L899.9,642.2 L911.2,633.1 L920,628.6 L927.6,621.6 L937.8,618.2 L951.4,621.6 L959.9,631.8 L965,645.4 L968.4,655.6 L975.2,662.4 L988.8,672.6 L999,681.1 L1009.2,689.6 L1021.1,699.8 L1026.2,707Z"/>
<path d="M992.2,596.1 L990.5,611.4 L997.3,628.4 L1009.2,642 L1019.4,659 L1029.6,669.2 L1043.2,679.4 L1056.8,689.6 L1067,698.1 L1073.8,707 L1111.2,707 L1115.1,697 L1116.4,684 L1111.2,676.2 L1100.8,668.4 L1085,656 L1070,649 L1056.8,638.6 L1046.6,628.4 L1036.4,618.2 L1027.9,604.6 L1021.1,596.1 L1014.3,589.3 L1002.4,589.3Z"/>
<path d="M1181.4,707 L1190.5,699.6 L1203.5,697 L1216.5,698.3 L1227,701 L1228.3,707Z"/>
<path d="M1248.5,707 L1257,698 L1274,696.4 L1282.5,707Z"/>
<path d="M1304.6,567.2 L1316.5,565.5 L1328.4,570.6 L1342,579.1 L1352.2,580.8 L1335.2,594.4 L1345.4,601.2 L1352.2,611.4 L1355.6,618.2 L1369.2,611.4 L1384.5,602.9 L1403.2,601.2 L1416.8,606.3 L1427,613.1 L1444,625 L1461,638.6 L1478,655.6 L1486.4,669.2 L1488.1,682.8 L1481.4,689.6 L1461,696.4 L1435.5,696.4 L1410,693 L1396.4,686.2 L1384.5,679.4 L1376,674.3 L1359,674.3 L1342,676 L1325,684.5 L1308,689.6 L1291,691.3 L1274,687.9 L1260.4,679.4 L1250.2,664.1 L1257,650.5 L1267.2,635.2 L1270.6,616.5 L1279.1,604.6 L1289.3,584.2Z"/>
<path d="M1376,579.1 L1384.5,567.2 L1401.5,560.4 L1418.4,558.7 L1430.3,567.2 L1432,577.4 L1423.5,591 L1418.4,596.1 L1406.6,594.4 L1393,596.1 L1379.4,592.7Z"/>
</g>
<g fill="#e8e4c3"><path d="M939,650.5 L944,652 L946.5,660 L946,670 L943,680 L939,682 L935.5,673 L934.5,662 L936.5,654Z"/><path d="M930,690 L940,689 L947,693 L948,707 L924,707 L926,697Z"/></g>
<path d="M1330,495 Q1345,505 1360,500 L1370,515 M1350,520 L1365,535 L1380,545 M1500,520 L1515,535 M1450,590 L1470,600" stroke="#73b2e2" stroke-width="2" fill="none"/>
</g>
<text x="862" y="490" font-size="8.56" font-weight="bold" fill="#222" text-anchor="start" stroke="#f6f6ee" stroke-width="2" paint-order="stroke" >Luxembourg</text>
<text x="830" y="512" font-size="9.10" font-weight="bold" fill="#222" text-anchor="start" stroke="#f6f6ee" stroke-width="2" paint-order="stroke" >Paris</text>
<circle cx="827" cy="509" r="1.5" fill="#555"/>
<text x="809" y="539" font-size="12.31" font-weight="bold" fill="#222" text-anchor="start" stroke="#f6f6ee" stroke-width="2" paint-order="stroke" >France</text>
<text x="892" y="565" font-size="10.91" font-weight="bold" fill="#222" text-anchor="start" stroke="#f6f6ee" stroke-width="2" paint-order="stroke" >Switzerla</text>
<text x="851" y="579" font-size="9.10" font-weight="bold" fill="#222" text-anchor="start" stroke="#f6f6ee" stroke-width="2" paint-order="stroke" >Genève</text>
<text x="696" y="694" font-size="12.31" font-weight="bold" fill="#222" text-anchor="start" stroke="#f6f6ee" stroke-width="2" paint-order="stroke" >España</text>
<text x="1028" y="490" font-size="9.63" font-weight="bold" fill="#222" text-anchor="start" stroke="#f6f6ee" stroke-width="2" paint-order="stroke" >Česko</text>
<text x="1090" y="516" font-size="9.10" font-weight="bold" fill="#222" text-anchor="start" stroke="#f6f6ee" stroke-width="2" paint-order="stroke" >Slovensko</text>
<text x="1036" y="529" font-size="9.10" font-weight="bold" fill="#222" text-anchor="start" stroke="#f6f6ee" stroke-width="2" paint-order="stroke" >Wien</text>
<text x="1086" y="540" font-size="9.10" font-weight="bold" fill="#222" text-anchor="start" stroke="#f6f6ee" stroke-width="2" paint-order="stroke" >Budapest</text>
<text x="999" y="546" font-size="10.70" font-weight="bold" fill="#222" text-anchor="start" stroke="#f6f6ee" stroke-width="2" paint-order="stroke" >Österreich</text>
<text x="1072" y="559" font-size="12.31" font-weight="bold" fill="#222" text-anchor="start" stroke="#f6f6ee" stroke-width="2" paint-order="stroke" >Magyarország</text>
<text x="1289" y="502" font-size="12.31" font-weight="bold" fill="#222" text-anchor="start" stroke="#f6f6ee" stroke-width="2" paint-order="stroke" >Україна</text>
<text x="1489" y="517" font-size="9.10" font-weight="bold" fill="#222" text-anchor="start" stroke="#f6f6ee" stroke-width="2" paint-order="stroke" >Волгоград</text>
<text x="1245" y="555" font-size="11.24" font-weight="bold" fill="#222" text-anchor="start" stroke="#f6f6ee" stroke-width="2" paint-order="stroke" >Moldova</text>
<text x="1420" y="549" font-size="9.10" font-weight="bold" fill="#222" text-anchor="start" stroke="#f6f6ee" stroke-width="2" paint-order="stroke" >Ростов-</text>
<text x="1420" y="559" font-size="9.10" font-weight="bold" fill="#222" text-anchor="start" stroke="#f6f6ee" stroke-width="2" paint-order="stroke" >на-Дону</text>
<text x="1012" y="581" font-size="9.63" font-weight="bold" fill="#222" text-anchor="start" stroke="#f6f6ee" stroke-width="2" paint-order="stroke" >Slovenija</text>
<text x="1043" y="593" font-size="11.24" font-weight="bold" fill="#222" text-anchor="start" stroke="#f6f6ee" stroke-width="2" paint-order="stroke" >Hrvatska</text>
<text x="1180" y="589" font-size="11.77" font-weight="bold" fill="#222" text-anchor="start" stroke="#f6f6ee" stroke-width="2" paint-order="stroke" >România</text>
<text x="1072" y="616" font-size="9.10" font-weight="bold" fill="#222" text-anchor="start" stroke="#f6f6ee" stroke-width="2" paint-order="stroke" >Bosna</text>
<text x="1087" y="626" font-size="9.10" font-weight="bold" fill="#222" text-anchor="start" stroke="#f6f6ee" stroke-width="2" paint-order="stroke" >i</text>
<text x="1056" y="638" font-size="9.10" font-weight="bold" fill="#222" text-anchor="start" stroke="#f6f6ee" stroke-width="2" paint-order="stroke" >Hercegovina</text>
<text x="1117" y="628" font-size="11.24" font-weight="bold" fill="#222" text-anchor="start" stroke="#f6f6ee" stroke-width="2" paint-order="stroke" >Србија</text>
<text x="1180" y="622" font-size="9.63" font-weight="bold" fill="#222" text-anchor="start" stroke="#f6f6ee" stroke-width="2" paint-order="stroke" >București</text>
<text x="1102" y="655" font-size="8.56" font-weight="bold" fill="#222" text-anchor="start" stroke="#f6f6ee" stroke-width="2" paint-order="stroke" >Crna</text>
<text x="1102" y="663" font-size="8.56" font-weight="bold" fill="#222" text-anchor="start" stroke="#f6f6ee" stroke-width="2" paint-order="stroke" >Gora</text>
<text x="1125" y="658" font-size="8.56" font-weight="bold" fill="#222" text-anchor="start" stroke="#f6f6ee" stroke-width="2" paint-order="stroke" >Kosove</text>
<text x="1125" y="668" font-size="8.56" font-weight="bold" fill="#222" text-anchor="start" stroke="#f6f6ee" stroke-width="2" paint-order="stroke" >Kocobo</text>
<text x="983" y="667" font-size="12.31" font-weight="bold" fill="#222" text-anchor="start" stroke="#f6f6ee" stroke-width="2" paint-order="stroke" >Italia</text>
<text x="1183" y="661" font-size="11.24" font-weight="bold" fill="#222" text-anchor="start" stroke="#f6f6ee" stroke-width="2" paint-order="stroke" >България</text>
<text x="1130" y="681" font-size="8.56" font-weight="bold" fill="#222" text-anchor="start" stroke="#f6f6ee" stroke-width="2" paint-order="stroke" >Република</text>
<text x="1125" y="691" font-size="8.56" font-weight="bold" fill="#222" text-anchor="start" stroke="#f6f6ee" stroke-width="2" paint-order="stroke" >Македонија</text>
<text x="968" y="686" font-size="9.63" font-weight="bold" fill="#222" text-anchor="start" stroke="#f6f6ee" stroke-width="2" paint-order="stroke" >Roma</text>
<text x="1278" y="701" font-size="10.17" font-weight="bold" fill="#222" text-anchor="start" stroke="#f6f6ee" stroke-width="2" paint-order="stroke" >Istanbul</text>
<text x="1103" y="708" font-size="9.10" font-weight="bold" fill="#222" text-anchor="start" stroke="#f6f6ee" stroke-width="2" paint-order="stroke" >Shqipëria</text>
<text x="993" y="710" font-size="8.56" font-weight="bold" fill="#222" text-anchor="start" stroke="#f6f6ee" stroke-width="2" paint-order="stroke" >Napoli</text>
<text x="1487" y="676" font-size="9.63" font-weight="bold" fill="#222" text-anchor="start" stroke="#f6f6ee" stroke-width="2" paint-order="stroke" >საქართვ</text>
<text x="713" y="588" font-size="8.5" font-style="italic" fill="#cfe3f3" text-anchor="middle">Bay of</text>
<text x="713" y="601" font-size="8.5" font-style="italic" fill="#cfe3f3" text-anchor="middle">Biscay</text>
<text x="1366" y="650" font-size="11" font-style="italic" fill="#cfe3f3" text-anchor="middle" letter-spacing="1">Black Sea</text>
<text x="1050" y="650" font-size="8" font-style="italic" fill="#b9d6ee" transform="rotate(38 1050 650)" letter-spacing="1">Adriatic Sea</text>
<path d="M949,549.5 H1002 Q1009,549.5 1009,556.5 V575 Q1009,582 1002,582 H980.5 L975.5,588 L970.5,582 H949 Q942,582 942,575 V556.5 Q942,549.5 949,549.5Z" fill="#fff" stroke="#ccc" stroke-width="0.5"/>
<text x="957.5" y="567.5" font-size="8.8" fill="#222">FOX 3</text>
<path d="M998.5,554.5 l5,5 M1003.5,554.5 l-5,5" stroke="#b8b8b8" stroke-width="1.2"/>
<ellipse cx="982" cy="612" rx="8" ry="3" fill="#000" opacity="0.15"/>
<path d="M975.5,614.5 C973,608 967.5,602.5 967.5,596 A8,8 0 0 1 983.5,596 C983.5,602.5 978,608 975.5,614.5Z" fill="#2a7fc7" stroke="#1f6aa8" stroke-width="0.6"/>
<circle cx="975.8" cy="595.5" r="2.3" fill="#fff"/>
<rect x="1495.5" y="488" width="22" height="21" rx="2" fill="#e6e6e6" stroke="#bdbdbd" stroke-width="1"/>
<rect x="1495.5" y="683" width="22" height="21" rx="2" fill="#e6e6e6" stroke="#bdbdbd" stroke-width="1"/>
<path d="M1500,500 L1506,497 L1503,492 L1505,492 L1510,496.5 L1513.5,495 Q1515,495 1514,496.5 L1510.5,498.5 L1509,504 L1507.5,504 L1507,500 L1503,502 L1501.5,502.5Z" fill="#555"/>
<circle cx="1506.5" cy="693.5" r="4.5" fill="none" stroke="#555" stroke-width="1.3"/><path d="M1506.5,686 v4 M1506.5,697 v4 M1499,693.5 h4 M1510,693.5 h4" stroke="#555" stroke-width="1.5"/>
<rect x="419.5" y="485.5" width="1113" height="222" fill="none" stroke="#555" stroke-width="1.2"/>
</svg>
<div class="a card" style="left:389px;top:737px;width:1174px;height:161px"></div>

<div class="a" style="left:363px;top:409px;width:1225px;height:1px;background:#f4f6f8"></div>
<div class="a" style="left:363px;top:410px;width:1225px;height:12px;background:linear-gradient(#c9ccd0,#ecf0f5)"></div>
<div class="a" style="left:1555px;top:409px;width:33px;height:19px;background:#eceeef;border:1px solid #c4c7ca;border-top:none;border-radius:0 0 4px 4px"></div>
<svg class="a" style="left:1566px;top:415px" width="10" height="7" viewBox="0 0 10 7"><path d="M1,1 H9 L5,6Z" fill="#6b6f73"/></svg>
<div class="a" style="left:372px;top:422px;font-size:13px;color:#333">Home</div>
<div class="a" style="left:363px;top:409px;width:8px;height:489px;background:linear-gradient(90deg,#9aa0a6,#ecf0f5)"></div>
<div class="a" style="left:401px;top:462px;font-size:13px;font-weight:bold;color:#333">Target Localization</div>
<div class="a" style="left:401px;top:754px;font-size:13px;font-weight:bold;color:#333">Target References</div>
<div class="a" style="left:389px;top:788px;width:1174px;text-align:center;font-size:10px;font-weight:bold;color:#222">Name</div>
<div class="a" style="left:405px;top:803px;width:1141px;height:24px;background:#f4f4f4;border:1px solid #dcdcdc;border-radius:3px;text-align:center;line-height:23px;font-size:9px;font-weight:bold;color:#555">---</div>
<div class="a" style="left:389px;top:863px;width:1174px;text-align:center;font-size:10px;font-weight:bold;color:#222">Location</div>
<div class="a" style="left:405px;top:877px;width:1141px;height:21px;border-bottom:none;background:#f4f4f4;border:1px solid #dcdcdc;border-radius:3px;text-align:center;line-height:23px;font-size:9px;font-weight:bold;color:#555">---</div>
<div class="a" style="left:1589px;top:165px;width:9px;height:388px;background:#c1c1c1"></div>
<svg class="a" style="left:1590px;top:155px" width="8" height="6" viewBox="0 0 8 6"><path d="M1,5 H7 L4,1Z" fill="#a3a3a3"/></svg>
<svg class="a" style="left:1590px;top:889px" width="8" height="6" viewBox="0 0 8 6"><path d="M1,1 H7 L4,5Z" fill="#505050"/></svg>
<div class="a" style="left:178px;top:898px;width:1422px;height:1px;background:#e6e6e6"></div>

</body></html>
